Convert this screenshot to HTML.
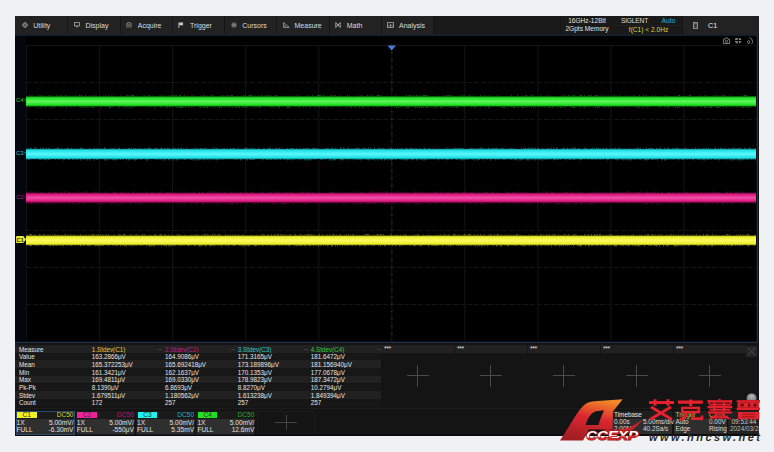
<!DOCTYPE html><html><head><meta charset="utf-8"><style>
html,body{margin:0;padding:0;}
body{width:774px;height:452px;background:#f0f1f5;position:relative;overflow:hidden;font-family:"Liberation Sans",sans-serif;}
.a{position:absolute;}
.t{position:absolute;white-space:nowrap;}
.mi{position:absolute;top:0;height:18px;width:52.26px;color:#dcdcdc;font-size:7px;line-height:18px;}
.mi span{position:absolute;left:17.6px;top:1px;}
.sep{position:absolute;top:0;width:1px;height:18px;background:#151515;}
.mi svg{position:absolute;left:6px;top:6.2px;}
.mt{font-size:6.3px;line-height:8px;color:#e6e6e6;}
.cb{position:absolute;top:411px;width:58px;height:23px;}
</style></head><body>
<div class="a" style="left:15px;top:16px;width:744px;height:419.6px;background:#0c0c0c"></div>
<div class="a" style="left:15px;top:16px;width:744px;height:18px;background:#222">
<div class="mi" style="left:0.64px"><svg width="6" height="6" viewBox="0 0 6 6"><circle cx="3" cy="3" r="2" fill="none" stroke="#a8a8a8" stroke-width="0.9"/><circle cx="3" cy="3" r="0.7" fill="#a8a8a8"/><path d="M3 0V1M3 5V6M0 3H1M5 3H6" stroke="#a8a8a8" stroke-width="0.8"/></svg><span>Utility</span></div>
<div class="sep" style="left:52.40px"></div>
<div class="mi" style="left:52.90px"><svg width="6" height="6" viewBox="0 0 6 6"><rect x="0.45" y="0.6" width="5.1" height="3.3" fill="none" stroke="#a8a8a8" stroke-width="0.8"/><rect x="2.3" y="4" width="1.4" height="1.3" fill="#a8a8a8"/></svg><span>Display</span></div>
<div class="sep" style="left:104.66px"></div>
<div class="mi" style="left:105.16px"><svg width="6" height="6" viewBox="0 0 6 6"><path d="M1 5.6V1.8Q1 0.7 2.2 0.7H3.8Q5 0.7 5 1.8V5.6M3 2V5.6" fill="none" stroke="#a8a8a8" stroke-width="0.8"/></svg><span>Acquire</span></div>
<div class="sep" style="left:156.92px"></div>
<div class="mi" style="left:157.42px"><svg width="6" height="6" viewBox="0 0 6 6"><path d="M0.9 0.6V5.8" stroke="#d0d0d0" stroke-width="0.9"/><path d="M1.3 0.6H5.4L4.6 1.9L5.4 3.2H1.3Z" fill="#d0d0d0"/></svg><span>Trigger</span></div>
<div class="sep" style="left:209.18px"></div>
<div class="mi" style="left:209.68px"><svg width="6" height="6" viewBox="0 0 6 6"><path d="M2 0.4V5.6M4 0.4V5.6M0.4 2.2H5.6M0.4 3.8H5.6" stroke="#999" stroke-width="0.8"/></svg><span>Cursors</span></div>
<div class="sep" style="left:261.44px"></div>
<div class="mi" style="left:261.94px"><svg width="7" height="6" viewBox="0 0 7 6"><path d="M0.6 0.6V5.4H6.2Z" fill="none" stroke="#a8a8a8" stroke-width="0.8"/><path d="M1.3 2.8V4.8H3.3Z" fill="#888"/></svg><span>Measure</span></div>
<div class="sep" style="left:313.70px"></div>
<div class="mi" style="left:314.20px"><svg width="6" height="6" viewBox="0 0 6 6"><path d="M0.8 0.6V5.4M5.2 0.6V5.4M0.8 0.6L3 3L5.2 0.6M0.8 5.4L3 3L5.2 5.4" fill="none" stroke="#c0c0c0" stroke-width="0.8"/></svg><span>Math</span></div>
<div class="sep" style="left:365.96px"></div>
<div class="mi" style="left:366.46px"><svg width="7" height="6" viewBox="0 0 7 6"><rect x="0.5" y="0.6" width="6" height="4.8" fill="none" stroke="#a8a8a8" stroke-width="0.8"/><path d="M2 4.6V3M3.5 4.6V1.8M5 4.6V2.6" stroke="#a8a8a8" stroke-width="0.8"/></svg><span>Analysis</span></div>
<div class="sep" style="left:418.22px"></div>
<div class="a" style="left:419px;top:0;width:126px;height:18px;background:#1a1a1a"></div>
<div class="a" style="left:545px;top:0;width:54px;height:18px;background:#1a1a1a;border-left:1px solid #151515;border-right:1px solid #151515"></div>
<div class="t" style="left:545px;top:1px;width:54px;text-align:center;font-size:6.6px;line-height:8px;color:#e0e0e0">16GHz-12Bit</div>
<div class="t" style="left:545px;top:9px;width:54px;text-align:center;font-size:6.6px;line-height:8px;color:#e0e0e0">2Gpts Memory</div>
<div class="a" style="left:600px;top:0;width:67px;height:18px;background:#1a1a1a;border-right:1px solid #151515"></div>
<div class="a" style="left:600px;top:9px;width:67px;height:1px;background:#222"></div>
<div class="a" style="left:639px;top:0;width:1px;height:9px;background:#151515"></div>
<div class="t" style="left:600px;top:1px;width:39px;text-align:center;font-size:6.7px;line-height:8px;color:#dcdcdc;letter-spacing:-0.2px">SIGLENT</div>
<div class="t" style="left:640px;top:1px;width:27px;text-align:center;font-size:6.8px;line-height:8px;color:#2ab4c8">Auto</div>
<div class="t" style="left:600px;top:9.5px;width:67px;text-align:center;font-size:6.6px;line-height:8px;color:#d8d848">f(C1) &lt; 2.0Hz</div>
<svg class="a" style="left:678px;top:6px" width="5" height="7" viewBox="0 0 5 7"><rect x="0.5" y="1" width="4" height="5.6" fill="none" stroke="#999" stroke-width="0.9"/><path d="M1.7 2V6M3.3 2V6" stroke="#777" stroke-width="0.6"/><rect x="0" y="0.2" width="5" height="0.9" fill="#999"/></svg>
<div class="t" style="left:693px;top:1px;font-size:7.2px;line-height:18px;color:#e8e8e8">C1</div>
</div>
<div class="a" style="left:15px;top:34px;width:744px;height:2px;background:#15202c"></div>
<div class="a" style="left:15px;top:36px;width:742px;height:306px;background:#000"></div>
<div class="a" style="left:15px;top:36px;width:11px;height:306px;background:#04060e"></div>
<svg class="a" style="left:0;top:0" width="774" height="452"><line x1="26.50" y1="45" x2="26.50" y2="341" stroke="#111111" stroke-width="1.3"/><line x1="99.56" y1="45" x2="99.56" y2="341" stroke="#111111" stroke-width="1.3"/><line x1="172.62" y1="45" x2="172.62" y2="341" stroke="#111111" stroke-width="1.3"/><line x1="245.68" y1="45" x2="245.68" y2="341" stroke="#111111" stroke-width="1.3"/><line x1="318.74" y1="45" x2="318.74" y2="341" stroke="#111111" stroke-width="1.3"/><line x1="391.80" y1="45" x2="391.80" y2="341" stroke="#111111" stroke-width="1.3"/><line x1="464.86" y1="45" x2="464.86" y2="341" stroke="#111111" stroke-width="1.3"/><line x1="537.92" y1="45" x2="537.92" y2="341" stroke="#111111" stroke-width="1.3"/><line x1="610.98" y1="45" x2="610.98" y2="341" stroke="#111111" stroke-width="1.3"/><line x1="684.04" y1="45" x2="684.04" y2="341" stroke="#111111" stroke-width="1.3"/><line x1="757.10" y1="45" x2="757.10" y2="341" stroke="#111111" stroke-width="1.3"/><line x1="26" y1="45.5" x2="757" y2="45.5" stroke="#141414" stroke-width="1.1"/><line x1="26" y1="82.5" x2="757" y2="82.5" stroke="#141414" stroke-width="1.1" stroke-dasharray="5 2"/><line x1="26" y1="119.5" x2="757" y2="119.5" stroke="#141414" stroke-width="1.1" stroke-dasharray="5 2"/><line x1="26" y1="156.5" x2="757" y2="156.5" stroke="#141414" stroke-width="1.1" stroke-dasharray="5 2"/><line x1="26" y1="193.5" x2="757" y2="193.5" stroke="#141414" stroke-width="1.1" stroke-dasharray="5 2"/><line x1="26" y1="230.5" x2="757" y2="230.5" stroke="#141414" stroke-width="1.1" stroke-dasharray="5 2"/><line x1="26" y1="267.5" x2="757" y2="267.5" stroke="#141414" stroke-width="1.1" stroke-dasharray="5 2"/><line x1="26" y1="304.5" x2="757" y2="304.5" stroke="#141414" stroke-width="1.1" stroke-dasharray="5 2"/><line x1="26" y1="341.5" x2="757" y2="341.5" stroke="#141414" stroke-width="1.1" stroke-dasharray="5 2"/><rect x="390.8" y="44.5" width="2" height="1.2" fill="#2e2e2e"/><rect x="390.8" y="51.9" width="2" height="1.2" fill="#2e2e2e"/><rect x="390.8" y="59.3" width="2" height="1.2" fill="#2e2e2e"/><rect x="390.8" y="66.7" width="2" height="1.2" fill="#2e2e2e"/><rect x="390.8" y="74.1" width="2" height="1.2" fill="#2e2e2e"/><rect x="390.8" y="81.5" width="2" height="1.2" fill="#2e2e2e"/><rect x="390.8" y="88.9" width="2" height="1.2" fill="#2e2e2e"/><rect x="390.8" y="96.3" width="2" height="1.2" fill="#2e2e2e"/><rect x="390.8" y="103.7" width="2" height="1.2" fill="#2e2e2e"/><rect x="390.8" y="111.1" width="2" height="1.2" fill="#2e2e2e"/><rect x="390.8" y="118.5" width="2" height="1.2" fill="#2e2e2e"/><rect x="390.8" y="125.9" width="2" height="1.2" fill="#2e2e2e"/><rect x="390.8" y="133.3" width="2" height="1.2" fill="#2e2e2e"/><rect x="390.8" y="140.7" width="2" height="1.2" fill="#2e2e2e"/><rect x="390.8" y="148.1" width="2" height="1.2" fill="#2e2e2e"/><rect x="390.8" y="155.5" width="2" height="1.2" fill="#2e2e2e"/><rect x="390.8" y="162.9" width="2" height="1.2" fill="#2e2e2e"/><rect x="390.8" y="170.3" width="2" height="1.2" fill="#2e2e2e"/><rect x="390.8" y="177.7" width="2" height="1.2" fill="#2e2e2e"/><rect x="390.8" y="185.1" width="2" height="1.2" fill="#2e2e2e"/><rect x="390.8" y="192.5" width="2" height="1.2" fill="#2e2e2e"/><rect x="390.8" y="199.9" width="2" height="1.2" fill="#2e2e2e"/><rect x="390.8" y="207.3" width="2" height="1.2" fill="#2e2e2e"/><rect x="390.8" y="214.7" width="2" height="1.2" fill="#2e2e2e"/><rect x="390.8" y="222.1" width="2" height="1.2" fill="#2e2e2e"/><rect x="390.8" y="229.5" width="2" height="1.2" fill="#2e2e2e"/><rect x="390.8" y="236.9" width="2" height="1.2" fill="#2e2e2e"/><rect x="390.8" y="244.3" width="2" height="1.2" fill="#2e2e2e"/><rect x="390.8" y="251.7" width="2" height="1.2" fill="#2e2e2e"/><rect x="390.8" y="259.1" width="2" height="1.2" fill="#2e2e2e"/><rect x="390.8" y="266.5" width="2" height="1.2" fill="#2e2e2e"/><rect x="390.8" y="273.9" width="2" height="1.2" fill="#2e2e2e"/><rect x="390.8" y="281.3" width="2" height="1.2" fill="#2e2e2e"/><rect x="390.8" y="288.7" width="2" height="1.2" fill="#2e2e2e"/><rect x="390.8" y="296.1" width="2" height="1.2" fill="#2e2e2e"/><rect x="390.8" y="303.5" width="2" height="1.2" fill="#2e2e2e"/><rect x="390.8" y="310.9" width="2" height="1.2" fill="#2e2e2e"/><rect x="390.8" y="318.3" width="2" height="1.2" fill="#2e2e2e"/><rect x="390.8" y="325.7" width="2" height="1.2" fill="#2e2e2e"/><rect x="390.8" y="333.1" width="2" height="1.2" fill="#2e2e2e"/><rect x="390.8" y="340.5" width="2" height="1.2" fill="#2e2e2e"/><rect x="25.5" y="192.5" width="1.2" height="2" fill="#2e2e2e"/><rect x="40.1" y="192.5" width="1.2" height="2" fill="#2e2e2e"/><rect x="54.7" y="192.5" width="1.2" height="2" fill="#2e2e2e"/><rect x="69.3" y="192.5" width="1.2" height="2" fill="#2e2e2e"/><rect x="83.9" y="192.5" width="1.2" height="2" fill="#2e2e2e"/><rect x="98.5" y="192.5" width="1.2" height="2" fill="#2e2e2e"/><rect x="113.1" y="192.5" width="1.2" height="2" fill="#2e2e2e"/><rect x="127.7" y="192.5" width="1.2" height="2" fill="#2e2e2e"/><rect x="142.3" y="192.5" width="1.2" height="2" fill="#2e2e2e"/><rect x="156.9" y="192.5" width="1.2" height="2" fill="#2e2e2e"/><rect x="171.5" y="192.5" width="1.2" height="2" fill="#2e2e2e"/><rect x="186.1" y="192.5" width="1.2" height="2" fill="#2e2e2e"/><rect x="200.7" y="192.5" width="1.2" height="2" fill="#2e2e2e"/><rect x="215.3" y="192.5" width="1.2" height="2" fill="#2e2e2e"/><rect x="229.9" y="192.5" width="1.2" height="2" fill="#2e2e2e"/><rect x="244.5" y="192.5" width="1.2" height="2" fill="#2e2e2e"/><rect x="259.1" y="192.5" width="1.2" height="2" fill="#2e2e2e"/><rect x="273.7" y="192.5" width="1.2" height="2" fill="#2e2e2e"/><rect x="288.3" y="192.5" width="1.2" height="2" fill="#2e2e2e"/><rect x="302.9" y="192.5" width="1.2" height="2" fill="#2e2e2e"/><rect x="317.5" y="192.5" width="1.2" height="2" fill="#2e2e2e"/><rect x="332.1" y="192.5" width="1.2" height="2" fill="#2e2e2e"/><rect x="346.7" y="192.5" width="1.2" height="2" fill="#2e2e2e"/><rect x="361.3" y="192.5" width="1.2" height="2" fill="#2e2e2e"/><rect x="375.9" y="192.5" width="1.2" height="2" fill="#2e2e2e"/><rect x="390.5" y="192.5" width="1.2" height="2" fill="#2e2e2e"/><rect x="405.1" y="192.5" width="1.2" height="2" fill="#2e2e2e"/><rect x="419.7" y="192.5" width="1.2" height="2" fill="#2e2e2e"/><rect x="434.3" y="192.5" width="1.2" height="2" fill="#2e2e2e"/><rect x="448.9" y="192.5" width="1.2" height="2" fill="#2e2e2e"/><rect x="463.5" y="192.5" width="1.2" height="2" fill="#2e2e2e"/><rect x="478.1" y="192.5" width="1.2" height="2" fill="#2e2e2e"/><rect x="492.7" y="192.5" width="1.2" height="2" fill="#2e2e2e"/><rect x="507.3" y="192.5" width="1.2" height="2" fill="#2e2e2e"/><rect x="521.9" y="192.5" width="1.2" height="2" fill="#2e2e2e"/><rect x="536.5" y="192.5" width="1.2" height="2" fill="#2e2e2e"/><rect x="551.1" y="192.5" width="1.2" height="2" fill="#2e2e2e"/><rect x="565.7" y="192.5" width="1.2" height="2" fill="#2e2e2e"/><rect x="580.3" y="192.5" width="1.2" height="2" fill="#2e2e2e"/><rect x="594.9" y="192.5" width="1.2" height="2" fill="#2e2e2e"/><rect x="609.5" y="192.5" width="1.2" height="2" fill="#2e2e2e"/><rect x="624.1" y="192.5" width="1.2" height="2" fill="#2e2e2e"/><rect x="638.7" y="192.5" width="1.2" height="2" fill="#2e2e2e"/><rect x="653.3" y="192.5" width="1.2" height="2" fill="#2e2e2e"/><rect x="667.9" y="192.5" width="1.2" height="2" fill="#2e2e2e"/><rect x="682.5" y="192.5" width="1.2" height="2" fill="#2e2e2e"/><rect x="697.1" y="192.5" width="1.2" height="2" fill="#2e2e2e"/><rect x="711.7" y="192.5" width="1.2" height="2" fill="#2e2e2e"/><rect x="726.3" y="192.5" width="1.2" height="2" fill="#2e2e2e"/><rect x="740.9" y="192.5" width="1.2" height="2" fill="#2e2e2e"/><rect x="755.5" y="192.5" width="1.2" height="2" fill="#2e2e2e"/><path d="M387.5 45.5H396L391.7 50.6Z" fill="#4a78d6"/><defs><linearGradient id="tg" x1="0" y1="0" x2="0" y2="1"><stop offset="0" stop-color="#0e8e0e"/><stop offset="0.14" stop-color="#20dc20"/><stop offset="0.5" stop-color="#5cf85c"/><stop offset="0.86" stop-color="#20dc20"/><stop offset="1" stop-color="#0e8e0e"/></linearGradient></defs><rect x="26" y="96.4" width="731" height="10.0" fill="url(#tg)"/><path d="M26 96.4v-0.5h1v0.5zM27 96.4v-0.5h1v0.5zM27 106.4v1h1v-1zM29 96.4v-1.5h1v1.5zM29 106.4v1h1v-1zM30 106.4v0.5h1v-0.5zM31 96.4v-1h1v1zM32 96.4v-1h1v1zM34 96.4v-0.5h1v0.5zM34 106.4v0.5h1v-0.5zM36 106.4v1h1v-1zM37 96.4v-0.5h1v0.5zM38 96.4v-1.5h1v1.5zM38 106.4v1h1v-1zM40 96.4v-1h1v1zM40 106.4v1h1v-1zM41 96.4v-1h1v1zM42 96.4v-1h1v1zM42 106.4v1h1v-1zM43 96.4v-0.5h1v0.5zM45 96.4v-1h1v1zM45 106.4v1.5h1v-1.5zM46 106.4v0.5h1v-0.5zM47 96.4v-0.5h1v0.5zM48 96.4v-1h1v1zM49 96.4v-1h1v1zM49 106.4v0.5h1v-0.5zM50 96.4v-1h1v1zM50 106.4v1.5h1v-1.5zM51 96.4v-1h1v1zM52 106.4v1h1v-1zM53 96.4v-1h1v1zM53 106.4v1h1v-1zM54 106.4v0.5h1v-0.5zM55 106.4v1h1v-1zM56 96.4v-1h1v1zM57 96.4v-1h1v1zM58 96.4v-1h1v1zM59 96.4v-0.5h1v0.5zM59 106.4v1h1v-1zM60 96.4v-1h1v1zM60 106.4v0.5h1v-0.5zM61 96.4v-1.5h1v1.5zM61 106.4v0.5h1v-0.5zM62 96.4v-0.5h1v0.5zM62 106.4v1h1v-1zM63 96.4v-0.5h1v0.5zM63 106.4v0.5h1v-0.5zM64 96.4v-0.5h1v0.5zM65 96.4v-1.5h1v1.5zM66 96.4v-1h1v1zM66 106.4v1.5h1v-1.5zM68 96.4v-1h1v1zM68 106.4v0.5h1v-0.5zM69 96.4v-1h1v1zM69 106.4v0.5h1v-0.5zM70 96.4v-0.5h1v0.5zM70 106.4v1h1v-1zM71 96.4v-0.5h1v0.5zM71 106.4v0.5h1v-0.5zM72 96.4v-1h1v1zM73 106.4v1h1v-1zM74 96.4v-0.5h1v0.5zM75 96.4v-1.5h1v1.5zM75 106.4v0.5h1v-0.5zM76 106.4v0.5h1v-0.5zM77 96.4v-0.5h1v0.5zM78 96.4v-1h1v1zM79 96.4v-1.5h1v1.5zM79 106.4v1h1v-1zM80 96.4v-1h1v1zM80 106.4v1.5h1v-1.5zM81 96.4v-1.5h1v1.5zM81 106.4v0.5h1v-0.5zM82 96.4v-0.5h1v0.5zM82 106.4v1h1v-1zM83 96.4v-0.5h1v0.5zM83 106.4v1h1v-1zM84 96.4v-0.5h1v0.5zM84 106.4v1h1v-1zM85 96.4v-1.5h1v1.5zM85 106.4v0.5h1v-0.5zM86 106.4v1.5h1v-1.5zM87 106.4v0.5h1v-0.5zM88 96.4v-0.5h1v0.5zM88 106.4v1h1v-1zM89 96.4v-1h1v1zM90 106.4v1h1v-1zM91 96.4v-1h1v1zM91 106.4v0.5h1v-0.5zM92 96.4v-1h1v1zM92 106.4v1h1v-1zM93 96.4v-1h1v1zM93 106.4v1.5h1v-1.5zM94 96.4v-0.5h1v0.5zM94 106.4v0.5h1v-0.5zM95 96.4v-1h1v1zM95 106.4v0.5h1v-0.5zM96 96.4v-1h1v1zM96 106.4v0.5h1v-0.5zM97 106.4v0.5h1v-0.5zM98 96.4v-0.5h1v0.5zM99 96.4v-1h1v1zM100 96.4v-0.5h1v0.5zM101 106.4v1.5h1v-1.5zM102 96.4v-0.5h1v0.5zM103 96.4v-1h1v1zM104 96.4v-0.5h1v0.5zM104 106.4v0.5h1v-0.5zM105 96.4v-1.5h1v1.5zM105 106.4v0.5h1v-0.5zM107 96.4v-0.5h1v0.5zM107 106.4v0.5h1v-0.5zM108 96.4v-1h1v1zM108 106.4v0.5h1v-0.5zM109 106.4v1.5h1v-1.5zM110 96.4v-0.5h1v0.5zM110 106.4v1.5h1v-1.5zM111 96.4v-1h1v1zM111 106.4v0.5h1v-0.5zM112 96.4v-1h1v1zM112 106.4v0.5h1v-0.5zM113 96.4v-0.5h1v0.5zM113 106.4v1h1v-1zM114 96.4v-0.5h1v0.5zM117 106.4v1h1v-1zM119 96.4v-0.5h1v0.5zM119 106.4v1.5h1v-1.5zM120 96.4v-1h1v1zM121 96.4v-0.5h1v0.5zM121 106.4v0.5h1v-0.5zM123 96.4v-0.5h1v0.5zM123 106.4v1h1v-1zM124 96.4v-0.5h1v0.5zM124 106.4v1h1v-1zM125 96.4v-1h1v1zM125 106.4v0.5h1v-0.5zM126 106.4v1h1v-1zM127 96.4v-1.5h1v1.5zM127 106.4v1h1v-1zM128 96.4v-1h1v1zM128 106.4v1h1v-1zM129 96.4v-1h1v1zM129 106.4v1h1v-1zM130 106.4v0.5h1v-0.5zM131 96.4v-1.5h1v1.5zM131 106.4v1.5h1v-1.5zM132 96.4v-1.5h1v1.5zM132 106.4v1h1v-1zM133 96.4v-1.5h1v1.5zM133 106.4v1h1v-1zM134 96.4v-0.5h1v0.5zM134 106.4v0.5h1v-0.5zM135 96.4v-0.5h1v0.5zM135 106.4v0.5h1v-0.5zM136 106.4v0.5h1v-0.5zM137 96.4v-1h1v1zM137 106.4v0.5h1v-0.5zM140 96.4v-0.5h1v0.5zM141 106.4v0.5h1v-0.5zM142 96.4v-1h1v1zM144 96.4v-1h1v1zM145 96.4v-1h1v1zM146 96.4v-0.5h1v0.5zM146 106.4v1h1v-1zM148 96.4v-1.5h1v1.5zM149 96.4v-1h1v1zM149 106.4v0.5h1v-0.5zM150 106.4v1h1v-1zM151 96.4v-0.5h1v0.5zM151 106.4v0.5h1v-0.5zM152 96.4v-1h1v1zM152 106.4v0.5h1v-0.5zM153 96.4v-0.5h1v0.5zM154 106.4v1.5h1v-1.5zM155 96.4v-0.5h1v0.5zM155 106.4v0.5h1v-0.5zM156 96.4v-0.5h1v0.5zM156 106.4v0.5h1v-0.5zM157 96.4v-0.5h1v0.5zM159 96.4v-1h1v1zM159 106.4v0.5h1v-0.5zM160 96.4v-1h1v1zM160 106.4v0.5h1v-0.5zM161 96.4v-0.5h1v0.5zM161 106.4v1.5h1v-1.5zM162 96.4v-1h1v1zM163 96.4v-1h1v1zM164 106.4v1h1v-1zM165 96.4v-0.5h1v0.5zM166 96.4v-1h1v1zM166 106.4v1h1v-1zM167 106.4v1.5h1v-1.5zM168 96.4v-1h1v1zM168 106.4v0.5h1v-0.5zM169 96.4v-1h1v1zM169 106.4v1.5h1v-1.5zM170 106.4v1h1v-1zM171 96.4v-1.5h1v1.5zM171 106.4v0.5h1v-0.5zM172 96.4v-1h1v1zM172 106.4v0.5h1v-0.5zM173 106.4v0.5h1v-0.5zM174 96.4v-1.5h1v1.5zM175 96.4v-1h1v1zM175 106.4v1h1v-1zM176 96.4v-1.5h1v1.5zM176 106.4v1h1v-1zM177 96.4v-0.5h1v0.5zM177 106.4v1h1v-1zM178 106.4v1h1v-1zM179 96.4v-1.5h1v1.5zM179 106.4v1.5h1v-1.5zM180 96.4v-1.5h1v1.5zM180 106.4v1.5h1v-1.5zM181 106.4v1.5h1v-1.5zM182 106.4v1.5h1v-1.5zM183 96.4v-0.5h1v0.5zM183 106.4v1h1v-1zM184 96.4v-1.5h1v1.5zM185 106.4v1h1v-1zM186 96.4v-0.5h1v0.5zM186 106.4v0.5h1v-0.5zM187 96.4v-1h1v1zM188 106.4v1.5h1v-1.5zM189 96.4v-0.5h1v0.5zM189 106.4v0.5h1v-0.5zM190 96.4v-0.5h1v0.5zM191 96.4v-1h1v1zM191 106.4v1h1v-1zM192 96.4v-0.5h1v0.5zM192 106.4v0.5h1v-0.5zM193 96.4v-1.5h1v1.5zM193 106.4v1h1v-1zM194 96.4v-0.5h1v0.5zM194 106.4v0.5h1v-0.5zM197 96.4v-0.5h1v0.5zM198 96.4v-0.5h1v0.5zM199 96.4v-0.5h1v0.5zM199 106.4v1h1v-1zM200 96.4v-1h1v1zM200 106.4v1.5h1v-1.5zM201 106.4v0.5h1v-0.5zM202 96.4v-1h1v1zM202 106.4v0.5h1v-0.5zM203 96.4v-1.5h1v1.5zM203 106.4v1h1v-1zM204 106.4v1.5h1v-1.5zM205 96.4v-1h1v1zM206 96.4v-0.5h1v0.5zM206 106.4v1.5h1v-1.5zM207 96.4v-1h1v1zM207 106.4v1.5h1v-1.5zM208 106.4v0.5h1v-0.5zM209 106.4v0.5h1v-0.5zM210 96.4v-1.5h1v1.5zM210 106.4v1h1v-1zM211 96.4v-0.5h1v0.5zM212 96.4v-1.5h1v1.5zM212 106.4v1h1v-1zM213 96.4v-0.5h1v0.5zM213 106.4v0.5h1v-0.5zM214 96.4v-0.5h1v0.5zM214 106.4v1h1v-1zM215 106.4v1h1v-1zM218 106.4v1h1v-1zM219 96.4v-0.5h1v0.5zM219 106.4v1.5h1v-1.5zM220 96.4v-1h1v1zM221 96.4v-1h1v1zM221 106.4v1.5h1v-1.5zM222 96.4v-1h1v1zM222 106.4v0.5h1v-0.5zM223 96.4v-1h1v1zM223 106.4v0.5h1v-0.5zM224 106.4v1h1v-1zM225 96.4v-1h1v1zM227 96.4v-1.5h1v1.5zM227 106.4v1h1v-1zM228 96.4v-1h1v1zM229 96.4v-1h1v1zM229 106.4v1h1v-1zM230 106.4v0.5h1v-0.5zM231 96.4v-1.5h1v1.5zM232 96.4v-1.5h1v1.5zM232 106.4v1.5h1v-1.5zM234 96.4v-0.5h1v0.5zM235 96.4v-0.5h1v0.5zM235 106.4v1h1v-1zM236 106.4v1.5h1v-1.5zM237 96.4v-1h1v1zM237 106.4v0.5h1v-0.5zM238 96.4v-0.5h1v0.5zM238 106.4v1h1v-1zM239 96.4v-0.5h1v0.5zM239 106.4v1.5h1v-1.5zM241 96.4v-1h1v1zM241 106.4v0.5h1v-0.5zM242 96.4v-0.5h1v0.5zM242 106.4v1h1v-1zM243 96.4v-1h1v1zM243 106.4v1.5h1v-1.5zM244 96.4v-1h1v1zM244 106.4v0.5h1v-0.5zM245 96.4v-1.5h1v1.5zM245 106.4v1h1v-1zM246 106.4v1h1v-1zM247 106.4v1h1v-1zM248 96.4v-1h1v1zM249 96.4v-1.5h1v1.5zM249 106.4v0.5h1v-0.5zM250 96.4v-1.5h1v1.5zM251 96.4v-1h1v1zM252 96.4v-1.5h1v1.5zM252 106.4v1.5h1v-1.5zM254 106.4v0.5h1v-0.5zM255 96.4v-1h1v1zM255 106.4v1h1v-1zM256 106.4v1h1v-1zM257 106.4v0.5h1v-0.5zM258 96.4v-1h1v1zM258 106.4v1h1v-1zM259 96.4v-1h1v1zM259 106.4v1h1v-1zM260 96.4v-0.5h1v0.5zM260 106.4v1.5h1v-1.5zM261 96.4v-1.5h1v1.5zM262 96.4v-1h1v1zM264 96.4v-0.5h1v0.5zM265 96.4v-1.5h1v1.5zM266 96.4v-1h1v1zM266 106.4v0.5h1v-0.5zM267 96.4v-1h1v1zM268 96.4v-1.5h1v1.5zM269 96.4v-0.5h1v0.5zM269 106.4v0.5h1v-0.5zM270 96.4v-1h1v1zM270 106.4v1h1v-1zM271 96.4v-1h1v1zM271 106.4v1h1v-1zM272 106.4v1h1v-1zM273 96.4v-0.5h1v0.5zM273 106.4v0.5h1v-0.5zM274 96.4v-1h1v1zM274 106.4v1h1v-1zM275 96.4v-1.5h1v1.5zM275 106.4v0.5h1v-0.5zM276 96.4v-1h1v1zM277 96.4v-1h1v1zM277 106.4v1h1v-1zM278 96.4v-0.5h1v0.5zM278 106.4v1h1v-1zM279 106.4v1.5h1v-1.5zM280 96.4v-0.5h1v0.5zM281 96.4v-0.5h1v0.5zM282 96.4v-0.5h1v0.5zM282 106.4v0.5h1v-0.5zM283 96.4v-0.5h1v0.5zM284 96.4v-1h1v1zM285 96.4v-0.5h1v0.5zM286 106.4v1h1v-1zM287 96.4v-0.5h1v0.5zM287 106.4v1.5h1v-1.5zM288 106.4v1.5h1v-1.5zM289 106.4v1h1v-1zM290 96.4v-1h1v1zM290 106.4v1h1v-1zM291 96.4v-0.5h1v0.5zM292 96.4v-0.5h1v0.5zM293 96.4v-0.5h1v0.5zM294 96.4v-1h1v1zM295 96.4v-0.5h1v0.5zM295 106.4v0.5h1v-0.5zM296 106.4v1h1v-1zM297 96.4v-1.5h1v1.5zM298 106.4v1h1v-1zM299 96.4v-0.5h1v0.5zM299 106.4v1h1v-1zM300 96.4v-0.5h1v0.5zM300 106.4v0.5h1v-0.5zM301 96.4v-0.5h1v0.5zM302 96.4v-0.5h1v0.5zM302 106.4v0.5h1v-0.5zM303 106.4v1h1v-1zM304 96.4v-0.5h1v0.5zM305 96.4v-0.5h1v0.5zM305 106.4v1h1v-1zM306 96.4v-0.5h1v0.5zM306 106.4v0.5h1v-0.5zM307 96.4v-1h1v1zM308 96.4v-0.5h1v0.5zM308 106.4v0.5h1v-0.5zM309 96.4v-1h1v1zM309 106.4v1h1v-1zM310 96.4v-0.5h1v0.5zM310 106.4v1h1v-1zM312 96.4v-1.5h1v1.5zM314 96.4v-0.5h1v0.5zM314 106.4v0.5h1v-0.5zM315 106.4v1.5h1v-1.5zM316 106.4v0.5h1v-0.5zM317 96.4v-1.5h1v1.5zM318 96.4v-1.5h1v1.5zM318 106.4v0.5h1v-0.5zM319 96.4v-1.5h1v1.5zM319 106.4v1h1v-1zM320 96.4v-1.5h1v1.5zM320 106.4v0.5h1v-0.5zM321 96.4v-0.5h1v0.5zM322 96.4v-1h1v1zM322 106.4v1h1v-1zM323 96.4v-1h1v1zM323 106.4v0.5h1v-0.5zM324 96.4v-1h1v1zM324 106.4v0.5h1v-0.5zM325 106.4v0.5h1v-0.5zM326 106.4v1.5h1v-1.5zM327 96.4v-1h1v1zM328 96.4v-0.5h1v0.5zM329 96.4v-0.5h1v0.5zM330 96.4v-1h1v1zM331 96.4v-1.5h1v1.5zM331 106.4v0.5h1v-0.5zM332 106.4v1h1v-1zM333 96.4v-1.5h1v1.5zM334 106.4v0.5h1v-0.5zM335 96.4v-1.5h1v1.5zM336 96.4v-0.5h1v0.5zM337 96.4v-0.5h1v0.5zM337 106.4v1h1v-1zM338 96.4v-0.5h1v0.5zM338 106.4v0.5h1v-0.5zM339 96.4v-1h1v1zM340 106.4v1h1v-1zM341 96.4v-1h1v1zM343 96.4v-0.5h1v0.5zM345 96.4v-0.5h1v0.5zM345 106.4v1h1v-1zM346 96.4v-0.5h1v0.5zM346 106.4v1h1v-1zM347 96.4v-1.5h1v1.5zM348 96.4v-0.5h1v0.5zM348 106.4v0.5h1v-0.5zM349 96.4v-1h1v1zM349 106.4v1h1v-1zM350 106.4v0.5h1v-0.5zM351 96.4v-0.5h1v0.5zM351 106.4v1.5h1v-1.5zM352 106.4v0.5h1v-0.5zM354 106.4v1h1v-1zM355 96.4v-1h1v1zM355 106.4v1h1v-1zM356 106.4v1h1v-1zM357 96.4v-0.5h1v0.5zM358 96.4v-0.5h1v0.5zM359 96.4v-1h1v1zM359 106.4v1.5h1v-1.5zM360 96.4v-1h1v1zM360 106.4v0.5h1v-0.5zM361 96.4v-1h1v1zM361 106.4v0.5h1v-0.5zM362 96.4v-1h1v1zM362 106.4v1.5h1v-1.5zM363 96.4v-0.5h1v0.5zM363 106.4v1h1v-1zM364 96.4v-0.5h1v0.5zM364 106.4v1h1v-1zM366 96.4v-0.5h1v0.5zM367 96.4v-1.5h1v1.5zM367 106.4v1h1v-1zM368 96.4v-1h1v1zM368 106.4v1h1v-1zM369 106.4v0.5h1v-0.5zM370 96.4v-0.5h1v0.5zM371 96.4v-1.5h1v1.5zM373 96.4v-1h1v1zM373 106.4v1h1v-1zM374 96.4v-0.5h1v0.5zM374 106.4v0.5h1v-0.5zM376 106.4v1h1v-1zM377 96.4v-1.5h1v1.5zM377 106.4v0.5h1v-0.5zM378 96.4v-1.5h1v1.5zM378 106.4v1h1v-1zM379 96.4v-1h1v1zM379 106.4v0.5h1v-0.5zM380 96.4v-1h1v1zM381 96.4v-1h1v1zM381 106.4v0.5h1v-0.5zM382 106.4v0.5h1v-0.5zM384 96.4v-0.5h1v0.5zM384 106.4v0.5h1v-0.5zM385 106.4v0.5h1v-0.5zM386 96.4v-0.5h1v0.5zM386 106.4v0.5h1v-0.5zM387 96.4v-1h1v1zM387 106.4v0.5h1v-0.5zM389 96.4v-0.5h1v0.5zM390 96.4v-0.5h1v0.5zM391 106.4v0.5h1v-0.5zM392 96.4v-0.5h1v0.5zM393 96.4v-0.5h1v0.5zM393 106.4v0.5h1v-0.5zM394 96.4v-1h1v1zM394 106.4v1h1v-1zM396 96.4v-1h1v1zM396 106.4v1.5h1v-1.5zM398 96.4v-0.5h1v0.5zM398 106.4v1.5h1v-1.5zM400 96.4v-0.5h1v0.5zM400 106.4v1h1v-1zM401 106.4v0.5h1v-0.5zM402 106.4v0.5h1v-0.5zM403 96.4v-0.5h1v0.5zM403 106.4v1h1v-1zM405 96.4v-1h1v1zM405 106.4v1h1v-1zM406 96.4v-1.5h1v1.5zM406 106.4v1.5h1v-1.5zM407 106.4v1h1v-1zM408 96.4v-1h1v1zM408 106.4v1.5h1v-1.5zM409 96.4v-1h1v1zM409 106.4v0.5h1v-0.5zM410 96.4v-1.5h1v1.5zM410 106.4v0.5h1v-0.5zM411 96.4v-1h1v1zM411 106.4v0.5h1v-0.5zM412 106.4v0.5h1v-0.5zM413 96.4v-1h1v1zM413 106.4v1h1v-1zM414 96.4v-1h1v1zM415 106.4v1.5h1v-1.5zM416 96.4v-1.5h1v1.5zM416 106.4v1h1v-1zM417 96.4v-1h1v1zM417 106.4v1h1v-1zM418 96.4v-0.5h1v0.5zM418 106.4v1h1v-1zM419 96.4v-1h1v1zM419 106.4v1.5h1v-1.5zM420 96.4v-1h1v1zM421 96.4v-1h1v1zM421 106.4v1.5h1v-1.5zM422 96.4v-1h1v1zM422 106.4v1h1v-1zM423 96.4v-1.5h1v1.5zM423 106.4v1.5h1v-1.5zM424 96.4v-1.5h1v1.5zM425 96.4v-1.5h1v1.5zM425 106.4v1h1v-1zM426 96.4v-1h1v1zM426 106.4v1.5h1v-1.5zM427 96.4v-1h1v1zM427 106.4v1h1v-1zM428 96.4v-1h1v1zM428 106.4v1h1v-1zM431 106.4v1h1v-1zM432 96.4v-0.5h1v0.5zM433 96.4v-0.5h1v0.5zM433 106.4v1.5h1v-1.5zM434 96.4v-0.5h1v0.5zM434 106.4v1h1v-1zM435 106.4v1h1v-1zM436 106.4v1h1v-1zM437 96.4v-1h1v1zM437 106.4v1h1v-1zM438 106.4v0.5h1v-0.5zM439 96.4v-0.5h1v0.5zM440 96.4v-0.5h1v0.5zM440 106.4v1.5h1v-1.5zM441 106.4v1h1v-1zM442 96.4v-1h1v1zM442 106.4v1h1v-1zM443 106.4v1h1v-1zM444 96.4v-1h1v1zM445 96.4v-1h1v1zM445 106.4v1h1v-1zM446 96.4v-0.5h1v0.5zM446 106.4v0.5h1v-0.5zM447 96.4v-1.5h1v1.5zM448 96.4v-1.5h1v1.5zM448 106.4v0.5h1v-0.5zM449 106.4v1h1v-1zM450 96.4v-1.5h1v1.5zM451 106.4v1h1v-1zM452 96.4v-1h1v1zM452 106.4v0.5h1v-0.5zM453 96.4v-0.5h1v0.5zM453 106.4v1.5h1v-1.5zM454 96.4v-0.5h1v0.5zM455 96.4v-0.5h1v0.5zM455 106.4v1h1v-1zM456 96.4v-0.5h1v0.5zM456 106.4v1.5h1v-1.5zM457 106.4v1h1v-1zM458 96.4v-1h1v1zM458 106.4v1h1v-1zM460 96.4v-1h1v1zM461 96.4v-0.5h1v0.5zM461 106.4v0.5h1v-0.5zM462 96.4v-1h1v1zM462 106.4v1h1v-1zM463 96.4v-1h1v1zM463 106.4v0.5h1v-0.5zM464 96.4v-1h1v1zM464 106.4v1h1v-1zM466 96.4v-0.5h1v0.5zM467 96.4v-0.5h1v0.5zM467 106.4v0.5h1v-0.5zM468 96.4v-1h1v1zM469 96.4v-1h1v1zM470 96.4v-1h1v1zM470 106.4v0.5h1v-0.5zM471 96.4v-0.5h1v0.5zM471 106.4v1h1v-1zM472 96.4v-1h1v1zM472 106.4v0.5h1v-0.5zM473 96.4v-0.5h1v0.5zM473 106.4v0.5h1v-0.5zM474 96.4v-0.5h1v0.5zM474 106.4v1.5h1v-1.5zM475 106.4v1h1v-1zM476 106.4v0.5h1v-0.5zM477 106.4v0.5h1v-0.5zM478 106.4v0.5h1v-0.5zM479 96.4v-0.5h1v0.5zM480 96.4v-1.5h1v1.5zM480 106.4v1h1v-1zM481 96.4v-0.5h1v0.5zM481 106.4v0.5h1v-0.5zM482 96.4v-0.5h1v0.5zM484 96.4v-1h1v1zM485 106.4v1h1v-1zM486 96.4v-1h1v1zM486 106.4v0.5h1v-0.5zM487 96.4v-0.5h1v0.5zM488 96.4v-1h1v1zM488 106.4v1.5h1v-1.5zM489 96.4v-1h1v1zM489 106.4v1h1v-1zM490 96.4v-0.5h1v0.5zM491 96.4v-1h1v1zM491 106.4v0.5h1v-0.5zM492 106.4v0.5h1v-0.5zM493 96.4v-0.5h1v0.5zM493 106.4v0.5h1v-0.5zM495 106.4v0.5h1v-0.5zM496 96.4v-1h1v1zM496 106.4v0.5h1v-0.5zM497 96.4v-0.5h1v0.5zM497 106.4v0.5h1v-0.5zM498 96.4v-1h1v1zM499 96.4v-0.5h1v0.5zM499 106.4v0.5h1v-0.5zM500 96.4v-0.5h1v0.5zM500 106.4v0.5h1v-0.5zM501 106.4v1.5h1v-1.5zM502 96.4v-0.5h1v0.5zM503 96.4v-0.5h1v0.5zM503 106.4v1.5h1v-1.5zM504 96.4v-0.5h1v0.5zM504 106.4v1.5h1v-1.5zM505 96.4v-0.5h1v0.5zM506 106.4v1h1v-1zM507 106.4v1h1v-1zM508 96.4v-0.5h1v0.5zM508 106.4v0.5h1v-0.5zM509 96.4v-0.5h1v0.5zM510 96.4v-0.5h1v0.5zM510 106.4v0.5h1v-0.5zM511 96.4v-1.5h1v1.5zM511 106.4v1h1v-1zM512 106.4v0.5h1v-0.5zM513 96.4v-0.5h1v0.5zM513 106.4v1.5h1v-1.5zM514 96.4v-0.5h1v0.5zM514 106.4v1.5h1v-1.5zM515 106.4v0.5h1v-0.5zM517 96.4v-1.5h1v1.5zM517 106.4v1h1v-1zM518 96.4v-0.5h1v0.5zM518 106.4v1h1v-1zM520 96.4v-0.5h1v0.5zM520 106.4v0.5h1v-0.5zM521 96.4v-1h1v1zM521 106.4v0.5h1v-0.5zM522 106.4v1.5h1v-1.5zM523 96.4v-0.5h1v0.5zM523 106.4v1.5h1v-1.5zM524 96.4v-0.5h1v0.5zM525 96.4v-1.5h1v1.5zM525 106.4v1.5h1v-1.5zM526 96.4v-1h1v1zM526 106.4v0.5h1v-0.5zM527 96.4v-1h1v1zM527 106.4v1h1v-1zM528 106.4v1h1v-1zM530 96.4v-1h1v1zM530 106.4v0.5h1v-0.5zM531 96.4v-0.5h1v0.5zM531 106.4v1h1v-1zM532 96.4v-1.5h1v1.5zM533 96.4v-1h1v1zM533 106.4v1.5h1v-1.5zM534 96.4v-0.5h1v0.5zM534 106.4v0.5h1v-0.5zM535 106.4v1h1v-1zM537 96.4v-0.5h1v0.5zM537 106.4v0.5h1v-0.5zM538 96.4v-0.5h1v0.5zM538 106.4v0.5h1v-0.5zM539 96.4v-0.5h1v0.5zM539 106.4v0.5h1v-0.5zM540 96.4v-1h1v1zM540 106.4v1h1v-1zM541 96.4v-1h1v1zM541 106.4v0.5h1v-0.5zM542 96.4v-0.5h1v0.5zM542 106.4v1h1v-1zM543 106.4v0.5h1v-0.5zM544 96.4v-0.5h1v0.5zM544 106.4v1h1v-1zM545 96.4v-1h1v1zM545 106.4v0.5h1v-0.5zM547 96.4v-1h1v1zM549 96.4v-1h1v1zM549 106.4v1.5h1v-1.5zM550 96.4v-0.5h1v0.5zM550 106.4v1h1v-1zM551 106.4v0.5h1v-0.5zM552 96.4v-0.5h1v0.5zM552 106.4v1.5h1v-1.5zM553 96.4v-0.5h1v0.5zM553 106.4v0.5h1v-0.5zM554 106.4v1h1v-1zM557 96.4v-0.5h1v0.5zM557 106.4v1h1v-1zM558 106.4v0.5h1v-0.5zM559 106.4v0.5h1v-0.5zM560 96.4v-0.5h1v0.5zM560 106.4v1.5h1v-1.5zM561 96.4v-1h1v1zM562 106.4v1h1v-1zM563 96.4v-1.5h1v1.5zM563 106.4v0.5h1v-0.5zM564 96.4v-0.5h1v0.5zM564 106.4v0.5h1v-0.5zM565 96.4v-1h1v1zM565 106.4v1h1v-1zM566 106.4v0.5h1v-0.5zM567 96.4v-0.5h1v0.5zM567 106.4v0.5h1v-0.5zM568 96.4v-1.5h1v1.5zM569 96.4v-0.5h1v0.5zM569 106.4v0.5h1v-0.5zM570 96.4v-1h1v1zM570 106.4v0.5h1v-0.5zM571 106.4v1h1v-1zM572 96.4v-1h1v1zM572 106.4v1h1v-1zM573 96.4v-1h1v1zM573 106.4v1.5h1v-1.5zM574 96.4v-1.5h1v1.5zM574 106.4v1.5h1v-1.5zM576 96.4v-0.5h1v0.5zM577 96.4v-0.5h1v0.5zM577 106.4v0.5h1v-0.5zM578 96.4v-1h1v1zM578 106.4v0.5h1v-0.5zM579 96.4v-0.5h1v0.5zM579 106.4v0.5h1v-0.5zM580 96.4v-1.5h1v1.5zM580 106.4v1.5h1v-1.5zM581 96.4v-1.5h1v1.5zM583 96.4v-0.5h1v0.5zM583 106.4v1h1v-1zM584 96.4v-1.5h1v1.5zM584 106.4v1.5h1v-1.5zM585 96.4v-0.5h1v0.5zM585 106.4v1h1v-1zM586 96.4v-0.5h1v0.5zM587 106.4v0.5h1v-0.5zM588 96.4v-1.5h1v1.5zM588 106.4v1h1v-1zM589 96.4v-1.5h1v1.5zM589 106.4v0.5h1v-0.5zM590 96.4v-0.5h1v0.5zM591 96.4v-1.5h1v1.5zM593 106.4v1h1v-1zM594 96.4v-1h1v1zM595 96.4v-1.5h1v1.5zM595 106.4v1h1v-1zM596 96.4v-1h1v1zM596 106.4v1h1v-1zM597 96.4v-1.5h1v1.5zM597 106.4v1.5h1v-1.5zM598 96.4v-0.5h1v0.5zM599 96.4v-1h1v1zM599 106.4v1.5h1v-1.5zM601 96.4v-1.5h1v1.5zM602 106.4v1h1v-1zM603 106.4v1h1v-1zM604 96.4v-1h1v1zM604 106.4v0.5h1v-0.5zM605 106.4v1h1v-1zM606 96.4v-0.5h1v0.5zM606 106.4v1h1v-1zM607 96.4v-1h1v1zM607 106.4v0.5h1v-0.5zM608 96.4v-1h1v1zM608 106.4v1.5h1v-1.5zM610 106.4v0.5h1v-0.5zM611 96.4v-1h1v1zM611 106.4v1h1v-1zM612 106.4v0.5h1v-0.5zM613 96.4v-0.5h1v0.5zM614 96.4v-1.5h1v1.5zM614 106.4v1h1v-1zM616 96.4v-1h1v1zM616 106.4v0.5h1v-0.5zM617 96.4v-0.5h1v0.5zM617 106.4v0.5h1v-0.5zM618 96.4v-0.5h1v0.5zM618 106.4v1h1v-1zM619 96.4v-1.5h1v1.5zM620 96.4v-0.5h1v0.5zM620 106.4v1h1v-1zM621 106.4v1h1v-1zM623 96.4v-0.5h1v0.5zM623 106.4v1h1v-1zM624 96.4v-1h1v1zM624 106.4v0.5h1v-0.5zM626 106.4v0.5h1v-0.5zM627 96.4v-1h1v1zM627 106.4v1h1v-1zM628 96.4v-0.5h1v0.5zM629 96.4v-0.5h1v0.5zM630 96.4v-1h1v1zM630 106.4v0.5h1v-0.5zM631 96.4v-0.5h1v0.5zM632 96.4v-0.5h1v0.5zM633 96.4v-1h1v1zM633 106.4v0.5h1v-0.5zM634 96.4v-1h1v1zM634 106.4v0.5h1v-0.5zM635 96.4v-0.5h1v0.5zM635 106.4v1h1v-1zM636 96.4v-0.5h1v0.5zM637 106.4v1.5h1v-1.5zM638 96.4v-0.5h1v0.5zM638 106.4v1h1v-1zM639 96.4v-1.5h1v1.5zM639 106.4v1h1v-1zM641 96.4v-0.5h1v0.5zM642 96.4v-0.5h1v0.5zM642 106.4v1.5h1v-1.5zM643 96.4v-1.5h1v1.5zM644 106.4v0.5h1v-0.5zM645 106.4v0.5h1v-0.5zM646 96.4v-1.5h1v1.5zM646 106.4v0.5h1v-0.5zM647 106.4v1h1v-1zM648 96.4v-0.5h1v0.5zM648 106.4v1h1v-1zM650 96.4v-0.5h1v0.5zM650 106.4v0.5h1v-0.5zM651 96.4v-1h1v1zM652 96.4v-1h1v1zM653 96.4v-0.5h1v0.5zM655 96.4v-1h1v1zM656 96.4v-0.5h1v0.5zM657 96.4v-1h1v1zM658 106.4v0.5h1v-0.5zM659 96.4v-0.5h1v0.5zM659 106.4v1h1v-1zM660 96.4v-0.5h1v0.5zM660 106.4v1h1v-1zM662 106.4v0.5h1v-0.5zM664 96.4v-1h1v1zM664 106.4v1h1v-1zM665 96.4v-1h1v1zM665 106.4v0.5h1v-0.5zM666 106.4v0.5h1v-0.5zM667 96.4v-1h1v1zM667 106.4v1h1v-1zM668 96.4v-0.5h1v0.5zM668 106.4v1.5h1v-1.5zM669 96.4v-0.5h1v0.5zM669 106.4v0.5h1v-0.5zM670 96.4v-0.5h1v0.5zM672 106.4v0.5h1v-0.5zM673 106.4v0.5h1v-0.5zM674 96.4v-0.5h1v0.5zM675 96.4v-1h1v1zM675 106.4v1.5h1v-1.5zM676 106.4v0.5h1v-0.5zM677 96.4v-0.5h1v0.5zM677 106.4v1.5h1v-1.5zM678 96.4v-1.5h1v1.5zM678 106.4v0.5h1v-0.5zM679 96.4v-1.5h1v1.5zM679 106.4v1.5h1v-1.5zM680 96.4v-0.5h1v0.5zM681 106.4v1h1v-1zM682 96.4v-0.5h1v0.5zM683 96.4v-0.5h1v0.5zM683 106.4v1h1v-1zM684 96.4v-0.5h1v0.5zM685 96.4v-0.5h1v0.5zM685 106.4v0.5h1v-0.5zM686 96.4v-1h1v1zM686 106.4v0.5h1v-0.5zM687 106.4v1h1v-1zM688 96.4v-0.5h1v0.5zM689 96.4v-1.5h1v1.5zM689 106.4v1h1v-1zM690 96.4v-1.5h1v1.5zM690 106.4v0.5h1v-0.5zM691 106.4v0.5h1v-0.5zM692 106.4v0.5h1v-0.5zM693 106.4v1.5h1v-1.5zM694 106.4v0.5h1v-0.5zM695 106.4v1h1v-1zM696 106.4v1h1v-1zM697 96.4v-0.5h1v0.5zM697 106.4v0.5h1v-0.5zM698 96.4v-0.5h1v0.5zM698 106.4v0.5h1v-0.5zM699 96.4v-1h1v1zM700 96.4v-0.5h1v0.5zM700 106.4v1h1v-1zM701 96.4v-1h1v1zM701 106.4v1h1v-1zM702 96.4v-0.5h1v0.5zM702 106.4v0.5h1v-0.5zM703 96.4v-0.5h1v0.5zM704 96.4v-1h1v1zM704 106.4v1.5h1v-1.5zM705 96.4v-1h1v1zM705 106.4v1.5h1v-1.5zM706 96.4v-1h1v1zM707 106.4v1.5h1v-1.5zM709 96.4v-0.5h1v0.5zM709 106.4v1h1v-1zM710 96.4v-0.5h1v0.5zM710 106.4v1.5h1v-1.5zM711 96.4v-0.5h1v0.5zM711 106.4v1.5h1v-1.5zM712 96.4v-0.5h1v0.5zM712 106.4v0.5h1v-0.5zM713 96.4v-1.5h1v1.5zM713 106.4v0.5h1v-0.5zM714 106.4v0.5h1v-0.5zM716 96.4v-1.5h1v1.5zM716 106.4v1h1v-1zM717 96.4v-0.5h1v0.5zM717 106.4v1.5h1v-1.5zM718 96.4v-1h1v1zM718 106.4v1.5h1v-1.5zM719 106.4v1h1v-1zM720 106.4v0.5h1v-0.5zM721 96.4v-1.5h1v1.5zM721 106.4v0.5h1v-0.5zM722 96.4v-0.5h1v0.5zM722 106.4v0.5h1v-0.5zM723 96.4v-1.5h1v1.5zM723 106.4v1.5h1v-1.5zM724 96.4v-1h1v1zM725 96.4v-1h1v1zM726 96.4v-0.5h1v0.5zM726 106.4v1.5h1v-1.5zM728 96.4v-0.5h1v0.5zM729 96.4v-1h1v1zM730 96.4v-0.5h1v0.5zM730 106.4v1h1v-1zM731 96.4v-1h1v1zM731 106.4v0.5h1v-0.5zM732 106.4v0.5h1v-0.5zM734 96.4v-0.5h1v0.5zM734 106.4v1h1v-1zM736 106.4v0.5h1v-0.5zM737 96.4v-0.5h1v0.5zM737 106.4v1h1v-1zM738 96.4v-0.5h1v0.5zM740 96.4v-0.5h1v0.5zM740 106.4v0.5h1v-0.5zM741 96.4v-1h1v1zM741 106.4v1h1v-1zM742 106.4v1h1v-1zM743 96.4v-1h1v1zM743 106.4v1.5h1v-1.5zM744 96.4v-1.5h1v1.5zM744 106.4v1h1v-1zM745 96.4v-1.5h1v1.5zM746 96.4v-1.5h1v1.5zM746 106.4v1.5h1v-1.5zM747 96.4v-0.5h1v0.5zM747 106.4v0.5h1v-0.5zM748 96.4v-0.5h1v0.5zM748 106.4v1h1v-1zM749 96.4v-0.5h1v0.5zM749 106.4v0.5h1v-0.5zM750 96.4v-0.5h1v0.5zM750 106.4v1h1v-1zM751 96.4v-0.5h1v0.5zM752 96.4v-0.5h1v0.5zM755 96.4v-0.5h1v0.5zM755 106.4v1h1v-1zM756 106.4v0.5h1v-0.5z" fill="#0e8e0e" opacity="0.6"/><defs><linearGradient id="tc" x1="0" y1="0" x2="0" y2="1"><stop offset="0" stop-color="#0e8a8e"/><stop offset="0.14" stop-color="#20e0e6"/><stop offset="0.5" stop-color="#5cf8fa"/><stop offset="0.86" stop-color="#20e0e6"/><stop offset="1" stop-color="#0e8a8e"/></linearGradient></defs><rect x="26" y="148.9" width="731" height="10.199999999999989" fill="url(#tc)"/><path d="M26 159.1v0.5h1v-0.5zM27 148.9v-0.5h1v0.5zM28 148.9v-1h1v1zM28 159.1v1h1v-1zM29 159.1v1h1v-1zM30 148.9v-1.5h1v1.5zM31 148.9v-1h1v1zM31 159.1v0.5h1v-0.5zM33 159.1v0.5h1v-0.5zM34 148.9v-1.5h1v1.5zM35 148.9v-1.5h1v1.5zM35 159.1v0.5h1v-0.5zM36 148.9v-0.5h1v0.5zM37 148.9v-0.5h1v0.5zM39 159.1v1h1v-1zM40 148.9v-1.5h1v1.5zM40 159.1v1h1v-1zM42 148.9v-0.5h1v0.5zM42 159.1v1h1v-1zM43 148.9v-1.5h1v1.5zM44 148.9v-0.5h1v0.5zM44 159.1v1h1v-1zM45 148.9v-0.5h1v0.5zM45 159.1v1.5h1v-1.5zM46 148.9v-1.5h1v1.5zM46 159.1v1h1v-1zM48 148.9v-1h1v1zM48 159.1v1h1v-1zM49 148.9v-1h1v1zM49 159.1v1h1v-1zM50 148.9v-0.5h1v0.5zM51 159.1v0.5h1v-0.5zM52 148.9v-0.5h1v0.5zM54 148.9v-0.5h1v0.5zM55 148.9v-1h1v1zM55 159.1v1h1v-1zM56 148.9v-1h1v1zM57 148.9v-1.5h1v1.5zM58 148.9v-1.5h1v1.5zM58 159.1v0.5h1v-0.5zM59 148.9v-0.5h1v0.5zM59 159.1v1h1v-1zM60 148.9v-0.5h1v0.5zM61 148.9v-1h1v1zM61 159.1v0.5h1v-0.5zM63 159.1v1.5h1v-1.5zM64 148.9v-0.5h1v0.5zM64 159.1v1h1v-1zM65 148.9v-0.5h1v0.5zM66 148.9v-0.5h1v0.5zM67 148.9v-1.5h1v1.5zM67 159.1v0.5h1v-0.5zM68 148.9v-1h1v1zM68 159.1v1h1v-1zM69 159.1v1h1v-1zM70 148.9v-1h1v1zM71 148.9v-1h1v1zM72 148.9v-0.5h1v0.5zM72 159.1v1h1v-1zM73 148.9v-0.5h1v0.5zM73 159.1v0.5h1v-0.5zM74 148.9v-0.5h1v0.5zM74 159.1v1h1v-1zM75 148.9v-0.5h1v0.5zM75 159.1v0.5h1v-0.5zM76 159.1v0.5h1v-0.5zM77 148.9v-1h1v1zM77 159.1v1h1v-1zM78 148.9v-0.5h1v0.5zM78 159.1v0.5h1v-0.5zM79 148.9v-0.5h1v0.5zM80 148.9v-1.5h1v1.5zM80 159.1v1.5h1v-1.5zM81 148.9v-1.5h1v1.5zM81 159.1v0.5h1v-0.5zM82 148.9v-1h1v1zM83 148.9v-0.5h1v0.5zM83 159.1v1h1v-1zM84 148.9v-0.5h1v0.5zM85 159.1v0.5h1v-0.5zM86 159.1v0.5h1v-0.5zM87 159.1v1.5h1v-1.5zM88 159.1v0.5h1v-0.5zM89 148.9v-1h1v1zM89 159.1v0.5h1v-0.5zM90 148.9v-0.5h1v0.5zM90 159.1v1.5h1v-1.5zM93 148.9v-1h1v1zM94 148.9v-1h1v1zM94 159.1v1.5h1v-1.5zM95 148.9v-0.5h1v0.5zM96 148.9v-1h1v1zM96 159.1v1h1v-1zM97 148.9v-0.5h1v0.5zM97 159.1v1h1v-1zM98 148.9v-1h1v1zM99 159.1v0.5h1v-0.5zM100 148.9v-0.5h1v0.5zM101 148.9v-1h1v1zM103 148.9v-0.5h1v0.5zM103 159.1v0.5h1v-0.5zM104 148.9v-1.5h1v1.5zM104 159.1v1.5h1v-1.5zM105 148.9v-1.5h1v1.5zM105 159.1v1.5h1v-1.5zM106 159.1v0.5h1v-0.5zM107 159.1v1.5h1v-1.5zM108 159.1v0.5h1v-0.5zM109 148.9v-0.5h1v0.5zM110 148.9v-1h1v1zM110 159.1v1h1v-1zM111 148.9v-0.5h1v0.5zM112 148.9v-1h1v1zM112 159.1v1h1v-1zM113 148.9v-1h1v1zM113 159.1v1.5h1v-1.5zM114 159.1v1h1v-1zM115 148.9v-1.5h1v1.5zM115 159.1v1.5h1v-1.5zM116 159.1v1h1v-1zM117 148.9v-0.5h1v0.5zM117 159.1v1h1v-1zM118 148.9v-1.5h1v1.5zM119 148.9v-1.5h1v1.5zM119 159.1v0.5h1v-0.5zM120 159.1v1h1v-1zM122 148.9v-0.5h1v0.5zM122 159.1v1h1v-1zM123 159.1v0.5h1v-0.5zM124 148.9v-0.5h1v0.5zM126 148.9v-1h1v1zM126 159.1v1.5h1v-1.5zM128 148.9v-1h1v1zM128 159.1v1.5h1v-1.5zM129 148.9v-1.5h1v1.5zM129 159.1v1h1v-1zM130 159.1v1h1v-1zM131 148.9v-1.5h1v1.5zM131 159.1v0.5h1v-0.5zM132 159.1v0.5h1v-0.5zM133 148.9v-1h1v1zM133 159.1v0.5h1v-0.5zM134 148.9v-1h1v1zM134 159.1v1.5h1v-1.5zM135 148.9v-1h1v1zM135 159.1v1.5h1v-1.5zM136 148.9v-0.5h1v0.5zM136 159.1v1h1v-1zM137 148.9v-0.5h1v0.5zM137 159.1v0.5h1v-0.5zM138 148.9v-1h1v1zM139 148.9v-0.5h1v0.5zM139 159.1v0.5h1v-0.5zM140 148.9v-1h1v1zM140 159.1v0.5h1v-0.5zM141 148.9v-0.5h1v0.5zM141 159.1v1h1v-1zM142 148.9v-0.5h1v0.5zM144 148.9v-1h1v1zM144 159.1v0.5h1v-0.5zM145 148.9v-0.5h1v0.5zM146 148.9v-0.5h1v0.5zM146 159.1v1.5h1v-1.5zM147 148.9v-1h1v1zM147 159.1v1.5h1v-1.5zM148 148.9v-1.5h1v1.5zM148 159.1v0.5h1v-0.5zM149 148.9v-1.5h1v1.5zM150 148.9v-1.5h1v1.5zM150 159.1v0.5h1v-0.5zM151 148.9v-0.5h1v0.5zM153 148.9v-0.5h1v0.5zM153 159.1v0.5h1v-0.5zM154 148.9v-0.5h1v0.5zM155 148.9v-1.5h1v1.5zM155 159.1v0.5h1v-0.5zM156 148.9v-1h1v1zM156 159.1v1h1v-1zM157 148.9v-1h1v1zM158 159.1v1h1v-1zM160 148.9v-1h1v1zM160 159.1v0.5h1v-0.5zM161 148.9v-1.5h1v1.5zM161 159.1v1h1v-1zM162 148.9v-1h1v1zM163 159.1v1.5h1v-1.5zM164 148.9v-1h1v1zM164 159.1v0.5h1v-0.5zM165 148.9v-1h1v1zM165 159.1v1.5h1v-1.5zM167 148.9v-1.5h1v1.5zM168 148.9v-1h1v1zM168 159.1v1h1v-1zM169 148.9v-1h1v1zM169 159.1v1.5h1v-1.5zM171 159.1v0.5h1v-0.5zM172 148.9v-0.5h1v0.5zM172 159.1v1.5h1v-1.5zM173 148.9v-1.5h1v1.5zM174 148.9v-1h1v1zM174 159.1v1.5h1v-1.5zM175 148.9v-1h1v1zM176 159.1v1.5h1v-1.5zM177 148.9v-0.5h1v0.5zM177 159.1v1h1v-1zM178 148.9v-1.5h1v1.5zM178 159.1v0.5h1v-0.5zM179 159.1v0.5h1v-0.5zM180 148.9v-1h1v1zM180 159.1v0.5h1v-0.5zM181 148.9v-1.5h1v1.5zM181 159.1v0.5h1v-0.5zM182 159.1v0.5h1v-0.5zM183 148.9v-1h1v1zM183 159.1v0.5h1v-0.5zM184 159.1v1h1v-1zM185 148.9v-0.5h1v0.5zM185 159.1v1h1v-1zM186 148.9v-1h1v1zM187 148.9v-0.5h1v0.5zM187 159.1v0.5h1v-0.5zM189 159.1v0.5h1v-0.5zM190 159.1v1h1v-1zM191 148.9v-0.5h1v0.5zM191 159.1v1h1v-1zM192 148.9v-0.5h1v0.5zM192 159.1v0.5h1v-0.5zM193 159.1v1.5h1v-1.5zM194 148.9v-1.5h1v1.5zM194 159.1v0.5h1v-0.5zM195 159.1v1.5h1v-1.5zM196 148.9v-1h1v1zM197 148.9v-1h1v1zM197 159.1v1.5h1v-1.5zM198 148.9v-0.5h1v0.5zM198 159.1v1.5h1v-1.5zM199 148.9v-0.5h1v0.5zM199 159.1v1h1v-1zM200 148.9v-1h1v1zM200 159.1v1h1v-1zM201 148.9v-1h1v1zM202 148.9v-0.5h1v0.5zM202 159.1v1h1v-1zM203 148.9v-1h1v1zM203 159.1v1.5h1v-1.5zM204 148.9v-0.5h1v0.5zM204 159.1v1h1v-1zM205 148.9v-1.5h1v1.5zM205 159.1v0.5h1v-0.5zM206 148.9v-0.5h1v0.5zM206 159.1v0.5h1v-0.5zM207 148.9v-0.5h1v0.5zM207 159.1v1h1v-1zM208 159.1v0.5h1v-0.5zM209 148.9v-0.5h1v0.5zM209 159.1v1.5h1v-1.5zM210 159.1v0.5h1v-0.5zM212 148.9v-1h1v1zM212 159.1v1h1v-1zM213 159.1v0.5h1v-0.5zM214 148.9v-1.5h1v1.5zM214 159.1v1h1v-1zM215 148.9v-0.5h1v0.5zM215 159.1v0.5h1v-0.5zM216 148.9v-1h1v1zM216 159.1v1.5h1v-1.5zM217 148.9v-1h1v1zM217 159.1v1h1v-1zM218 148.9v-0.5h1v0.5zM218 159.1v1h1v-1zM219 159.1v1h1v-1zM221 159.1v0.5h1v-0.5zM222 148.9v-1h1v1zM222 159.1v1h1v-1zM223 148.9v-0.5h1v0.5zM223 159.1v0.5h1v-0.5zM224 148.9v-1h1v1zM224 159.1v0.5h1v-0.5zM226 148.9v-0.5h1v0.5zM227 148.9v-1h1v1zM227 159.1v1h1v-1zM230 148.9v-1h1v1zM230 159.1v0.5h1v-0.5zM231 148.9v-0.5h1v0.5zM232 148.9v-1h1v1zM232 159.1v0.5h1v-0.5zM233 148.9v-1h1v1zM234 148.9v-0.5h1v0.5zM234 159.1v1h1v-1zM235 148.9v-0.5h1v0.5zM235 159.1v1h1v-1zM237 148.9v-0.5h1v0.5zM237 159.1v1h1v-1zM238 148.9v-1.5h1v1.5zM238 159.1v0.5h1v-0.5zM240 159.1v1.5h1v-1.5zM241 159.1v1h1v-1zM242 159.1v0.5h1v-0.5zM244 148.9v-1h1v1zM245 148.9v-1.5h1v1.5zM245 159.1v1h1v-1zM246 148.9v-1.5h1v1.5zM246 159.1v0.5h1v-0.5zM247 148.9v-0.5h1v0.5zM247 159.1v1.5h1v-1.5zM248 148.9v-0.5h1v0.5zM249 159.1v1h1v-1zM250 148.9v-1.5h1v1.5zM250 159.1v1h1v-1zM251 148.9v-0.5h1v0.5zM251 159.1v1h1v-1zM252 148.9v-1h1v1zM252 159.1v1h1v-1zM253 148.9v-0.5h1v0.5zM253 159.1v1h1v-1zM254 148.9v-1h1v1zM254 159.1v1h1v-1zM255 148.9v-0.5h1v0.5zM258 148.9v-1h1v1zM259 148.9v-0.5h1v0.5zM261 159.1v1.5h1v-1.5zM263 148.9v-1h1v1zM263 159.1v1h1v-1zM264 148.9v-1h1v1zM265 159.1v0.5h1v-0.5zM266 159.1v1h1v-1zM267 148.9v-1h1v1zM267 159.1v1h1v-1zM268 148.9v-1h1v1zM268 159.1v1h1v-1zM269 148.9v-1h1v1zM269 159.1v0.5h1v-0.5zM270 148.9v-1.5h1v1.5zM270 159.1v1h1v-1zM271 159.1v1h1v-1zM272 148.9v-0.5h1v0.5zM273 148.9v-0.5h1v0.5zM273 159.1v1h1v-1zM274 159.1v1h1v-1zM275 148.9v-1.5h1v1.5zM275 159.1v0.5h1v-0.5zM276 148.9v-1h1v1zM276 159.1v1h1v-1zM277 159.1v0.5h1v-0.5zM278 148.9v-1.5h1v1.5zM278 159.1v0.5h1v-0.5zM279 148.9v-1h1v1zM279 159.1v0.5h1v-0.5zM280 159.1v1h1v-1zM281 148.9v-1h1v1zM281 159.1v0.5h1v-0.5zM283 159.1v0.5h1v-0.5zM284 159.1v1h1v-1zM286 148.9v-0.5h1v0.5zM286 159.1v1h1v-1zM287 148.9v-1h1v1zM287 159.1v1.5h1v-1.5zM288 148.9v-0.5h1v0.5zM288 159.1v1h1v-1zM289 159.1v0.5h1v-0.5zM290 148.9v-1h1v1zM290 159.1v1h1v-1zM291 148.9v-1h1v1zM291 159.1v0.5h1v-0.5zM292 148.9v-1h1v1zM292 159.1v1.5h1v-1.5zM293 148.9v-1h1v1zM293 159.1v0.5h1v-0.5zM294 148.9v-0.5h1v0.5zM294 159.1v1h1v-1zM296 148.9v-1h1v1zM297 159.1v0.5h1v-0.5zM298 159.1v1.5h1v-1.5zM299 148.9v-1h1v1zM300 159.1v1h1v-1zM301 148.9v-0.5h1v0.5zM302 148.9v-0.5h1v0.5zM302 159.1v0.5h1v-0.5zM303 148.9v-1h1v1zM304 148.9v-0.5h1v0.5zM304 159.1v1.5h1v-1.5zM305 148.9v-1h1v1zM305 159.1v1h1v-1zM306 148.9v-1h1v1zM306 159.1v1.5h1v-1.5zM307 148.9v-1h1v1zM307 159.1v0.5h1v-0.5zM308 148.9v-0.5h1v0.5zM308 159.1v1.5h1v-1.5zM309 148.9v-1h1v1zM309 159.1v1h1v-1zM310 159.1v1.5h1v-1.5zM311 159.1v0.5h1v-0.5zM312 148.9v-1h1v1zM313 148.9v-1h1v1zM313 159.1v0.5h1v-0.5zM314 148.9v-1.5h1v1.5zM315 148.9v-0.5h1v0.5zM315 159.1v1h1v-1zM316 148.9v-1h1v1zM317 148.9v-1h1v1zM320 159.1v1h1v-1zM321 159.1v0.5h1v-0.5zM322 159.1v1h1v-1zM325 148.9v-1h1v1zM325 159.1v1h1v-1zM326 148.9v-1h1v1zM327 148.9v-1h1v1zM328 148.9v-1h1v1zM329 159.1v1.5h1v-1.5zM330 148.9v-1h1v1zM330 159.1v1.5h1v-1.5zM331 148.9v-0.5h1v0.5zM332 148.9v-1.5h1v1.5zM332 159.1v1.5h1v-1.5zM333 148.9v-1h1v1zM333 159.1v1h1v-1zM334 159.1v1.5h1v-1.5zM335 148.9v-1.5h1v1.5zM335 159.1v1h1v-1zM336 148.9v-0.5h1v0.5zM340 148.9v-1.5h1v1.5zM340 159.1v1.5h1v-1.5zM341 148.9v-1.5h1v1.5zM341 159.1v1h1v-1zM342 159.1v1.5h1v-1.5zM343 148.9v-1.5h1v1.5zM343 159.1v1h1v-1zM344 148.9v-1h1v1zM344 159.1v0.5h1v-0.5zM345 148.9v-0.5h1v0.5zM347 148.9v-1.5h1v1.5zM347 159.1v1.5h1v-1.5zM348 148.9v-1h1v1zM349 148.9v-0.5h1v0.5zM349 159.1v0.5h1v-0.5zM350 148.9v-0.5h1v0.5zM350 159.1v0.5h1v-0.5zM351 148.9v-0.5h1v0.5zM352 148.9v-0.5h1v0.5zM352 159.1v0.5h1v-0.5zM353 148.9v-0.5h1v0.5zM354 148.9v-1h1v1zM354 159.1v1.5h1v-1.5zM355 148.9v-0.5h1v0.5zM355 159.1v0.5h1v-0.5zM356 148.9v-1.5h1v1.5zM356 159.1v1h1v-1zM357 148.9v-1h1v1zM357 159.1v0.5h1v-0.5zM358 148.9v-1.5h1v1.5zM358 159.1v0.5h1v-0.5zM359 148.9v-1h1v1zM359 159.1v1h1v-1zM360 159.1v1.5h1v-1.5zM361 148.9v-0.5h1v0.5zM362 148.9v-0.5h1v0.5zM362 159.1v1h1v-1zM363 148.9v-1.5h1v1.5zM364 148.9v-0.5h1v0.5zM364 159.1v0.5h1v-0.5zM365 148.9v-1h1v1zM366 148.9v-1h1v1zM366 159.1v1h1v-1zM367 159.1v1h1v-1zM368 148.9v-1.5h1v1.5zM368 159.1v1.5h1v-1.5zM369 159.1v1h1v-1zM370 148.9v-1.5h1v1.5zM370 159.1v0.5h1v-0.5zM371 159.1v0.5h1v-0.5zM372 159.1v1h1v-1zM373 159.1v0.5h1v-0.5zM374 148.9v-1.5h1v1.5zM374 159.1v1.5h1v-1.5zM376 148.9v-0.5h1v0.5zM376 159.1v0.5h1v-0.5zM377 159.1v0.5h1v-0.5zM378 148.9v-1h1v1zM378 159.1v1.5h1v-1.5zM379 148.9v-1.5h1v1.5zM380 148.9v-0.5h1v0.5zM380 159.1v1h1v-1zM381 148.9v-0.5h1v0.5zM381 159.1v1.5h1v-1.5zM382 148.9v-1h1v1zM382 159.1v0.5h1v-0.5zM383 148.9v-1h1v1zM384 148.9v-0.5h1v0.5zM384 159.1v1.5h1v-1.5zM385 159.1v1h1v-1zM386 159.1v0.5h1v-0.5zM388 148.9v-1h1v1zM388 159.1v1.5h1v-1.5zM389 159.1v0.5h1v-0.5zM390 148.9v-1.5h1v1.5zM390 159.1v1h1v-1zM391 148.9v-1h1v1zM391 159.1v1.5h1v-1.5zM392 159.1v1h1v-1zM393 148.9v-0.5h1v0.5zM393 159.1v0.5h1v-0.5zM394 159.1v0.5h1v-0.5zM395 148.9v-0.5h1v0.5zM395 159.1v1h1v-1zM396 159.1v0.5h1v-0.5zM397 148.9v-1h1v1zM398 148.9v-0.5h1v0.5zM399 148.9v-0.5h1v0.5zM399 159.1v0.5h1v-0.5zM400 148.9v-0.5h1v0.5zM400 159.1v1h1v-1zM401 148.9v-1h1v1zM402 148.9v-0.5h1v0.5zM402 159.1v1h1v-1zM403 159.1v0.5h1v-0.5zM404 159.1v1h1v-1zM405 148.9v-1h1v1zM405 159.1v1.5h1v-1.5zM406 148.9v-1h1v1zM406 159.1v1.5h1v-1.5zM407 148.9v-1h1v1zM407 159.1v1h1v-1zM408 159.1v0.5h1v-0.5zM409 148.9v-1h1v1zM409 159.1v0.5h1v-0.5zM410 148.9v-1h1v1zM411 148.9v-1.5h1v1.5zM411 159.1v1.5h1v-1.5zM412 148.9v-0.5h1v0.5zM412 159.1v1h1v-1zM413 148.9v-1h1v1zM413 159.1v1h1v-1zM414 148.9v-0.5h1v0.5zM415 148.9v-0.5h1v0.5zM415 159.1v0.5h1v-0.5zM416 148.9v-1h1v1zM416 159.1v1.5h1v-1.5zM417 148.9v-0.5h1v0.5zM417 159.1v1h1v-1zM419 148.9v-0.5h1v0.5zM419 159.1v0.5h1v-0.5zM420 148.9v-1h1v1zM420 159.1v1h1v-1zM421 159.1v1h1v-1zM422 159.1v0.5h1v-0.5zM423 148.9v-0.5h1v0.5zM423 159.1v1.5h1v-1.5zM424 148.9v-1h1v1zM424 159.1v1.5h1v-1.5zM425 148.9v-1.5h1v1.5zM425 159.1v1h1v-1zM426 159.1v1h1v-1zM428 148.9v-1h1v1zM428 159.1v0.5h1v-0.5zM429 148.9v-1h1v1zM429 159.1v1h1v-1zM430 148.9v-0.5h1v0.5zM431 159.1v0.5h1v-0.5zM432 159.1v0.5h1v-0.5zM433 148.9v-1h1v1zM434 159.1v1h1v-1zM436 148.9v-0.5h1v0.5zM437 159.1v1.5h1v-1.5zM438 148.9v-0.5h1v0.5zM438 159.1v1h1v-1zM439 148.9v-0.5h1v0.5zM439 159.1v0.5h1v-0.5zM440 148.9v-0.5h1v0.5zM441 159.1v1h1v-1zM442 159.1v0.5h1v-0.5zM443 159.1v0.5h1v-0.5zM444 148.9v-0.5h1v0.5zM445 159.1v0.5h1v-0.5zM446 148.9v-1.5h1v1.5zM446 159.1v1.5h1v-1.5zM447 148.9v-0.5h1v0.5zM447 159.1v1h1v-1zM448 159.1v1h1v-1zM449 148.9v-1h1v1zM449 159.1v0.5h1v-0.5zM450 148.9v-0.5h1v0.5zM451 159.1v0.5h1v-0.5zM452 148.9v-1h1v1zM452 159.1v1h1v-1zM453 148.9v-0.5h1v0.5zM454 148.9v-1h1v1zM455 148.9v-1.5h1v1.5zM455 159.1v0.5h1v-0.5zM456 148.9v-1h1v1zM456 159.1v1h1v-1zM457 148.9v-1h1v1zM457 159.1v1h1v-1zM458 148.9v-1h1v1zM458 159.1v0.5h1v-0.5zM459 148.9v-1.5h1v1.5zM460 148.9v-1h1v1zM460 159.1v1h1v-1zM461 148.9v-1h1v1zM461 159.1v1.5h1v-1.5zM462 148.9v-1h1v1zM462 159.1v1h1v-1zM463 148.9v-1h1v1zM463 159.1v1.5h1v-1.5zM464 159.1v1h1v-1zM465 159.1v1h1v-1zM466 159.1v0.5h1v-0.5zM467 148.9v-0.5h1v0.5zM467 159.1v0.5h1v-0.5zM468 148.9v-0.5h1v0.5zM468 159.1v1h1v-1zM469 148.9v-1h1v1zM470 148.9v-0.5h1v0.5zM471 148.9v-1.5h1v1.5zM471 159.1v0.5h1v-0.5zM472 148.9v-1h1v1zM472 159.1v1h1v-1zM473 148.9v-1h1v1zM474 148.9v-0.5h1v0.5zM474 159.1v1.5h1v-1.5zM475 148.9v-0.5h1v0.5zM475 159.1v0.5h1v-0.5zM476 148.9v-0.5h1v0.5zM477 148.9v-1h1v1zM477 159.1v1.5h1v-1.5zM478 148.9v-0.5h1v0.5zM478 159.1v1h1v-1zM479 148.9v-1h1v1zM479 159.1v1h1v-1zM480 148.9v-1.5h1v1.5zM481 148.9v-1h1v1zM481 159.1v0.5h1v-0.5zM482 148.9v-1.5h1v1.5zM483 148.9v-0.5h1v0.5zM483 159.1v1.5h1v-1.5zM484 148.9v-0.5h1v0.5zM485 159.1v0.5h1v-0.5zM486 148.9v-1h1v1zM487 159.1v1h1v-1zM488 148.9v-1.5h1v1.5zM489 148.9v-1h1v1zM489 159.1v0.5h1v-0.5zM490 159.1v1.5h1v-1.5zM491 148.9v-1h1v1zM491 159.1v0.5h1v-0.5zM492 148.9v-1h1v1zM493 148.9v-1h1v1zM493 159.1v0.5h1v-0.5zM494 148.9v-1h1v1zM495 148.9v-1h1v1zM495 159.1v1.5h1v-1.5zM496 148.9v-1.5h1v1.5zM496 159.1v0.5h1v-0.5zM497 148.9v-1h1v1zM497 159.1v0.5h1v-0.5zM498 148.9v-0.5h1v0.5zM498 159.1v1h1v-1zM499 148.9v-0.5h1v0.5zM500 148.9v-1h1v1zM501 148.9v-0.5h1v0.5zM501 159.1v1h1v-1zM502 148.9v-1.5h1v1.5zM503 148.9v-1h1v1zM503 159.1v1h1v-1zM504 148.9v-0.5h1v0.5zM504 159.1v1h1v-1zM505 159.1v0.5h1v-0.5zM506 148.9v-0.5h1v0.5zM506 159.1v0.5h1v-0.5zM507 148.9v-0.5h1v0.5zM509 148.9v-0.5h1v0.5zM509 159.1v0.5h1v-0.5zM510 148.9v-1h1v1zM510 159.1v1h1v-1zM511 148.9v-1h1v1zM511 159.1v0.5h1v-0.5zM512 148.9v-1h1v1zM512 159.1v0.5h1v-0.5zM514 148.9v-0.5h1v0.5zM514 159.1v1h1v-1zM515 148.9v-0.5h1v0.5zM515 159.1v1h1v-1zM516 159.1v1.5h1v-1.5zM517 148.9v-0.5h1v0.5zM517 159.1v0.5h1v-0.5zM519 159.1v1.5h1v-1.5zM520 159.1v1.5h1v-1.5zM521 148.9v-1.5h1v1.5zM521 159.1v1h1v-1zM522 159.1v0.5h1v-0.5zM523 148.9v-1h1v1zM523 159.1v1h1v-1zM524 148.9v-1h1v1zM525 148.9v-1.5h1v1.5zM526 148.9v-0.5h1v0.5zM526 159.1v1h1v-1zM527 148.9v-1h1v1zM527 159.1v1.5h1v-1.5zM528 148.9v-1.5h1v1.5zM528 159.1v1.5h1v-1.5zM529 148.9v-1.5h1v1.5zM529 159.1v0.5h1v-0.5zM530 148.9v-0.5h1v0.5zM530 159.1v0.5h1v-0.5zM531 148.9v-1.5h1v1.5zM531 159.1v1h1v-1zM532 148.9v-1h1v1zM533 148.9v-1.5h1v1.5zM533 159.1v1.5h1v-1.5zM534 148.9v-0.5h1v0.5zM534 159.1v0.5h1v-0.5zM535 148.9v-1.5h1v1.5zM535 159.1v1.5h1v-1.5zM536 159.1v0.5h1v-0.5zM537 148.9v-1h1v1zM537 159.1v0.5h1v-0.5zM538 148.9v-1h1v1zM538 159.1v0.5h1v-0.5zM539 148.9v-0.5h1v0.5zM539 159.1v1h1v-1zM540 159.1v0.5h1v-0.5zM541 159.1v1.5h1v-1.5zM542 148.9v-1h1v1zM542 159.1v1.5h1v-1.5zM543 148.9v-0.5h1v0.5zM543 159.1v0.5h1v-0.5zM544 159.1v1h1v-1zM545 148.9v-0.5h1v0.5zM545 159.1v0.5h1v-0.5zM546 148.9v-0.5h1v0.5zM546 159.1v0.5h1v-0.5zM547 148.9v-0.5h1v0.5zM547 159.1v1h1v-1zM548 148.9v-1h1v1zM549 148.9v-1h1v1zM549 159.1v0.5h1v-0.5zM550 159.1v0.5h1v-0.5zM551 148.9v-1.5h1v1.5zM551 159.1v0.5h1v-0.5zM553 148.9v-1.5h1v1.5zM553 159.1v1h1v-1zM554 148.9v-0.5h1v0.5zM554 159.1v1.5h1v-1.5zM555 159.1v1h1v-1zM556 148.9v-1.5h1v1.5zM556 159.1v0.5h1v-0.5zM557 148.9v-1h1v1zM557 159.1v1h1v-1zM558 159.1v1h1v-1zM560 159.1v1h1v-1zM561 148.9v-0.5h1v0.5zM561 159.1v0.5h1v-0.5zM562 148.9v-1h1v1zM563 148.9v-1h1v1zM564 148.9v-1.5h1v1.5zM565 159.1v1.5h1v-1.5zM566 148.9v-0.5h1v0.5zM566 159.1v0.5h1v-0.5zM567 148.9v-1.5h1v1.5zM568 159.1v0.5h1v-0.5zM569 148.9v-1.5h1v1.5zM569 159.1v1h1v-1zM570 159.1v1h1v-1zM571 148.9v-1h1v1zM571 159.1v1h1v-1zM572 148.9v-1.5h1v1.5zM573 148.9v-1h1v1zM573 159.1v1h1v-1zM574 148.9v-1.5h1v1.5zM574 159.1v1h1v-1zM575 148.9v-1.5h1v1.5zM575 159.1v0.5h1v-0.5zM576 159.1v0.5h1v-0.5zM577 148.9v-1h1v1zM578 148.9v-1h1v1zM579 148.9v-1h1v1zM579 159.1v1.5h1v-1.5zM580 148.9v-0.5h1v0.5zM580 159.1v1h1v-1zM581 159.1v1h1v-1zM582 159.1v0.5h1v-0.5zM583 148.9v-0.5h1v0.5zM584 148.9v-1.5h1v1.5zM585 148.9v-0.5h1v0.5zM585 159.1v0.5h1v-0.5zM586 148.9v-1h1v1zM587 148.9v-0.5h1v0.5zM587 159.1v0.5h1v-0.5zM588 159.1v1h1v-1zM589 148.9v-0.5h1v0.5zM590 148.9v-0.5h1v0.5zM591 148.9v-1h1v1zM591 159.1v1h1v-1zM592 148.9v-1.5h1v1.5zM592 159.1v1h1v-1zM594 148.9v-1.5h1v1.5zM594 159.1v0.5h1v-0.5zM595 148.9v-0.5h1v0.5zM595 159.1v1h1v-1zM596 148.9v-1h1v1zM596 159.1v0.5h1v-0.5zM597 148.9v-1h1v1zM597 159.1v0.5h1v-0.5zM598 148.9v-1.5h1v1.5zM598 159.1v0.5h1v-0.5zM599 148.9v-0.5h1v0.5zM599 159.1v0.5h1v-0.5zM600 148.9v-0.5h1v0.5zM600 159.1v1h1v-1zM602 148.9v-1h1v1zM602 159.1v0.5h1v-0.5zM603 148.9v-1h1v1zM603 159.1v1h1v-1zM605 148.9v-1h1v1zM606 148.9v-1h1v1zM606 159.1v1h1v-1zM607 148.9v-0.5h1v0.5zM607 159.1v1.5h1v-1.5zM608 159.1v1h1v-1zM609 148.9v-0.5h1v0.5zM609 159.1v0.5h1v-0.5zM610 148.9v-1.5h1v1.5zM612 148.9v-1h1v1zM612 159.1v0.5h1v-0.5zM613 148.9v-1h1v1zM614 148.9v-0.5h1v0.5zM615 148.9v-1.5h1v1.5zM615 159.1v1h1v-1zM616 148.9v-0.5h1v0.5zM616 159.1v0.5h1v-0.5zM617 148.9v-0.5h1v0.5zM617 159.1v1.5h1v-1.5zM618 148.9v-1h1v1zM618 159.1v1h1v-1zM619 148.9v-1.5h1v1.5zM620 148.9v-0.5h1v0.5zM620 159.1v0.5h1v-0.5zM621 148.9v-0.5h1v0.5zM621 159.1v0.5h1v-0.5zM622 148.9v-0.5h1v0.5zM622 159.1v1h1v-1zM623 159.1v1.5h1v-1.5zM624 148.9v-0.5h1v0.5zM624 159.1v0.5h1v-0.5zM625 148.9v-0.5h1v0.5zM625 159.1v1.5h1v-1.5zM626 148.9v-0.5h1v0.5zM626 159.1v0.5h1v-0.5zM627 148.9v-0.5h1v0.5zM627 159.1v1h1v-1zM628 148.9v-0.5h1v0.5zM628 159.1v1.5h1v-1.5zM629 148.9v-1h1v1zM629 159.1v0.5h1v-0.5zM630 159.1v1h1v-1zM631 148.9v-0.5h1v0.5zM631 159.1v1.5h1v-1.5zM632 159.1v0.5h1v-0.5zM633 159.1v0.5h1v-0.5zM634 148.9v-1h1v1zM634 159.1v0.5h1v-0.5zM635 159.1v1h1v-1zM636 148.9v-1h1v1zM637 148.9v-1.5h1v1.5zM638 148.9v-0.5h1v0.5zM638 159.1v1h1v-1zM639 148.9v-1h1v1zM639 159.1v0.5h1v-0.5zM640 148.9v-1h1v1zM640 159.1v1h1v-1zM641 159.1v0.5h1v-0.5zM642 148.9v-0.5h1v0.5zM644 159.1v1.5h1v-1.5zM645 148.9v-0.5h1v0.5zM645 159.1v1h1v-1zM646 148.9v-1.5h1v1.5zM646 159.1v1h1v-1zM647 159.1v1.5h1v-1.5zM648 148.9v-1h1v1zM648 159.1v1h1v-1zM649 148.9v-1h1v1zM649 159.1v0.5h1v-0.5zM650 148.9v-1h1v1zM651 148.9v-1h1v1zM651 159.1v1h1v-1zM652 148.9v-1h1v1zM652 159.1v1h1v-1zM653 148.9v-1h1v1zM653 159.1v1h1v-1zM655 159.1v1h1v-1zM656 148.9v-1h1v1zM656 159.1v0.5h1v-0.5zM657 148.9v-1h1v1zM657 159.1v1.5h1v-1.5zM659 148.9v-1h1v1zM660 148.9v-1.5h1v1.5zM661 148.9v-0.5h1v0.5zM661 159.1v1.5h1v-1.5zM662 159.1v1h1v-1zM663 159.1v0.5h1v-0.5zM664 148.9v-1.5h1v1.5zM664 159.1v1.5h1v-1.5zM665 159.1v1.5h1v-1.5zM666 148.9v-0.5h1v0.5zM666 159.1v1h1v-1zM667 148.9v-1h1v1zM667 159.1v0.5h1v-0.5zM668 148.9v-1.5h1v1.5zM668 159.1v0.5h1v-0.5zM669 159.1v0.5h1v-0.5zM670 159.1v0.5h1v-0.5zM671 159.1v0.5h1v-0.5zM672 148.9v-1h1v1zM672 159.1v1h1v-1zM673 148.9v-1h1v1zM674 148.9v-0.5h1v0.5zM674 159.1v1h1v-1zM675 148.9v-1h1v1zM676 148.9v-1.5h1v1.5zM677 148.9v-1.5h1v1.5zM677 159.1v1.5h1v-1.5zM678 148.9v-0.5h1v0.5zM678 159.1v1h1v-1zM679 148.9v-1h1v1zM679 159.1v0.5h1v-0.5zM680 148.9v-0.5h1v0.5zM681 159.1v1h1v-1zM682 148.9v-0.5h1v0.5zM682 159.1v1h1v-1zM683 148.9v-1h1v1zM683 159.1v1h1v-1zM684 159.1v0.5h1v-0.5zM685 148.9v-1.5h1v1.5zM685 159.1v0.5h1v-0.5zM686 148.9v-1h1v1zM687 159.1v1h1v-1zM688 148.9v-0.5h1v0.5zM689 159.1v1h1v-1zM690 159.1v0.5h1v-0.5zM692 148.9v-1h1v1zM692 159.1v1h1v-1zM693 159.1v1.5h1v-1.5zM695 148.9v-1.5h1v1.5zM696 159.1v0.5h1v-0.5zM697 159.1v0.5h1v-0.5zM698 148.9v-1h1v1zM698 159.1v1h1v-1zM699 159.1v0.5h1v-0.5zM700 148.9v-1h1v1zM700 159.1v1h1v-1zM702 148.9v-0.5h1v0.5zM702 159.1v1.5h1v-1.5zM703 148.9v-1h1v1zM703 159.1v1h1v-1zM704 148.9v-1h1v1zM704 159.1v1.5h1v-1.5zM705 159.1v1h1v-1zM706 148.9v-1.5h1v1.5zM707 148.9v-0.5h1v0.5zM707 159.1v1h1v-1zM708 148.9v-1h1v1zM708 159.1v1h1v-1zM709 148.9v-0.5h1v0.5zM709 159.1v0.5h1v-0.5zM710 148.9v-1h1v1zM710 159.1v0.5h1v-0.5zM711 159.1v1h1v-1zM714 148.9v-1h1v1zM714 159.1v1h1v-1zM715 148.9v-1.5h1v1.5zM715 159.1v1h1v-1zM716 159.1v0.5h1v-0.5zM717 148.9v-0.5h1v0.5zM717 159.1v0.5h1v-0.5zM718 148.9v-1h1v1zM718 159.1v1h1v-1zM719 159.1v1.5h1v-1.5zM720 148.9v-1.5h1v1.5zM720 159.1v0.5h1v-0.5zM721 148.9v-1h1v1zM722 148.9v-0.5h1v0.5zM722 159.1v0.5h1v-0.5zM723 148.9v-1h1v1zM723 159.1v1h1v-1zM724 148.9v-0.5h1v0.5zM724 159.1v0.5h1v-0.5zM725 148.9v-1h1v1zM726 159.1v1.5h1v-1.5zM727 159.1v0.5h1v-0.5zM728 148.9v-1h1v1zM729 148.9v-1h1v1zM729 159.1v1.5h1v-1.5zM730 148.9v-0.5h1v0.5zM730 159.1v0.5h1v-0.5zM731 148.9v-0.5h1v0.5zM731 159.1v1.5h1v-1.5zM732 148.9v-1.5h1v1.5zM732 159.1v0.5h1v-0.5zM733 148.9v-0.5h1v0.5zM733 159.1v1.5h1v-1.5zM734 148.9v-1.5h1v1.5zM734 159.1v1h1v-1zM735 148.9v-0.5h1v0.5zM735 159.1v0.5h1v-0.5zM736 148.9v-0.5h1v0.5zM737 148.9v-1h1v1zM737 159.1v1h1v-1zM738 148.9v-1h1v1zM738 159.1v1.5h1v-1.5zM739 148.9v-1.5h1v1.5zM739 159.1v1h1v-1zM740 148.9v-0.5h1v0.5zM740 159.1v1.5h1v-1.5zM741 148.9v-1h1v1zM741 159.1v1h1v-1zM742 159.1v1.5h1v-1.5zM743 159.1v1h1v-1zM744 148.9v-1.5h1v1.5zM744 159.1v0.5h1v-0.5zM745 148.9v-1h1v1zM745 159.1v0.5h1v-0.5zM746 159.1v0.5h1v-0.5zM747 148.9v-0.5h1v0.5zM747 159.1v1h1v-1zM748 148.9v-0.5h1v0.5zM748 159.1v1h1v-1zM749 148.9v-1.5h1v1.5zM750 148.9v-1.5h1v1.5zM750 159.1v0.5h1v-0.5zM751 148.9v-0.5h1v0.5zM751 159.1v1h1v-1zM752 159.1v0.5h1v-0.5zM753 148.9v-0.5h1v0.5zM753 159.1v0.5h1v-0.5zM754 148.9v-0.5h1v0.5zM755 148.9v-1h1v1zM755 159.1v1.5h1v-1.5zM756 148.9v-1.5h1v1.5zM756 159.1v1.5h1v-1.5z" fill="#0e8a8e" opacity="0.6"/><defs><linearGradient id="tm" x1="0" y1="0" x2="0" y2="1"><stop offset="0" stop-color="#7a0a44"/><stop offset="0.14" stop-color="#d6167a"/><stop offset="0.5" stop-color="#f450aa"/><stop offset="0.86" stop-color="#d6167a"/><stop offset="1" stop-color="#7a0a44"/></linearGradient></defs><rect x="26" y="192.9" width="731" height="9.799999999999983" fill="url(#tm)"/><path d="M26 202.7v0.5h1v-0.5zM27 192.9v-1.5h1v1.5zM28 192.9v-1.5h1v1.5zM28 202.7v1.5h1v-1.5zM29 192.9v-1h1v1zM30 192.9v-0.5h1v0.5zM30 202.7v1.5h1v-1.5zM31 192.9v-1.5h1v1.5zM31 202.7v1.5h1v-1.5zM32 192.9v-1h1v1zM32 202.7v1h1v-1zM33 192.9v-1.5h1v1.5zM33 202.7v0.5h1v-0.5zM34 192.9v-0.5h1v0.5zM34 202.7v1h1v-1zM35 202.7v1h1v-1zM36 192.9v-1h1v1zM36 202.7v0.5h1v-0.5zM37 192.9v-1.5h1v1.5zM37 202.7v0.5h1v-0.5zM38 202.7v1.5h1v-1.5zM39 192.9v-1.5h1v1.5zM39 202.7v1h1v-1zM40 202.7v0.5h1v-0.5zM41 192.9v-1h1v1zM42 192.9v-1h1v1zM42 202.7v0.5h1v-0.5zM43 192.9v-0.5h1v0.5zM43 202.7v1h1v-1zM44 202.7v0.5h1v-0.5zM45 192.9v-1h1v1zM45 202.7v1.5h1v-1.5zM46 202.7v1.5h1v-1.5zM47 192.9v-0.5h1v0.5zM47 202.7v0.5h1v-0.5zM48 192.9v-1h1v1zM49 192.9v-1h1v1zM49 202.7v1.5h1v-1.5zM50 192.9v-0.5h1v0.5zM50 202.7v1.5h1v-1.5zM52 192.9v-0.5h1v0.5zM52 202.7v1h1v-1zM53 192.9v-1h1v1zM53 202.7v0.5h1v-0.5zM54 192.9v-1.5h1v1.5zM54 202.7v1h1v-1zM55 192.9v-0.5h1v0.5zM55 202.7v0.5h1v-0.5zM56 192.9v-1h1v1zM56 202.7v1h1v-1zM60 192.9v-1.5h1v1.5zM60 202.7v1h1v-1zM61 192.9v-0.5h1v0.5zM61 202.7v0.5h1v-0.5zM62 192.9v-1h1v1zM62 202.7v1h1v-1zM63 192.9v-0.5h1v0.5zM63 202.7v0.5h1v-0.5zM64 192.9v-1.5h1v1.5zM64 202.7v1h1v-1zM65 192.9v-1.5h1v1.5zM67 192.9v-0.5h1v0.5zM67 202.7v0.5h1v-0.5zM68 192.9v-1.5h1v1.5zM69 192.9v-0.5h1v0.5zM69 202.7v1h1v-1zM70 192.9v-0.5h1v0.5zM70 202.7v1.5h1v-1.5zM72 192.9v-0.5h1v0.5zM72 202.7v1h1v-1zM73 202.7v0.5h1v-0.5zM74 192.9v-0.5h1v0.5zM74 202.7v1h1v-1zM75 192.9v-1h1v1zM77 202.7v1.5h1v-1.5zM78 192.9v-1.5h1v1.5zM78 202.7v1h1v-1zM79 192.9v-0.5h1v0.5zM79 202.7v1h1v-1zM80 192.9v-1h1v1zM81 192.9v-0.5h1v0.5zM81 202.7v1.5h1v-1.5zM82 192.9v-0.5h1v0.5zM82 202.7v0.5h1v-0.5zM83 202.7v0.5h1v-0.5zM84 192.9v-1.5h1v1.5zM84 202.7v1h1v-1zM85 192.9v-1.5h1v1.5zM85 202.7v1h1v-1zM86 202.7v0.5h1v-0.5zM87 192.9v-1.5h1v1.5zM88 192.9v-0.5h1v0.5zM89 202.7v0.5h1v-0.5zM92 192.9v-1h1v1zM92 202.7v0.5h1v-0.5zM93 192.9v-1.5h1v1.5zM93 202.7v1h1v-1zM94 192.9v-0.5h1v0.5zM94 202.7v0.5h1v-0.5zM95 192.9v-1.5h1v1.5zM96 192.9v-1.5h1v1.5zM96 202.7v1h1v-1zM97 192.9v-1h1v1zM97 202.7v0.5h1v-0.5zM98 202.7v1h1v-1zM99 202.7v0.5h1v-0.5zM100 192.9v-0.5h1v0.5zM100 202.7v1h1v-1zM101 202.7v1h1v-1zM102 202.7v1h1v-1zM103 192.9v-1h1v1zM103 202.7v0.5h1v-0.5zM104 202.7v0.5h1v-0.5zM105 192.9v-1.5h1v1.5zM106 192.9v-0.5h1v0.5zM107 192.9v-1h1v1zM109 192.9v-0.5h1v0.5zM109 202.7v0.5h1v-0.5zM110 202.7v1h1v-1zM111 202.7v1.5h1v-1.5zM112 202.7v0.5h1v-0.5zM113 192.9v-1.5h1v1.5zM113 202.7v1h1v-1zM114 192.9v-1h1v1zM114 202.7v1h1v-1zM115 192.9v-1h1v1zM115 202.7v1.5h1v-1.5zM116 192.9v-0.5h1v0.5zM118 192.9v-0.5h1v0.5zM118 202.7v1.5h1v-1.5zM120 192.9v-1h1v1zM120 202.7v1h1v-1zM121 192.9v-0.5h1v0.5zM121 202.7v1h1v-1zM122 192.9v-1h1v1zM122 202.7v0.5h1v-0.5zM123 192.9v-1.5h1v1.5zM123 202.7v1h1v-1zM124 202.7v0.5h1v-0.5zM125 192.9v-0.5h1v0.5zM125 202.7v0.5h1v-0.5zM126 192.9v-0.5h1v0.5zM126 202.7v0.5h1v-0.5zM127 202.7v0.5h1v-0.5zM128 192.9v-0.5h1v0.5zM128 202.7v0.5h1v-0.5zM129 202.7v0.5h1v-0.5zM130 202.7v1.5h1v-1.5zM131 202.7v1h1v-1zM132 202.7v0.5h1v-0.5zM133 192.9v-1h1v1zM134 192.9v-1.5h1v1.5zM135 202.7v1.5h1v-1.5zM137 192.9v-1h1v1zM137 202.7v1.5h1v-1.5zM138 192.9v-0.5h1v0.5zM138 202.7v1h1v-1zM139 202.7v1.5h1v-1.5zM140 192.9v-0.5h1v0.5zM141 192.9v-0.5h1v0.5zM141 202.7v1.5h1v-1.5zM142 202.7v1h1v-1zM143 202.7v0.5h1v-0.5zM144 192.9v-0.5h1v0.5zM144 202.7v0.5h1v-0.5zM145 192.9v-1.5h1v1.5zM146 192.9v-0.5h1v0.5zM147 192.9v-1h1v1zM147 202.7v0.5h1v-0.5zM148 202.7v0.5h1v-0.5zM149 202.7v1h1v-1zM151 192.9v-1h1v1zM151 202.7v0.5h1v-0.5zM152 192.9v-1h1v1zM153 192.9v-0.5h1v0.5zM153 202.7v1.5h1v-1.5zM154 202.7v0.5h1v-0.5zM155 192.9v-0.5h1v0.5zM155 202.7v0.5h1v-0.5zM157 202.7v0.5h1v-0.5zM158 192.9v-1h1v1zM158 202.7v1.5h1v-1.5zM159 192.9v-0.5h1v0.5zM159 202.7v0.5h1v-0.5zM160 192.9v-1.5h1v1.5zM161 192.9v-0.5h1v0.5zM161 202.7v0.5h1v-0.5zM162 202.7v0.5h1v-0.5zM163 192.9v-0.5h1v0.5zM163 202.7v0.5h1v-0.5zM165 192.9v-1h1v1zM166 192.9v-1h1v1zM166 202.7v1.5h1v-1.5zM167 192.9v-1h1v1zM168 192.9v-1h1v1zM168 202.7v0.5h1v-0.5zM169 192.9v-1.5h1v1.5zM169 202.7v0.5h1v-0.5zM170 202.7v0.5h1v-0.5zM171 192.9v-1.5h1v1.5zM172 192.9v-0.5h1v0.5zM172 202.7v0.5h1v-0.5zM173 192.9v-0.5h1v0.5zM175 192.9v-0.5h1v0.5zM175 202.7v0.5h1v-0.5zM176 192.9v-0.5h1v0.5zM177 202.7v1.5h1v-1.5zM178 192.9v-1h1v1zM178 202.7v0.5h1v-0.5zM179 202.7v1h1v-1zM180 202.7v0.5h1v-0.5zM181 192.9v-1.5h1v1.5zM181 202.7v1h1v-1zM182 192.9v-0.5h1v0.5zM182 202.7v1h1v-1zM183 202.7v0.5h1v-0.5zM184 202.7v1.5h1v-1.5zM185 192.9v-1.5h1v1.5zM185 202.7v1h1v-1zM186 192.9v-0.5h1v0.5zM187 192.9v-0.5h1v0.5zM187 202.7v0.5h1v-0.5zM188 202.7v0.5h1v-0.5zM189 202.7v0.5h1v-0.5zM190 192.9v-1h1v1zM191 202.7v1.5h1v-1.5zM192 202.7v1h1v-1zM193 192.9v-1.5h1v1.5zM194 192.9v-1h1v1zM195 202.7v1h1v-1zM196 202.7v1.5h1v-1.5zM197 202.7v1h1v-1zM198 192.9v-1h1v1zM198 202.7v0.5h1v-0.5zM199 192.9v-1.5h1v1.5zM199 202.7v0.5h1v-0.5zM201 202.7v1h1v-1zM202 192.9v-1h1v1zM202 202.7v1h1v-1zM203 192.9v-1h1v1zM203 202.7v1.5h1v-1.5zM204 202.7v1h1v-1zM205 192.9v-0.5h1v0.5zM207 192.9v-1h1v1zM207 202.7v1h1v-1zM208 192.9v-1h1v1zM208 202.7v0.5h1v-0.5zM209 192.9v-1.5h1v1.5zM209 202.7v1h1v-1zM210 202.7v1h1v-1zM211 192.9v-1.5h1v1.5zM211 202.7v0.5h1v-0.5zM212 192.9v-0.5h1v0.5zM212 202.7v0.5h1v-0.5zM213 192.9v-1.5h1v1.5zM213 202.7v1h1v-1zM214 192.9v-1.5h1v1.5zM214 202.7v0.5h1v-0.5zM216 192.9v-0.5h1v0.5zM216 202.7v1.5h1v-1.5zM217 192.9v-0.5h1v0.5zM218 192.9v-1.5h1v1.5zM218 202.7v1h1v-1zM219 192.9v-0.5h1v0.5zM220 202.7v1h1v-1zM221 192.9v-1.5h1v1.5zM221 202.7v0.5h1v-0.5zM223 192.9v-1h1v1zM223 202.7v0.5h1v-0.5zM224 192.9v-1h1v1zM224 202.7v1h1v-1zM225 192.9v-1.5h1v1.5zM226 192.9v-0.5h1v0.5zM226 202.7v1h1v-1zM227 192.9v-0.5h1v0.5zM227 202.7v1h1v-1zM229 192.9v-0.5h1v0.5zM229 202.7v1h1v-1zM230 202.7v1.5h1v-1.5zM231 192.9v-1.5h1v1.5zM231 202.7v1.5h1v-1.5zM232 192.9v-0.5h1v0.5zM232 202.7v1.5h1v-1.5zM233 192.9v-1h1v1zM233 202.7v1.5h1v-1.5zM234 192.9v-0.5h1v0.5zM234 202.7v1h1v-1zM235 192.9v-1.5h1v1.5zM236 192.9v-0.5h1v0.5zM236 202.7v1.5h1v-1.5zM237 202.7v1h1v-1zM238 192.9v-0.5h1v0.5zM238 202.7v0.5h1v-0.5zM239 192.9v-1h1v1zM240 192.9v-1h1v1zM240 202.7v1.5h1v-1.5zM241 192.9v-1h1v1zM244 192.9v-1h1v1zM246 192.9v-0.5h1v0.5zM246 202.7v0.5h1v-0.5zM247 192.9v-1h1v1zM247 202.7v1.5h1v-1.5zM249 202.7v1h1v-1zM250 192.9v-1h1v1zM251 192.9v-0.5h1v0.5zM252 192.9v-1.5h1v1.5zM252 202.7v1h1v-1zM253 192.9v-1h1v1zM253 202.7v1h1v-1zM254 192.9v-0.5h1v0.5zM254 202.7v1h1v-1zM255 202.7v1h1v-1zM256 192.9v-0.5h1v0.5zM257 192.9v-0.5h1v0.5zM257 202.7v1.5h1v-1.5zM258 202.7v1h1v-1zM260 192.9v-0.5h1v0.5zM261 192.9v-0.5h1v0.5zM261 202.7v0.5h1v-0.5zM262 192.9v-1h1v1zM262 202.7v1h1v-1zM263 192.9v-1.5h1v1.5zM263 202.7v0.5h1v-0.5zM265 202.7v0.5h1v-0.5zM266 202.7v1h1v-1zM267 192.9v-1h1v1zM268 192.9v-1.5h1v1.5zM269 202.7v1h1v-1zM270 192.9v-1h1v1zM270 202.7v0.5h1v-0.5zM271 192.9v-1h1v1zM271 202.7v0.5h1v-0.5zM272 202.7v1.5h1v-1.5zM273 202.7v1h1v-1zM274 192.9v-0.5h1v0.5zM274 202.7v1h1v-1zM275 192.9v-0.5h1v0.5zM275 202.7v1h1v-1zM276 192.9v-1.5h1v1.5zM276 202.7v1h1v-1zM277 192.9v-1h1v1zM278 192.9v-0.5h1v0.5zM279 192.9v-1.5h1v1.5zM279 202.7v0.5h1v-0.5zM280 192.9v-0.5h1v0.5zM280 202.7v0.5h1v-0.5zM281 202.7v1.5h1v-1.5zM282 192.9v-0.5h1v0.5zM282 202.7v1h1v-1zM283 192.9v-0.5h1v0.5zM283 202.7v1.5h1v-1.5zM284 192.9v-1h1v1zM284 202.7v1.5h1v-1.5zM285 192.9v-0.5h1v0.5zM285 202.7v1.5h1v-1.5zM286 192.9v-0.5h1v0.5zM286 202.7v1.5h1v-1.5zM287 192.9v-1h1v1zM288 192.9v-0.5h1v0.5zM288 202.7v1h1v-1zM289 202.7v1h1v-1zM290 192.9v-0.5h1v0.5zM291 192.9v-1.5h1v1.5zM291 202.7v0.5h1v-0.5zM292 192.9v-1h1v1zM292 202.7v1h1v-1zM293 202.7v0.5h1v-0.5zM294 202.7v1h1v-1zM296 192.9v-0.5h1v0.5zM296 202.7v0.5h1v-0.5zM297 202.7v1h1v-1zM298 192.9v-1h1v1zM300 192.9v-0.5h1v0.5zM300 202.7v0.5h1v-0.5zM301 192.9v-1.5h1v1.5zM301 202.7v0.5h1v-0.5zM302 192.9v-1h1v1zM303 192.9v-1.5h1v1.5zM304 202.7v1.5h1v-1.5zM305 192.9v-1h1v1zM305 202.7v1h1v-1zM306 192.9v-0.5h1v0.5zM306 202.7v1h1v-1zM307 192.9v-1h1v1zM307 202.7v0.5h1v-0.5zM308 192.9v-1h1v1zM308 202.7v1h1v-1zM309 192.9v-1.5h1v1.5zM310 192.9v-1h1v1zM311 192.9v-0.5h1v0.5zM312 192.9v-1h1v1zM313 192.9v-0.5h1v0.5zM314 202.7v0.5h1v-0.5zM315 202.7v0.5h1v-0.5zM316 192.9v-0.5h1v0.5zM316 202.7v1h1v-1zM318 202.7v1h1v-1zM319 192.9v-1h1v1zM319 202.7v0.5h1v-0.5zM320 202.7v0.5h1v-0.5zM321 192.9v-1h1v1zM321 202.7v1h1v-1zM322 202.7v0.5h1v-0.5zM323 202.7v1h1v-1zM324 202.7v0.5h1v-0.5zM325 192.9v-0.5h1v0.5zM325 202.7v1h1v-1zM326 192.9v-0.5h1v0.5zM326 202.7v0.5h1v-0.5zM327 202.7v1h1v-1zM328 202.7v1h1v-1zM329 192.9v-1h1v1zM329 202.7v0.5h1v-0.5zM330 192.9v-1.5h1v1.5zM330 202.7v0.5h1v-0.5zM331 192.9v-1h1v1zM331 202.7v1h1v-1zM332 192.9v-1h1v1zM333 192.9v-1h1v1zM333 202.7v0.5h1v-0.5zM334 202.7v1h1v-1zM335 192.9v-1h1v1zM335 202.7v0.5h1v-0.5zM336 192.9v-0.5h1v0.5zM336 202.7v1h1v-1zM337 192.9v-0.5h1v0.5zM337 202.7v1h1v-1zM338 192.9v-0.5h1v0.5zM338 202.7v0.5h1v-0.5zM339 192.9v-1.5h1v1.5zM339 202.7v0.5h1v-0.5zM341 192.9v-0.5h1v0.5zM342 202.7v1h1v-1zM343 192.9v-1h1v1zM343 202.7v0.5h1v-0.5zM344 192.9v-1h1v1zM344 202.7v0.5h1v-0.5zM345 202.7v0.5h1v-0.5zM346 202.7v1.5h1v-1.5zM347 202.7v0.5h1v-0.5zM348 192.9v-1h1v1zM348 202.7v0.5h1v-0.5zM349 192.9v-0.5h1v0.5zM349 202.7v0.5h1v-0.5zM350 192.9v-0.5h1v0.5zM351 192.9v-0.5h1v0.5zM352 192.9v-1.5h1v1.5zM353 202.7v1h1v-1zM354 202.7v1h1v-1zM355 192.9v-1.5h1v1.5zM355 202.7v0.5h1v-0.5zM356 192.9v-0.5h1v0.5zM356 202.7v1h1v-1zM357 202.7v1h1v-1zM358 192.9v-0.5h1v0.5zM358 202.7v1.5h1v-1.5zM359 192.9v-0.5h1v0.5zM359 202.7v0.5h1v-0.5zM360 192.9v-1h1v1zM360 202.7v1.5h1v-1.5zM361 202.7v1h1v-1zM362 202.7v1h1v-1zM363 192.9v-1h1v1zM364 192.9v-0.5h1v0.5zM364 202.7v0.5h1v-0.5zM365 192.9v-1h1v1zM365 202.7v0.5h1v-0.5zM366 202.7v1h1v-1zM367 202.7v1h1v-1zM368 192.9v-1h1v1zM368 202.7v1.5h1v-1.5zM369 192.9v-0.5h1v0.5zM369 202.7v1.5h1v-1.5zM370 192.9v-1.5h1v1.5zM370 202.7v1h1v-1zM371 202.7v1h1v-1zM372 192.9v-1.5h1v1.5zM372 202.7v1h1v-1zM373 192.9v-1.5h1v1.5zM373 202.7v0.5h1v-0.5zM374 192.9v-0.5h1v0.5zM374 202.7v1.5h1v-1.5zM375 192.9v-1h1v1zM375 202.7v1h1v-1zM376 192.9v-1h1v1zM376 202.7v1h1v-1zM377 202.7v0.5h1v-0.5zM378 192.9v-1.5h1v1.5zM379 202.7v0.5h1v-0.5zM380 192.9v-1.5h1v1.5zM380 202.7v1h1v-1zM381 192.9v-1h1v1zM382 192.9v-0.5h1v0.5zM382 202.7v0.5h1v-0.5zM383 192.9v-1h1v1zM384 192.9v-0.5h1v0.5zM384 202.7v1.5h1v-1.5zM385 192.9v-1.5h1v1.5zM385 202.7v0.5h1v-0.5zM386 192.9v-1.5h1v1.5zM386 202.7v1h1v-1zM387 192.9v-1h1v1zM388 192.9v-0.5h1v0.5zM388 202.7v1.5h1v-1.5zM389 192.9v-0.5h1v0.5zM389 202.7v1h1v-1zM390 192.9v-0.5h1v0.5zM390 202.7v0.5h1v-0.5zM391 192.9v-1h1v1zM391 202.7v0.5h1v-0.5zM392 192.9v-0.5h1v0.5zM392 202.7v0.5h1v-0.5zM393 192.9v-0.5h1v0.5zM393 202.7v1h1v-1zM394 192.9v-1h1v1zM394 202.7v1h1v-1zM395 192.9v-0.5h1v0.5zM395 202.7v1h1v-1zM396 192.9v-0.5h1v0.5zM397 192.9v-1.5h1v1.5zM397 202.7v1h1v-1zM398 192.9v-1.5h1v1.5zM398 202.7v0.5h1v-0.5zM399 192.9v-0.5h1v0.5zM399 202.7v0.5h1v-0.5zM400 192.9v-0.5h1v0.5zM401 192.9v-1h1v1zM401 202.7v0.5h1v-0.5zM402 192.9v-1.5h1v1.5zM403 192.9v-0.5h1v0.5zM403 202.7v1h1v-1zM404 192.9v-0.5h1v0.5zM404 202.7v1h1v-1zM406 192.9v-1.5h1v1.5zM406 202.7v0.5h1v-0.5zM407 192.9v-0.5h1v0.5zM407 202.7v1.5h1v-1.5zM408 192.9v-1h1v1zM408 202.7v1.5h1v-1.5zM409 202.7v0.5h1v-0.5zM410 202.7v0.5h1v-0.5zM412 202.7v0.5h1v-0.5zM413 192.9v-1h1v1zM413 202.7v0.5h1v-0.5zM414 192.9v-0.5h1v0.5zM414 202.7v1h1v-1zM415 192.9v-1.5h1v1.5zM415 202.7v0.5h1v-0.5zM416 192.9v-1h1v1zM416 202.7v1h1v-1zM417 192.9v-0.5h1v0.5zM417 202.7v1h1v-1zM418 192.9v-1.5h1v1.5zM418 202.7v1h1v-1zM419 192.9v-1h1v1zM419 202.7v1h1v-1zM420 192.9v-0.5h1v0.5zM420 202.7v0.5h1v-0.5zM421 192.9v-0.5h1v0.5zM421 202.7v0.5h1v-0.5zM422 202.7v1h1v-1zM423 192.9v-1h1v1zM423 202.7v0.5h1v-0.5zM424 192.9v-0.5h1v0.5zM425 192.9v-1h1v1zM426 192.9v-1h1v1zM427 202.7v0.5h1v-0.5zM428 192.9v-0.5h1v0.5zM428 202.7v1h1v-1zM429 192.9v-0.5h1v0.5zM429 202.7v1h1v-1zM430 192.9v-1h1v1zM430 202.7v1h1v-1zM432 192.9v-0.5h1v0.5zM432 202.7v0.5h1v-0.5zM433 192.9v-0.5h1v0.5zM433 202.7v0.5h1v-0.5zM434 192.9v-1.5h1v1.5zM434 202.7v1h1v-1zM435 192.9v-1h1v1zM435 202.7v0.5h1v-0.5zM436 192.9v-1h1v1zM436 202.7v1h1v-1zM437 192.9v-1h1v1zM437 202.7v1.5h1v-1.5zM439 192.9v-0.5h1v0.5zM439 202.7v0.5h1v-0.5zM440 192.9v-0.5h1v0.5zM441 192.9v-1.5h1v1.5zM441 202.7v0.5h1v-0.5zM442 192.9v-1h1v1zM443 202.7v1h1v-1zM444 192.9v-0.5h1v0.5zM444 202.7v1h1v-1zM445 192.9v-0.5h1v0.5zM445 202.7v1.5h1v-1.5zM446 192.9v-1h1v1zM446 202.7v0.5h1v-0.5zM447 192.9v-1h1v1zM448 192.9v-1h1v1zM448 202.7v0.5h1v-0.5zM449 192.9v-1.5h1v1.5zM449 202.7v1h1v-1zM450 202.7v1h1v-1zM451 202.7v0.5h1v-0.5zM453 192.9v-1h1v1zM453 202.7v1h1v-1zM454 192.9v-1h1v1zM455 192.9v-0.5h1v0.5zM455 202.7v1h1v-1zM456 192.9v-1h1v1zM456 202.7v1h1v-1zM457 192.9v-1h1v1zM458 192.9v-1h1v1zM458 202.7v0.5h1v-0.5zM459 202.7v1.5h1v-1.5zM460 202.7v0.5h1v-0.5zM461 192.9v-1h1v1zM461 202.7v1h1v-1zM462 192.9v-1h1v1zM463 192.9v-0.5h1v0.5zM463 202.7v0.5h1v-0.5zM464 192.9v-1.5h1v1.5zM465 192.9v-1h1v1zM466 192.9v-1h1v1zM468 192.9v-0.5h1v0.5zM468 202.7v1.5h1v-1.5zM469 192.9v-1h1v1zM469 202.7v1h1v-1zM470 192.9v-0.5h1v0.5zM470 202.7v1.5h1v-1.5zM471 192.9v-1h1v1zM471 202.7v1h1v-1zM472 192.9v-1h1v1zM473 192.9v-1h1v1zM474 192.9v-0.5h1v0.5zM474 202.7v1h1v-1zM476 202.7v1h1v-1zM477 192.9v-1.5h1v1.5zM477 202.7v1h1v-1zM480 202.7v1h1v-1zM481 192.9v-0.5h1v0.5zM481 202.7v1.5h1v-1.5zM482 192.9v-0.5h1v0.5zM482 202.7v1h1v-1zM483 192.9v-0.5h1v0.5zM483 202.7v1.5h1v-1.5zM484 192.9v-1.5h1v1.5zM485 192.9v-1h1v1zM486 192.9v-1h1v1zM486 202.7v1.5h1v-1.5zM487 192.9v-1h1v1zM487 202.7v0.5h1v-0.5zM488 202.7v1h1v-1zM489 202.7v0.5h1v-0.5zM490 192.9v-0.5h1v0.5zM491 202.7v0.5h1v-0.5zM492 192.9v-1h1v1zM493 192.9v-1.5h1v1.5zM493 202.7v1h1v-1zM494 202.7v0.5h1v-0.5zM495 202.7v0.5h1v-0.5zM496 192.9v-1h1v1zM496 202.7v0.5h1v-0.5zM498 202.7v0.5h1v-0.5zM499 192.9v-1h1v1zM499 202.7v1.5h1v-1.5zM500 202.7v0.5h1v-0.5zM501 202.7v1h1v-1zM504 202.7v1h1v-1zM505 192.9v-1.5h1v1.5zM506 192.9v-0.5h1v0.5zM507 192.9v-1.5h1v1.5zM507 202.7v1.5h1v-1.5zM508 192.9v-0.5h1v0.5zM508 202.7v0.5h1v-0.5zM509 192.9v-0.5h1v0.5zM509 202.7v1h1v-1zM510 192.9v-0.5h1v0.5zM510 202.7v0.5h1v-0.5zM512 192.9v-1h1v1zM512 202.7v0.5h1v-0.5zM513 192.9v-1h1v1zM513 202.7v1h1v-1zM514 192.9v-1h1v1zM515 192.9v-0.5h1v0.5zM515 202.7v0.5h1v-0.5zM516 192.9v-0.5h1v0.5zM516 202.7v1h1v-1zM517 192.9v-0.5h1v0.5zM518 192.9v-1.5h1v1.5zM518 202.7v1.5h1v-1.5zM521 192.9v-0.5h1v0.5zM521 202.7v0.5h1v-0.5zM523 192.9v-0.5h1v0.5zM523 202.7v0.5h1v-0.5zM524 192.9v-1h1v1zM524 202.7v0.5h1v-0.5zM525 202.7v0.5h1v-0.5zM526 192.9v-1h1v1zM526 202.7v1.5h1v-1.5zM527 192.9v-0.5h1v0.5zM527 202.7v0.5h1v-0.5zM528 192.9v-0.5h1v0.5zM528 202.7v1h1v-1zM530 192.9v-0.5h1v0.5zM530 202.7v1.5h1v-1.5zM531 192.9v-0.5h1v0.5zM531 202.7v1h1v-1zM532 202.7v0.5h1v-0.5zM533 202.7v0.5h1v-0.5zM534 192.9v-0.5h1v0.5zM534 202.7v0.5h1v-0.5zM535 202.7v0.5h1v-0.5zM536 202.7v0.5h1v-0.5zM537 192.9v-1h1v1zM538 192.9v-0.5h1v0.5zM538 202.7v1.5h1v-1.5zM540 192.9v-1h1v1zM542 192.9v-0.5h1v0.5zM542 202.7v1h1v-1zM543 192.9v-1.5h1v1.5zM543 202.7v1.5h1v-1.5zM544 202.7v1h1v-1zM545 192.9v-0.5h1v0.5zM545 202.7v0.5h1v-0.5zM546 192.9v-1.5h1v1.5zM546 202.7v1.5h1v-1.5zM547 192.9v-1.5h1v1.5zM548 202.7v0.5h1v-0.5zM549 192.9v-0.5h1v0.5zM550 192.9v-1h1v1zM550 202.7v0.5h1v-0.5zM551 192.9v-0.5h1v0.5zM551 202.7v1h1v-1zM552 192.9v-1h1v1zM553 192.9v-0.5h1v0.5zM553 202.7v0.5h1v-0.5zM554 192.9v-1h1v1zM555 202.7v1.5h1v-1.5zM556 192.9v-0.5h1v0.5zM556 202.7v1h1v-1zM557 202.7v1h1v-1zM558 192.9v-0.5h1v0.5zM558 202.7v1h1v-1zM559 192.9v-0.5h1v0.5zM559 202.7v1h1v-1zM560 192.9v-0.5h1v0.5zM560 202.7v1h1v-1zM561 202.7v0.5h1v-0.5zM562 192.9v-1h1v1zM562 202.7v1h1v-1zM564 192.9v-1.5h1v1.5zM564 202.7v1.5h1v-1.5zM565 202.7v1h1v-1zM566 192.9v-1h1v1zM567 192.9v-1h1v1zM567 202.7v1.5h1v-1.5zM568 192.9v-0.5h1v0.5zM568 202.7v1h1v-1zM569 192.9v-1.5h1v1.5zM569 202.7v1.5h1v-1.5zM570 192.9v-0.5h1v0.5zM571 192.9v-1h1v1zM571 202.7v1h1v-1zM572 192.9v-1h1v1zM573 192.9v-0.5h1v0.5zM574 192.9v-0.5h1v0.5zM574 202.7v1h1v-1zM575 202.7v1h1v-1zM576 202.7v1.5h1v-1.5zM577 192.9v-1.5h1v1.5zM578 192.9v-0.5h1v0.5zM579 192.9v-1h1v1zM580 202.7v1h1v-1zM581 192.9v-0.5h1v0.5zM581 202.7v1.5h1v-1.5zM582 192.9v-1h1v1zM582 202.7v1.5h1v-1.5zM583 192.9v-0.5h1v0.5zM584 202.7v1h1v-1zM585 192.9v-0.5h1v0.5zM586 202.7v0.5h1v-0.5zM587 202.7v1.5h1v-1.5zM588 192.9v-1h1v1zM588 202.7v0.5h1v-0.5zM589 192.9v-0.5h1v0.5zM589 202.7v0.5h1v-0.5zM590 192.9v-0.5h1v0.5zM590 202.7v1.5h1v-1.5zM591 192.9v-0.5h1v0.5zM591 202.7v1.5h1v-1.5zM592 192.9v-1h1v1zM592 202.7v1h1v-1zM593 192.9v-1.5h1v1.5zM593 202.7v1.5h1v-1.5zM594 202.7v0.5h1v-0.5zM596 192.9v-0.5h1v0.5zM596 202.7v1h1v-1zM597 192.9v-1.5h1v1.5zM597 202.7v1h1v-1zM598 192.9v-1h1v1zM598 202.7v0.5h1v-0.5zM599 192.9v-0.5h1v0.5zM600 192.9v-1h1v1zM600 202.7v1h1v-1zM601 192.9v-1h1v1zM601 202.7v0.5h1v-0.5zM602 202.7v1.5h1v-1.5zM603 192.9v-0.5h1v0.5zM603 202.7v0.5h1v-0.5zM604 192.9v-1h1v1zM605 202.7v0.5h1v-0.5zM606 202.7v0.5h1v-0.5zM607 192.9v-1h1v1zM607 202.7v1h1v-1zM608 202.7v1h1v-1zM609 192.9v-1h1v1zM610 192.9v-0.5h1v0.5zM611 192.9v-1h1v1zM612 192.9v-0.5h1v0.5zM613 192.9v-1.5h1v1.5zM613 202.7v0.5h1v-0.5zM614 202.7v0.5h1v-0.5zM615 192.9v-1h1v1zM616 192.9v-1h1v1zM616 202.7v0.5h1v-0.5zM617 192.9v-1h1v1zM617 202.7v1h1v-1zM618 202.7v1h1v-1zM619 192.9v-1.5h1v1.5zM620 192.9v-1h1v1zM620 202.7v0.5h1v-0.5zM621 192.9v-1h1v1zM621 202.7v1h1v-1zM622 192.9v-0.5h1v0.5zM622 202.7v0.5h1v-0.5zM623 192.9v-1h1v1zM623 202.7v1h1v-1zM624 192.9v-1h1v1zM624 202.7v0.5h1v-0.5zM626 192.9v-1.5h1v1.5zM626 202.7v1.5h1v-1.5zM627 192.9v-1.5h1v1.5zM627 202.7v1h1v-1zM628 192.9v-0.5h1v0.5zM629 192.9v-1.5h1v1.5zM629 202.7v1h1v-1zM630 192.9v-1h1v1zM630 202.7v1h1v-1zM632 192.9v-1h1v1zM633 202.7v1.5h1v-1.5zM634 192.9v-0.5h1v0.5zM635 192.9v-1.5h1v1.5zM635 202.7v0.5h1v-0.5zM636 192.9v-1h1v1zM637 192.9v-0.5h1v0.5zM637 202.7v1h1v-1zM638 192.9v-1h1v1zM638 202.7v0.5h1v-0.5zM639 192.9v-1h1v1zM639 202.7v1h1v-1zM640 192.9v-1.5h1v1.5zM641 192.9v-0.5h1v0.5zM641 202.7v1h1v-1zM642 202.7v0.5h1v-0.5zM643 192.9v-0.5h1v0.5zM643 202.7v0.5h1v-0.5zM644 192.9v-0.5h1v0.5zM644 202.7v1h1v-1zM645 192.9v-1h1v1zM645 202.7v1h1v-1zM646 192.9v-1h1v1zM646 202.7v1.5h1v-1.5zM647 192.9v-1.5h1v1.5zM647 202.7v1h1v-1zM648 192.9v-1h1v1zM648 202.7v0.5h1v-0.5zM649 192.9v-1h1v1zM650 192.9v-1h1v1zM650 202.7v1h1v-1zM651 202.7v0.5h1v-0.5zM652 192.9v-1h1v1zM652 202.7v1h1v-1zM653 192.9v-1.5h1v1.5zM653 202.7v1.5h1v-1.5zM654 202.7v0.5h1v-0.5zM655 192.9v-1.5h1v1.5zM656 202.7v1h1v-1zM657 192.9v-1.5h1v1.5zM657 202.7v1.5h1v-1.5zM658 192.9v-1h1v1zM658 202.7v0.5h1v-0.5zM659 202.7v1h1v-1zM660 202.7v1.5h1v-1.5zM661 192.9v-1h1v1zM662 192.9v-1h1v1zM662 202.7v0.5h1v-0.5zM664 202.7v0.5h1v-0.5zM665 192.9v-0.5h1v0.5zM665 202.7v0.5h1v-0.5zM667 192.9v-1h1v1zM667 202.7v0.5h1v-0.5zM669 192.9v-1h1v1zM669 202.7v1h1v-1zM670 192.9v-0.5h1v0.5zM670 202.7v1h1v-1zM671 192.9v-0.5h1v0.5zM672 192.9v-1h1v1zM673 202.7v1h1v-1zM674 192.9v-1h1v1zM674 202.7v0.5h1v-0.5zM675 202.7v1h1v-1zM676 192.9v-0.5h1v0.5zM676 202.7v1h1v-1zM677 192.9v-0.5h1v0.5zM678 192.9v-1h1v1zM679 192.9v-1h1v1zM679 202.7v1h1v-1zM680 202.7v0.5h1v-0.5zM681 192.9v-1h1v1zM681 202.7v1.5h1v-1.5zM682 202.7v1h1v-1zM683 192.9v-0.5h1v0.5zM683 202.7v1.5h1v-1.5zM684 202.7v1h1v-1zM685 192.9v-1h1v1zM686 192.9v-1h1v1zM686 202.7v0.5h1v-0.5zM687 192.9v-1.5h1v1.5zM687 202.7v1.5h1v-1.5zM688 192.9v-0.5h1v0.5zM688 202.7v1.5h1v-1.5zM690 192.9v-1h1v1zM690 202.7v0.5h1v-0.5zM691 202.7v0.5h1v-0.5zM692 192.9v-0.5h1v0.5zM694 192.9v-0.5h1v0.5zM694 202.7v0.5h1v-0.5zM696 192.9v-1h1v1zM696 202.7v0.5h1v-0.5zM697 192.9v-0.5h1v0.5zM698 202.7v0.5h1v-0.5zM699 192.9v-0.5h1v0.5zM699 202.7v0.5h1v-0.5zM700 192.9v-1h1v1zM700 202.7v0.5h1v-0.5zM701 192.9v-0.5h1v0.5zM702 192.9v-1h1v1zM704 192.9v-0.5h1v0.5zM704 202.7v1.5h1v-1.5zM705 192.9v-0.5h1v0.5zM706 192.9v-1h1v1zM706 202.7v1h1v-1zM707 192.9v-0.5h1v0.5zM707 202.7v1h1v-1zM708 192.9v-1h1v1zM708 202.7v0.5h1v-0.5zM709 202.7v1h1v-1zM710 192.9v-0.5h1v0.5zM710 202.7v0.5h1v-0.5zM711 192.9v-0.5h1v0.5zM712 192.9v-1.5h1v1.5zM712 202.7v1h1v-1zM713 192.9v-0.5h1v0.5zM714 192.9v-0.5h1v0.5zM715 192.9v-1h1v1zM715 202.7v0.5h1v-0.5zM716 192.9v-1h1v1zM716 202.7v1h1v-1zM717 192.9v-1h1v1zM717 202.7v1h1v-1zM718 192.9v-1h1v1zM718 202.7v0.5h1v-0.5zM719 192.9v-1h1v1zM721 192.9v-1h1v1zM722 202.7v1.5h1v-1.5zM723 192.9v-0.5h1v0.5zM723 202.7v1.5h1v-1.5zM724 202.7v0.5h1v-0.5zM725 192.9v-0.5h1v0.5zM726 192.9v-1h1v1zM726 202.7v1h1v-1zM727 192.9v-1.5h1v1.5zM727 202.7v1h1v-1zM729 192.9v-1.5h1v1.5zM729 202.7v1h1v-1zM730 192.9v-1.5h1v1.5zM730 202.7v0.5h1v-0.5zM731 192.9v-1h1v1zM731 202.7v1h1v-1zM732 192.9v-0.5h1v0.5zM732 202.7v0.5h1v-0.5zM733 202.7v1h1v-1zM734 192.9v-1.5h1v1.5zM734 202.7v0.5h1v-0.5zM735 192.9v-0.5h1v0.5zM736 192.9v-0.5h1v0.5zM737 192.9v-1h1v1zM737 202.7v0.5h1v-0.5zM738 192.9v-1.5h1v1.5zM738 202.7v1.5h1v-1.5zM739 192.9v-0.5h1v0.5zM741 202.7v1h1v-1zM742 192.9v-1.5h1v1.5zM742 202.7v1h1v-1zM743 192.9v-1.5h1v1.5zM743 202.7v1h1v-1zM744 192.9v-0.5h1v0.5zM745 202.7v0.5h1v-0.5zM746 192.9v-0.5h1v0.5zM746 202.7v0.5h1v-0.5zM747 192.9v-1h1v1zM748 192.9v-0.5h1v0.5zM748 202.7v1h1v-1zM749 192.9v-1h1v1zM749 202.7v1h1v-1zM751 192.9v-1h1v1zM753 192.9v-0.5h1v0.5zM753 202.7v1h1v-1zM754 192.9v-0.5h1v0.5zM755 202.7v1.5h1v-1.5zM756 192.9v-0.5h1v0.5zM756 202.7v0.5h1v-0.5z" fill="#7a0a44" opacity="0.6"/><defs><linearGradient id="ty" x1="0" y1="0" x2="0" y2="1"><stop offset="0" stop-color="#8e8e18"/><stop offset="0.14" stop-color="#eeee2c"/><stop offset="0.5" stop-color="#fafa60"/><stop offset="0.86" stop-color="#eeee2c"/><stop offset="1" stop-color="#8e8e18"/></linearGradient></defs><rect x="26" y="235.5" width="731" height="9.599999999999994" fill="url(#ty)"/><path d="M27 235.5v-1h1v1zM27 245.1v0.5h1v-0.5zM29 235.5v-1.5h1v1.5zM29 245.1v1h1v-1zM30 235.5v-1.5h1v1.5zM30 245.1v1.5h1v-1.5zM31 235.5v-1.5h1v1.5zM31 245.1v1h1v-1zM32 235.5v-0.5h1v0.5zM33 235.5v-0.5h1v0.5zM34 235.5v-1h1v1zM35 235.5v-1h1v1zM35 245.1v1h1v-1zM36 235.5v-0.5h1v0.5zM36 245.1v0.5h1v-0.5zM37 245.1v0.5h1v-0.5zM38 245.1v1h1v-1zM39 235.5v-1.5h1v1.5zM40 235.5v-1h1v1zM41 235.5v-0.5h1v0.5zM41 245.1v0.5h1v-0.5zM42 245.1v0.5h1v-0.5zM43 235.5v-1.5h1v1.5zM43 245.1v1h1v-1zM44 235.5v-1h1v1zM44 245.1v0.5h1v-0.5zM45 235.5v-1h1v1zM46 235.5v-0.5h1v0.5zM47 235.5v-1h1v1zM47 245.1v0.5h1v-0.5zM48 235.5v-1h1v1zM48 245.1v0.5h1v-0.5zM49 235.5v-0.5h1v0.5zM49 245.1v1h1v-1zM50 235.5v-1h1v1zM50 245.1v1.5h1v-1.5zM51 245.1v0.5h1v-0.5zM52 235.5v-1h1v1zM52 245.1v1h1v-1zM53 245.1v1.5h1v-1.5zM54 235.5v-1.5h1v1.5zM55 235.5v-1h1v1zM55 245.1v1h1v-1zM56 235.5v-0.5h1v0.5zM56 245.1v1h1v-1zM57 235.5v-1h1v1zM57 245.1v0.5h1v-0.5zM58 235.5v-1h1v1zM58 245.1v1h1v-1zM59 235.5v-0.5h1v0.5zM59 245.1v0.5h1v-0.5zM60 235.5v-0.5h1v0.5zM60 245.1v1h1v-1zM61 235.5v-1h1v1zM62 235.5v-0.5h1v0.5zM62 245.1v1.5h1v-1.5zM63 235.5v-0.5h1v0.5zM63 245.1v1h1v-1zM64 235.5v-1h1v1zM65 235.5v-1.5h1v1.5zM66 245.1v1h1v-1zM67 235.5v-1h1v1zM67 245.1v0.5h1v-0.5zM68 235.5v-1h1v1zM69 245.1v1h1v-1zM70 235.5v-1h1v1zM70 245.1v0.5h1v-0.5zM71 235.5v-1h1v1zM71 245.1v1h1v-1zM72 235.5v-0.5h1v0.5zM72 245.1v0.5h1v-0.5zM73 235.5v-1h1v1zM74 235.5v-1h1v1zM74 245.1v0.5h1v-0.5zM75 235.5v-0.5h1v0.5zM75 245.1v0.5h1v-0.5zM78 235.5v-1h1v1zM78 245.1v1h1v-1zM80 235.5v-1.5h1v1.5zM80 245.1v1.5h1v-1.5zM81 235.5v-0.5h1v0.5zM81 245.1v1h1v-1zM83 235.5v-1h1v1zM83 245.1v1h1v-1zM84 235.5v-0.5h1v0.5zM84 245.1v1h1v-1zM85 235.5v-0.5h1v0.5zM86 235.5v-1h1v1zM86 245.1v0.5h1v-0.5zM87 245.1v1h1v-1zM88 235.5v-1h1v1zM88 245.1v1h1v-1zM89 245.1v1h1v-1zM90 235.5v-1h1v1zM90 245.1v1h1v-1zM91 235.5v-1h1v1zM92 235.5v-1.5h1v1.5zM92 245.1v0.5h1v-0.5zM93 235.5v-1h1v1zM94 235.5v-1.5h1v1.5zM94 245.1v0.5h1v-0.5zM95 245.1v1.5h1v-1.5zM96 235.5v-1h1v1zM96 245.1v1h1v-1zM97 235.5v-1h1v1zM97 245.1v1h1v-1zM98 235.5v-1.5h1v1.5zM98 245.1v1.5h1v-1.5zM99 245.1v1h1v-1zM100 235.5v-1h1v1zM100 245.1v1h1v-1zM101 245.1v0.5h1v-0.5zM102 235.5v-1.5h1v1.5zM102 245.1v1h1v-1zM103 235.5v-0.5h1v0.5zM103 245.1v1h1v-1zM105 235.5v-1h1v1zM105 245.1v0.5h1v-0.5zM106 235.5v-1.5h1v1.5zM107 245.1v0.5h1v-0.5zM108 235.5v-1.5h1v1.5zM108 245.1v1h1v-1zM109 245.1v0.5h1v-0.5zM111 235.5v-0.5h1v0.5zM112 245.1v1h1v-1zM113 235.5v-1h1v1zM114 235.5v-0.5h1v0.5zM114 245.1v0.5h1v-0.5zM115 245.1v1h1v-1zM116 245.1v0.5h1v-0.5zM117 245.1v1h1v-1zM118 235.5v-1.5h1v1.5zM119 235.5v-1h1v1zM120 235.5v-1h1v1zM120 245.1v1.5h1v-1.5zM121 235.5v-0.5h1v0.5zM122 235.5v-0.5h1v0.5zM122 245.1v1h1v-1zM123 235.5v-1.5h1v1.5zM123 245.1v0.5h1v-0.5zM124 235.5v-1.5h1v1.5zM124 245.1v1.5h1v-1.5zM125 235.5v-1h1v1zM125 245.1v1h1v-1zM126 245.1v1.5h1v-1.5zM127 235.5v-0.5h1v0.5zM128 245.1v0.5h1v-0.5zM129 235.5v-1h1v1zM129 245.1v1h1v-1zM130 235.5v-1h1v1zM130 245.1v0.5h1v-0.5zM131 235.5v-1h1v1zM131 245.1v0.5h1v-0.5zM132 245.1v1.5h1v-1.5zM133 235.5v-1h1v1zM133 245.1v0.5h1v-0.5zM134 245.1v0.5h1v-0.5zM135 235.5v-1h1v1zM135 245.1v0.5h1v-0.5zM136 235.5v-1.5h1v1.5zM136 245.1v1h1v-1zM138 235.5v-1h1v1zM139 235.5v-0.5h1v0.5zM139 245.1v0.5h1v-0.5zM140 245.1v1h1v-1zM141 235.5v-0.5h1v0.5zM142 235.5v-1.5h1v1.5zM142 245.1v1h1v-1zM143 235.5v-0.5h1v0.5zM144 235.5v-1.5h1v1.5zM145 235.5v-0.5h1v0.5zM146 245.1v1.5h1v-1.5zM147 235.5v-0.5h1v0.5zM148 245.1v1h1v-1zM149 235.5v-0.5h1v0.5zM149 245.1v1.5h1v-1.5zM150 235.5v-1h1v1zM150 245.1v1h1v-1zM151 235.5v-0.5h1v0.5zM151 245.1v1.5h1v-1.5zM152 245.1v1h1v-1zM153 235.5v-0.5h1v0.5zM153 245.1v1h1v-1zM154 235.5v-1h1v1zM154 245.1v1.5h1v-1.5zM155 235.5v-1.5h1v1.5zM155 245.1v0.5h1v-0.5zM156 235.5v-0.5h1v0.5zM157 245.1v0.5h1v-0.5zM158 245.1v0.5h1v-0.5zM159 235.5v-1h1v1zM159 245.1v0.5h1v-0.5zM160 235.5v-1.5h1v1.5zM161 235.5v-1.5h1v1.5zM161 245.1v1.5h1v-1.5zM163 245.1v1h1v-1zM164 235.5v-1.5h1v1.5zM164 245.1v1h1v-1zM165 235.5v-1h1v1zM165 245.1v1h1v-1zM166 235.5v-0.5h1v0.5zM166 245.1v1.5h1v-1.5zM167 235.5v-0.5h1v0.5zM168 235.5v-1h1v1zM168 245.1v1.5h1v-1.5zM169 235.5v-0.5h1v0.5zM169 245.1v0.5h1v-0.5zM170 245.1v1.5h1v-1.5zM171 235.5v-1h1v1zM171 245.1v1h1v-1zM172 245.1v0.5h1v-0.5zM173 235.5v-0.5h1v0.5zM173 245.1v1h1v-1zM174 245.1v0.5h1v-0.5zM175 245.1v1h1v-1zM176 235.5v-1h1v1zM178 235.5v-1.5h1v1.5zM178 245.1v0.5h1v-0.5zM179 235.5v-1h1v1zM179 245.1v0.5h1v-0.5zM180 235.5v-0.5h1v0.5zM180 245.1v1h1v-1zM181 235.5v-0.5h1v0.5zM181 245.1v0.5h1v-0.5zM182 235.5v-0.5h1v0.5zM182 245.1v0.5h1v-0.5zM183 245.1v0.5h1v-0.5zM184 235.5v-1h1v1zM184 245.1v0.5h1v-0.5zM185 235.5v-0.5h1v0.5zM187 235.5v-0.5h1v0.5zM187 245.1v1h1v-1zM188 245.1v1h1v-1zM189 245.1v1h1v-1zM190 235.5v-1h1v1zM191 235.5v-0.5h1v0.5zM191 245.1v0.5h1v-0.5zM192 235.5v-0.5h1v0.5zM193 235.5v-1h1v1zM193 245.1v0.5h1v-0.5zM194 235.5v-0.5h1v0.5zM194 245.1v1h1v-1zM195 235.5v-1h1v1zM195 245.1v1h1v-1zM196 235.5v-1h1v1zM197 235.5v-1h1v1zM198 235.5v-1h1v1zM198 245.1v1.5h1v-1.5zM199 245.1v1.5h1v-1.5zM200 245.1v1.5h1v-1.5zM201 235.5v-0.5h1v0.5zM201 245.1v1h1v-1zM202 235.5v-1h1v1zM202 245.1v1h1v-1zM203 245.1v0.5h1v-0.5zM204 235.5v-1.5h1v1.5zM204 245.1v0.5h1v-0.5zM205 235.5v-1.5h1v1.5zM205 245.1v1.5h1v-1.5zM206 245.1v1.5h1v-1.5zM207 235.5v-1.5h1v1.5zM208 235.5v-1h1v1zM209 235.5v-0.5h1v0.5zM209 245.1v1.5h1v-1.5zM210 235.5v-0.5h1v0.5zM210 245.1v1h1v-1zM211 235.5v-0.5h1v0.5zM211 245.1v1h1v-1zM212 235.5v-1.5h1v1.5zM212 245.1v1h1v-1zM213 245.1v0.5h1v-0.5zM214 235.5v-1.5h1v1.5zM214 245.1v1h1v-1zM215 235.5v-1h1v1zM215 245.1v0.5h1v-0.5zM216 235.5v-0.5h1v0.5zM217 235.5v-1h1v1zM217 245.1v0.5h1v-0.5zM218 235.5v-1h1v1zM218 245.1v0.5h1v-0.5zM219 235.5v-1.5h1v1.5zM219 245.1v0.5h1v-0.5zM220 235.5v-1h1v1zM220 245.1v0.5h1v-0.5zM221 245.1v1.5h1v-1.5zM222 245.1v0.5h1v-0.5zM225 235.5v-1.5h1v1.5zM225 245.1v1h1v-1zM226 235.5v-0.5h1v0.5zM226 245.1v0.5h1v-0.5zM227 235.5v-0.5h1v0.5zM227 245.1v0.5h1v-0.5zM228 235.5v-1h1v1zM228 245.1v1.5h1v-1.5zM229 235.5v-0.5h1v0.5zM230 235.5v-1h1v1zM231 245.1v0.5h1v-0.5zM232 235.5v-1h1v1zM232 245.1v0.5h1v-0.5zM233 235.5v-0.5h1v0.5zM233 245.1v1h1v-1zM234 235.5v-1h1v1zM234 245.1v1h1v-1zM235 235.5v-1h1v1zM235 245.1v0.5h1v-0.5zM237 235.5v-1h1v1zM238 235.5v-1h1v1zM239 235.5v-0.5h1v0.5zM239 245.1v1h1v-1zM240 235.5v-0.5h1v0.5zM240 245.1v0.5h1v-0.5zM241 235.5v-0.5h1v0.5zM241 245.1v1.5h1v-1.5zM242 235.5v-1h1v1zM242 245.1v0.5h1v-0.5zM243 235.5v-1h1v1zM243 245.1v1.5h1v-1.5zM244 245.1v1.5h1v-1.5zM245 235.5v-0.5h1v0.5zM245 245.1v0.5h1v-0.5zM246 245.1v0.5h1v-0.5zM247 235.5v-0.5h1v0.5zM247 245.1v1h1v-1zM248 245.1v1.5h1v-1.5zM249 245.1v1h1v-1zM250 235.5v-0.5h1v0.5zM251 235.5v-1h1v1zM253 235.5v-0.5h1v0.5zM253 245.1v0.5h1v-0.5zM254 245.1v1h1v-1zM255 235.5v-0.5h1v0.5zM255 245.1v1.5h1v-1.5zM256 235.5v-1h1v1zM256 245.1v1h1v-1zM258 245.1v1h1v-1zM260 235.5v-1h1v1zM262 235.5v-1.5h1v1.5zM262 245.1v1.5h1v-1.5zM263 235.5v-1h1v1zM263 245.1v0.5h1v-0.5zM264 235.5v-1h1v1zM266 235.5v-0.5h1v0.5zM266 245.1v1h1v-1zM267 235.5v-1h1v1zM268 235.5v-1h1v1zM268 245.1v0.5h1v-0.5zM270 235.5v-0.5h1v0.5zM270 245.1v0.5h1v-0.5zM271 235.5v-1.5h1v1.5zM271 245.1v1h1v-1zM272 245.1v1h1v-1zM273 235.5v-0.5h1v0.5zM273 245.1v0.5h1v-0.5zM274 235.5v-1h1v1zM274 245.1v1h1v-1zM275 235.5v-1.5h1v1.5zM275 245.1v0.5h1v-0.5zM277 235.5v-1.5h1v1.5zM277 245.1v0.5h1v-0.5zM278 235.5v-1.5h1v1.5zM279 245.1v1h1v-1zM280 235.5v-1h1v1zM280 245.1v0.5h1v-0.5zM281 235.5v-1.5h1v1.5zM281 245.1v0.5h1v-0.5zM282 235.5v-1h1v1zM282 245.1v0.5h1v-0.5zM283 235.5v-0.5h1v0.5zM283 245.1v0.5h1v-0.5zM284 235.5v-1.5h1v1.5zM285 245.1v0.5h1v-0.5zM286 235.5v-1h1v1zM286 245.1v1h1v-1zM287 235.5v-0.5h1v0.5zM288 235.5v-0.5h1v0.5zM288 245.1v1h1v-1zM289 235.5v-1h1v1zM289 245.1v1h1v-1zM290 235.5v-1.5h1v1.5zM290 245.1v0.5h1v-0.5zM294 235.5v-1h1v1zM294 245.1v1.5h1v-1.5zM295 235.5v-1.5h1v1.5zM296 235.5v-0.5h1v0.5zM296 245.1v1.5h1v-1.5zM297 235.5v-0.5h1v0.5zM297 245.1v0.5h1v-0.5zM298 235.5v-0.5h1v0.5zM298 245.1v1h1v-1zM299 235.5v-1h1v1zM299 245.1v1h1v-1zM300 235.5v-1.5h1v1.5zM300 245.1v1h1v-1zM301 245.1v1h1v-1zM302 235.5v-1h1v1zM302 245.1v1h1v-1zM303 235.5v-0.5h1v0.5zM304 235.5v-1h1v1zM304 245.1v1h1v-1zM305 235.5v-0.5h1v0.5zM305 245.1v1.5h1v-1.5zM306 235.5v-1h1v1zM306 245.1v0.5h1v-0.5zM307 235.5v-1.5h1v1.5zM308 235.5v-1.5h1v1.5zM308 245.1v1h1v-1zM309 235.5v-0.5h1v0.5zM309 245.1v1h1v-1zM310 235.5v-1.5h1v1.5zM310 245.1v1h1v-1zM311 235.5v-1h1v1zM311 245.1v0.5h1v-0.5zM312 235.5v-1h1v1zM312 245.1v0.5h1v-0.5zM313 235.5v-0.5h1v0.5zM313 245.1v1h1v-1zM314 235.5v-1h1v1zM314 245.1v0.5h1v-0.5zM315 245.1v0.5h1v-0.5zM316 245.1v1h1v-1zM317 235.5v-0.5h1v0.5zM318 235.5v-1h1v1zM318 245.1v1.5h1v-1.5zM319 235.5v-1.5h1v1.5zM319 245.1v0.5h1v-0.5zM320 245.1v1h1v-1zM321 245.1v0.5h1v-0.5zM322 235.5v-1.5h1v1.5zM323 245.1v1h1v-1zM325 245.1v1h1v-1zM326 235.5v-1h1v1zM327 235.5v-1h1v1zM327 245.1v1.5h1v-1.5zM328 245.1v0.5h1v-0.5zM329 235.5v-1h1v1zM329 245.1v0.5h1v-0.5zM330 235.5v-1h1v1zM331 245.1v1.5h1v-1.5zM332 235.5v-1h1v1zM332 245.1v1.5h1v-1.5zM333 235.5v-1.5h1v1.5zM334 235.5v-1h1v1zM335 235.5v-0.5h1v0.5zM335 245.1v1.5h1v-1.5zM336 235.5v-1h1v1zM337 235.5v-0.5h1v0.5zM337 245.1v1.5h1v-1.5zM338 235.5v-0.5h1v0.5zM339 235.5v-1h1v1zM339 245.1v0.5h1v-0.5zM340 235.5v-1.5h1v1.5zM340 245.1v0.5h1v-0.5zM341 235.5v-0.5h1v0.5zM342 235.5v-0.5h1v0.5zM342 245.1v1.5h1v-1.5zM344 235.5v-1h1v1zM344 245.1v1h1v-1zM346 235.5v-1.5h1v1.5zM346 245.1v1h1v-1zM347 235.5v-0.5h1v0.5zM347 245.1v1h1v-1zM348 235.5v-1.5h1v1.5zM348 245.1v0.5h1v-0.5zM350 235.5v-1h1v1zM350 245.1v0.5h1v-0.5zM351 235.5v-0.5h1v0.5zM351 245.1v0.5h1v-0.5zM352 235.5v-1h1v1zM352 245.1v1h1v-1zM353 235.5v-1.5h1v1.5zM354 245.1v0.5h1v-0.5zM355 245.1v0.5h1v-0.5zM356 235.5v-1h1v1zM356 245.1v0.5h1v-0.5zM358 235.5v-0.5h1v0.5zM359 235.5v-0.5h1v0.5zM359 245.1v1.5h1v-1.5zM360 235.5v-0.5h1v0.5zM360 245.1v1h1v-1zM361 235.5v-0.5h1v0.5zM361 245.1v0.5h1v-0.5zM362 235.5v-0.5h1v0.5zM363 235.5v-1h1v1zM363 245.1v1.5h1v-1.5zM364 245.1v0.5h1v-0.5zM365 235.5v-1.5h1v1.5zM365 245.1v1.5h1v-1.5zM366 235.5v-1.5h1v1.5zM366 245.1v0.5h1v-0.5zM367 235.5v-1.5h1v1.5zM368 235.5v-1.5h1v1.5zM368 245.1v0.5h1v-0.5zM369 235.5v-0.5h1v0.5zM370 235.5v-0.5h1v0.5zM371 235.5v-0.5h1v0.5zM371 245.1v1.5h1v-1.5zM373 235.5v-0.5h1v0.5zM373 245.1v1h1v-1zM374 235.5v-1h1v1zM374 245.1v1h1v-1zM375 235.5v-0.5h1v0.5zM376 235.5v-1h1v1zM377 235.5v-1.5h1v1.5zM378 235.5v-1.5h1v1.5zM378 245.1v1h1v-1zM379 235.5v-0.5h1v0.5zM380 235.5v-1.5h1v1.5zM380 245.1v1.5h1v-1.5zM381 235.5v-1.5h1v1.5zM381 245.1v0.5h1v-0.5zM382 245.1v0.5h1v-0.5zM383 235.5v-1.5h1v1.5zM384 235.5v-0.5h1v0.5zM384 245.1v1h1v-1zM385 245.1v1.5h1v-1.5zM388 235.5v-0.5h1v0.5zM389 235.5v-1h1v1zM389 245.1v1h1v-1zM390 235.5v-0.5h1v0.5zM391 235.5v-1.5h1v1.5zM392 235.5v-0.5h1v0.5zM392 245.1v1h1v-1zM393 235.5v-0.5h1v0.5zM394 235.5v-0.5h1v0.5zM394 245.1v0.5h1v-0.5zM395 235.5v-1h1v1zM395 245.1v1h1v-1zM396 235.5v-1h1v1zM396 245.1v0.5h1v-0.5zM397 235.5v-0.5h1v0.5zM398 235.5v-1h1v1zM399 245.1v1.5h1v-1.5zM400 235.5v-1h1v1zM400 245.1v1h1v-1zM402 245.1v1h1v-1zM403 235.5v-1h1v1zM404 235.5v-1h1v1zM404 245.1v0.5h1v-0.5zM405 235.5v-1h1v1zM406 235.5v-1h1v1zM407 245.1v0.5h1v-0.5zM409 245.1v0.5h1v-0.5zM410 245.1v1h1v-1zM411 235.5v-0.5h1v0.5zM413 235.5v-1h1v1zM413 245.1v1h1v-1zM414 245.1v1h1v-1zM415 235.5v-1h1v1zM415 245.1v1h1v-1zM416 235.5v-1h1v1zM417 235.5v-1h1v1zM417 245.1v0.5h1v-0.5zM418 235.5v-1.5h1v1.5zM418 245.1v0.5h1v-0.5zM419 245.1v0.5h1v-0.5zM420 245.1v1.5h1v-1.5zM421 245.1v1h1v-1zM422 245.1v0.5h1v-0.5zM423 235.5v-1h1v1zM424 245.1v0.5h1v-0.5zM425 235.5v-0.5h1v0.5zM427 235.5v-1h1v1zM428 235.5v-0.5h1v0.5zM428 245.1v1.5h1v-1.5zM429 235.5v-1h1v1zM429 245.1v0.5h1v-0.5zM430 235.5v-0.5h1v0.5zM431 235.5v-0.5h1v0.5zM431 245.1v1h1v-1zM432 245.1v1h1v-1zM433 235.5v-0.5h1v0.5zM433 245.1v1h1v-1zM434 235.5v-0.5h1v0.5zM434 245.1v1h1v-1zM435 235.5v-0.5h1v0.5zM435 245.1v1h1v-1zM436 235.5v-0.5h1v0.5zM436 245.1v1.5h1v-1.5zM437 235.5v-1h1v1zM437 245.1v1h1v-1zM438 235.5v-0.5h1v0.5zM438 245.1v0.5h1v-0.5zM439 235.5v-0.5h1v0.5zM439 245.1v0.5h1v-0.5zM440 235.5v-1h1v1zM440 245.1v0.5h1v-0.5zM441 235.5v-0.5h1v0.5zM442 235.5v-0.5h1v0.5zM442 245.1v1.5h1v-1.5zM443 235.5v-0.5h1v0.5zM443 245.1v0.5h1v-0.5zM444 235.5v-1.5h1v1.5zM445 235.5v-1h1v1zM446 245.1v1h1v-1zM447 235.5v-1h1v1zM447 245.1v0.5h1v-0.5zM448 235.5v-1h1v1zM448 245.1v1h1v-1zM449 235.5v-1h1v1zM449 245.1v0.5h1v-0.5zM450 245.1v1.5h1v-1.5zM451 245.1v1h1v-1zM453 235.5v-1.5h1v1.5zM453 245.1v1h1v-1zM454 235.5v-1.5h1v1.5zM455 235.5v-1h1v1zM456 235.5v-0.5h1v0.5zM456 245.1v1h1v-1zM457 235.5v-1h1v1zM457 245.1v0.5h1v-0.5zM458 235.5v-1h1v1zM458 245.1v1h1v-1zM459 235.5v-0.5h1v0.5zM459 245.1v1h1v-1zM460 235.5v-1h1v1zM460 245.1v0.5h1v-0.5zM461 235.5v-0.5h1v0.5zM461 245.1v1h1v-1zM462 245.1v0.5h1v-0.5zM463 235.5v-1h1v1zM463 245.1v1h1v-1zM464 235.5v-1.5h1v1.5zM464 245.1v0.5h1v-0.5zM465 235.5v-1h1v1zM465 245.1v0.5h1v-0.5zM466 235.5v-1h1v1zM466 245.1v1h1v-1zM467 235.5v-0.5h1v0.5zM468 235.5v-1.5h1v1.5zM468 245.1v1h1v-1zM469 235.5v-1.5h1v1.5zM469 245.1v1h1v-1zM470 235.5v-1.5h1v1.5zM470 245.1v0.5h1v-0.5zM471 235.5v-0.5h1v0.5zM471 245.1v1h1v-1zM472 245.1v0.5h1v-0.5zM473 235.5v-1h1v1zM473 245.1v0.5h1v-0.5zM474 235.5v-1h1v1zM474 245.1v1h1v-1zM475 235.5v-1h1v1zM475 245.1v1.5h1v-1.5zM476 235.5v-0.5h1v0.5zM477 235.5v-1h1v1zM477 245.1v1.5h1v-1.5zM478 235.5v-1h1v1zM478 245.1v1h1v-1zM479 245.1v1h1v-1zM480 235.5v-1.5h1v1.5zM480 245.1v0.5h1v-0.5zM481 235.5v-0.5h1v0.5zM481 245.1v1.5h1v-1.5zM482 235.5v-0.5h1v0.5zM482 245.1v1.5h1v-1.5zM483 235.5v-1h1v1zM483 245.1v0.5h1v-0.5zM484 235.5v-1h1v1zM484 245.1v1h1v-1zM485 235.5v-0.5h1v0.5zM485 245.1v1h1v-1zM487 245.1v1.5h1v-1.5zM488 235.5v-1h1v1zM488 245.1v0.5h1v-0.5zM489 235.5v-1h1v1zM490 235.5v-1h1v1zM491 235.5v-1.5h1v1.5zM491 245.1v0.5h1v-0.5zM492 245.1v1h1v-1zM494 235.5v-1.5h1v1.5zM494 245.1v1h1v-1zM495 235.5v-0.5h1v0.5zM496 235.5v-1h1v1zM496 245.1v1.5h1v-1.5zM497 235.5v-1.5h1v1.5zM497 245.1v1h1v-1zM498 235.5v-1.5h1v1.5zM499 235.5v-0.5h1v0.5zM499 245.1v0.5h1v-0.5zM500 235.5v-0.5h1v0.5zM500 245.1v1.5h1v-1.5zM501 235.5v-1.5h1v1.5zM501 245.1v1.5h1v-1.5zM502 235.5v-0.5h1v0.5zM503 235.5v-0.5h1v0.5zM504 235.5v-1h1v1zM504 245.1v0.5h1v-0.5zM505 235.5v-0.5h1v0.5zM506 235.5v-0.5h1v0.5zM506 245.1v0.5h1v-0.5zM507 235.5v-1h1v1zM507 245.1v1.5h1v-1.5zM508 235.5v-1h1v1zM508 245.1v1h1v-1zM509 235.5v-0.5h1v0.5zM509 245.1v0.5h1v-0.5zM510 235.5v-1h1v1zM511 235.5v-0.5h1v0.5zM511 245.1v0.5h1v-0.5zM512 235.5v-0.5h1v0.5zM512 245.1v0.5h1v-0.5zM513 235.5v-1h1v1zM514 235.5v-0.5h1v0.5zM514 245.1v1h1v-1zM515 235.5v-0.5h1v0.5zM515 245.1v1h1v-1zM516 235.5v-1.5h1v1.5zM517 235.5v-1.5h1v1.5zM517 245.1v1h1v-1zM519 235.5v-1h1v1zM520 235.5v-0.5h1v0.5zM520 245.1v0.5h1v-0.5zM521 235.5v-1h1v1zM521 245.1v1h1v-1zM522 245.1v1h1v-1zM523 235.5v-0.5h1v0.5zM523 245.1v1h1v-1zM524 235.5v-0.5h1v0.5zM524 245.1v1.5h1v-1.5zM525 235.5v-0.5h1v0.5zM525 245.1v0.5h1v-0.5zM526 245.1v1h1v-1zM528 235.5v-1h1v1zM528 245.1v0.5h1v-0.5zM529 245.1v1h1v-1zM530 245.1v0.5h1v-0.5zM531 235.5v-1h1v1zM531 245.1v1h1v-1zM532 235.5v-0.5h1v0.5zM532 245.1v0.5h1v-0.5zM533 235.5v-0.5h1v0.5zM534 235.5v-0.5h1v0.5zM534 245.1v1.5h1v-1.5zM535 235.5v-0.5h1v0.5zM536 235.5v-1h1v1zM536 245.1v1h1v-1zM537 235.5v-0.5h1v0.5zM537 245.1v1.5h1v-1.5zM539 245.1v0.5h1v-0.5zM540 235.5v-1.5h1v1.5zM540 245.1v0.5h1v-0.5zM541 235.5v-1h1v1zM541 245.1v1.5h1v-1.5zM542 235.5v-0.5h1v0.5zM543 235.5v-1h1v1zM543 245.1v0.5h1v-0.5zM544 235.5v-0.5h1v0.5zM544 245.1v0.5h1v-0.5zM545 245.1v1h1v-1zM546 235.5v-1.5h1v1.5zM546 245.1v0.5h1v-0.5zM547 235.5v-0.5h1v0.5zM547 245.1v0.5h1v-0.5zM548 235.5v-1h1v1zM548 245.1v1h1v-1zM549 235.5v-1.5h1v1.5zM549 245.1v0.5h1v-0.5zM550 235.5v-0.5h1v0.5zM551 235.5v-0.5h1v0.5zM551 245.1v1.5h1v-1.5zM552 235.5v-1h1v1zM553 235.5v-1h1v1zM554 235.5v-1.5h1v1.5zM554 245.1v1h1v-1zM555 235.5v-1h1v1zM555 245.1v0.5h1v-0.5zM556 245.1v1h1v-1zM557 245.1v0.5h1v-0.5zM558 235.5v-1.5h1v1.5zM559 245.1v1.5h1v-1.5zM560 235.5v-0.5h1v0.5zM560 245.1v0.5h1v-0.5zM561 235.5v-0.5h1v0.5zM561 245.1v1h1v-1zM562 235.5v-0.5h1v0.5zM562 245.1v0.5h1v-0.5zM563 235.5v-1h1v1zM563 245.1v1.5h1v-1.5zM564 235.5v-1.5h1v1.5zM565 245.1v1h1v-1zM566 235.5v-1h1v1zM566 245.1v0.5h1v-0.5zM567 235.5v-0.5h1v0.5zM567 245.1v1h1v-1zM568 235.5v-1.5h1v1.5zM568 245.1v0.5h1v-0.5zM569 235.5v-0.5h1v0.5zM569 245.1v0.5h1v-0.5zM571 235.5v-0.5h1v0.5zM571 245.1v0.5h1v-0.5zM572 235.5v-0.5h1v0.5zM573 235.5v-1h1v1zM573 245.1v1.5h1v-1.5zM574 235.5v-1.5h1v1.5zM575 235.5v-1h1v1zM576 235.5v-1h1v1zM577 235.5v-0.5h1v0.5zM577 245.1v1h1v-1zM578 245.1v1h1v-1zM579 235.5v-0.5h1v0.5zM579 245.1v1h1v-1zM580 235.5v-0.5h1v0.5zM580 245.1v1.5h1v-1.5zM581 235.5v-0.5h1v0.5zM581 245.1v1.5h1v-1.5zM582 235.5v-0.5h1v0.5zM584 235.5v-1.5h1v1.5zM585 235.5v-1h1v1zM585 245.1v1.5h1v-1.5zM587 235.5v-0.5h1v0.5zM588 235.5v-1.5h1v1.5zM588 245.1v1.5h1v-1.5zM589 245.1v1h1v-1zM590 235.5v-0.5h1v0.5zM591 235.5v-1.5h1v1.5zM591 245.1v1h1v-1zM592 245.1v1h1v-1zM593 235.5v-0.5h1v0.5zM593 245.1v0.5h1v-0.5zM594 235.5v-1.5h1v1.5zM595 235.5v-1h1v1zM595 245.1v1h1v-1zM596 235.5v-1h1v1zM596 245.1v0.5h1v-0.5zM597 235.5v-1.5h1v1.5zM597 245.1v1h1v-1zM598 245.1v0.5h1v-0.5zM599 235.5v-1.5h1v1.5zM600 235.5v-1.5h1v1.5zM600 245.1v1h1v-1zM601 245.1v0.5h1v-0.5zM602 235.5v-0.5h1v0.5zM603 235.5v-1h1v1zM604 245.1v1h1v-1zM605 235.5v-0.5h1v0.5zM605 245.1v1h1v-1zM606 235.5v-0.5h1v0.5zM607 235.5v-0.5h1v0.5zM607 245.1v0.5h1v-0.5zM608 235.5v-0.5h1v0.5zM608 245.1v1h1v-1zM609 235.5v-1.5h1v1.5zM609 245.1v0.5h1v-0.5zM610 235.5v-1h1v1zM610 245.1v0.5h1v-0.5zM611 235.5v-1h1v1zM611 245.1v0.5h1v-0.5zM612 235.5v-1h1v1zM613 235.5v-0.5h1v0.5zM613 245.1v0.5h1v-0.5zM614 245.1v1.5h1v-1.5zM615 235.5v-0.5h1v0.5zM615 245.1v1.5h1v-1.5zM616 235.5v-0.5h1v0.5zM616 245.1v1.5h1v-1.5zM617 235.5v-1h1v1zM617 245.1v0.5h1v-0.5zM618 235.5v-0.5h1v0.5zM620 245.1v1h1v-1zM621 235.5v-1h1v1zM621 245.1v0.5h1v-0.5zM622 235.5v-0.5h1v0.5zM622 245.1v1h1v-1zM623 235.5v-0.5h1v0.5zM623 245.1v1h1v-1zM624 235.5v-1h1v1zM625 235.5v-0.5h1v0.5zM625 245.1v1.5h1v-1.5zM626 235.5v-0.5h1v0.5zM627 235.5v-0.5h1v0.5zM627 245.1v1h1v-1zM628 235.5v-1h1v1zM628 245.1v1h1v-1zM629 245.1v1h1v-1zM630 235.5v-0.5h1v0.5zM631 235.5v-1h1v1zM632 235.5v-0.5h1v0.5zM632 245.1v1h1v-1zM633 235.5v-1.5h1v1.5zM633 245.1v0.5h1v-0.5zM634 245.1v0.5h1v-0.5zM635 245.1v1.5h1v-1.5zM636 235.5v-0.5h1v0.5zM636 245.1v0.5h1v-0.5zM637 245.1v1h1v-1zM638 245.1v1.5h1v-1.5zM639 235.5v-1h1v1zM639 245.1v1h1v-1zM640 235.5v-0.5h1v0.5zM640 245.1v0.5h1v-0.5zM641 235.5v-1h1v1zM641 245.1v0.5h1v-0.5zM644 235.5v-0.5h1v0.5zM644 245.1v1.5h1v-1.5zM645 235.5v-1h1v1zM647 235.5v-1.5h1v1.5zM648 235.5v-1.5h1v1.5zM648 245.1v1h1v-1zM649 235.5v-0.5h1v0.5zM650 245.1v1h1v-1zM651 235.5v-1h1v1zM651 245.1v1h1v-1zM652 235.5v-1.5h1v1.5zM653 235.5v-0.5h1v0.5zM654 235.5v-1h1v1zM654 245.1v1h1v-1zM655 235.5v-1h1v1zM655 245.1v1h1v-1zM656 235.5v-0.5h1v0.5zM656 245.1v1.5h1v-1.5zM657 245.1v1h1v-1zM658 235.5v-1.5h1v1.5zM659 245.1v1.5h1v-1.5zM660 235.5v-1h1v1zM661 235.5v-1h1v1zM662 235.5v-0.5h1v0.5zM663 245.1v1.5h1v-1.5zM665 235.5v-0.5h1v0.5zM666 235.5v-1h1v1zM666 245.1v1.5h1v-1.5zM667 235.5v-0.5h1v0.5zM667 245.1v1h1v-1zM668 235.5v-0.5h1v0.5zM668 245.1v1h1v-1zM669 235.5v-0.5h1v0.5zM670 235.5v-1.5h1v1.5zM671 235.5v-1h1v1zM673 235.5v-1.5h1v1.5zM673 245.1v0.5h1v-0.5zM674 235.5v-0.5h1v0.5zM674 245.1v1.5h1v-1.5zM675 245.1v1.5h1v-1.5zM676 235.5v-1h1v1zM676 245.1v1.5h1v-1.5zM677 235.5v-0.5h1v0.5zM677 245.1v1h1v-1zM678 235.5v-1h1v1zM678 245.1v1h1v-1zM679 245.1v0.5h1v-0.5zM680 235.5v-0.5h1v0.5zM680 245.1v0.5h1v-0.5zM681 235.5v-1h1v1zM681 245.1v1.5h1v-1.5zM683 235.5v-1.5h1v1.5zM683 245.1v1h1v-1zM684 245.1v0.5h1v-0.5zM685 245.1v0.5h1v-0.5zM686 235.5v-0.5h1v0.5zM687 235.5v-1h1v1zM687 245.1v0.5h1v-0.5zM688 245.1v1h1v-1zM689 235.5v-1h1v1zM689 245.1v1h1v-1zM691 235.5v-0.5h1v0.5zM692 235.5v-1h1v1zM693 235.5v-0.5h1v0.5zM693 245.1v0.5h1v-0.5zM694 235.5v-1h1v1zM694 245.1v0.5h1v-0.5zM696 235.5v-1.5h1v1.5zM696 245.1v0.5h1v-0.5zM697 245.1v1h1v-1zM698 245.1v1h1v-1zM699 235.5v-1h1v1zM699 245.1v1h1v-1zM700 245.1v0.5h1v-0.5zM701 235.5v-0.5h1v0.5zM701 245.1v0.5h1v-0.5zM702 245.1v1.5h1v-1.5zM703 235.5v-1.5h1v1.5zM703 245.1v0.5h1v-0.5zM705 235.5v-0.5h1v0.5zM705 245.1v0.5h1v-0.5zM706 235.5v-1.5h1v1.5zM706 245.1v0.5h1v-0.5zM707 235.5v-1h1v1zM707 245.1v1h1v-1zM708 235.5v-1h1v1zM708 245.1v1.5h1v-1.5zM710 245.1v0.5h1v-0.5zM711 235.5v-0.5h1v0.5zM711 245.1v1.5h1v-1.5zM712 235.5v-1.5h1v1.5zM712 245.1v1.5h1v-1.5zM713 245.1v1h1v-1zM714 235.5v-0.5h1v0.5zM715 235.5v-1h1v1zM715 245.1v1h1v-1zM717 235.5v-0.5h1v0.5zM718 245.1v1h1v-1zM719 235.5v-0.5h1v0.5zM720 245.1v0.5h1v-0.5zM721 235.5v-0.5h1v0.5zM721 245.1v0.5h1v-0.5zM722 235.5v-0.5h1v0.5zM723 235.5v-0.5h1v0.5zM723 245.1v1h1v-1zM724 235.5v-0.5h1v0.5zM725 245.1v1.5h1v-1.5zM726 235.5v-1.5h1v1.5zM726 245.1v0.5h1v-0.5zM727 235.5v-1.5h1v1.5zM728 235.5v-1h1v1zM728 245.1v1h1v-1zM729 235.5v-0.5h1v0.5zM730 235.5v-1h1v1zM730 245.1v1h1v-1zM731 245.1v1.5h1v-1.5zM732 245.1v1h1v-1zM733 235.5v-0.5h1v0.5zM733 245.1v0.5h1v-0.5zM735 245.1v1h1v-1zM736 235.5v-1h1v1zM737 235.5v-0.5h1v0.5zM737 245.1v1h1v-1zM738 235.5v-1h1v1zM739 235.5v-0.5h1v0.5zM739 245.1v1h1v-1zM740 235.5v-1.5h1v1.5zM740 245.1v0.5h1v-0.5zM741 245.1v0.5h1v-0.5zM742 235.5v-1h1v1zM742 245.1v1h1v-1zM743 235.5v-1h1v1zM744 235.5v-0.5h1v0.5zM745 235.5v-1h1v1zM746 235.5v-0.5h1v0.5zM747 235.5v-1.5h1v1.5zM747 245.1v1h1v-1zM748 235.5v-1.5h1v1.5zM748 245.1v1.5h1v-1.5zM749 235.5v-0.5h1v0.5zM749 245.1v0.5h1v-0.5zM750 245.1v0.5h1v-0.5zM753 245.1v0.5h1v-0.5zM754 235.5v-0.5h1v0.5zM754 245.1v1h1v-1zM755 235.5v-1h1v1zM756 235.5v-0.5h1v0.5zM756 245.1v0.5h1v-0.5z" fill="#8e8e18" opacity="0.6"/></svg>
<div class="a" style="left:15px;top:341.6px;width:742.8px;height:1.2px;background:#1f3048"></div>
<div class="a" style="left:756.6px;top:35px;width:1.2px;height:307.8px;background:#1f3048"></div>
<div class="a" style="left:15px;top:340.6px;width:741.6px;height:1px;background:#07101a"></div>
<div class="a" style="left:755.6px;top:36px;width:1px;height:305px;background:#07101a"></div>
<div class="a" style="left:757.8px;top:34px;width:1.2px;height:311px;background:#111"></div>
<div class="a" style="left:15px;top:342.8px;width:744px;height:2.2px;background:#111"></div>
<div class="t" style="left:16px;top:95.5px;font-size:6px;line-height:8px;color:#30c030">C4&gt;</div>
<div class="t" style="left:16px;top:148.7px;font-size:6px;line-height:8px;color:#30c0c0">C3&gt;</div>
<div class="t" style="left:16px;top:192.5px;font-size:6px;line-height:8px;color:#c01870">C2&gt;</div>
<div class="a" style="left:15.5px;top:236px;width:8.5px;height:7px;background:#e8e830;border-radius:1px"></div>
<svg class="a" style="left:24px;top:237px" width="3" height="5"><path d="M0 0L2 2.5L0 5Z" fill="#e8e830"/></svg>
<div class="t" style="left:16px;top:235.5px;width:8px;text-align:center;font-size:6px;line-height:8px;color:#333;font-weight:bold">C1</div>
<svg class="a" style="left:722px;top:37px" width="32" height="8" viewBox="0 0 32 8"><path d="M1.4 2.3H2.6L3.3 1H5.7L6.4 2.3H7.6V6.5H1.4Z" fill="none" stroke="#9a9a9a" stroke-width="0.8"/><circle cx="4.5" cy="4.3" r="1.1" fill="none" stroke="#9a9a9a" stroke-width="0.8"/><path d="M13 1.6L14.2 0.9H15.9V2.9H13Z M16.9 0.9H18.2L19.2 2.1V2.9H16.9Z M13 3.9H15.9V6.6H14.6L13 5Z M16.9 3.9H19.2V4.8L17.8 6.6H16.9Z" fill="#7a7a7a"/><path d="M26.5 3.4Q25.4 3.8 25.5 5.4Q25.8 6.8 27 6.7Q27.9 6.4 27.6 4.6Q27.4 3.4 26.5 3.4Z M27.3 0.6Q30.8 1.6 30.6 4.6Q30.5 6.3 29.6 6.8" fill="none" stroke="#9a9a9a" stroke-width="0.8"/></svg>
<div class="a" style="left:15px;top:343px;width:744px;height:91.4px;background:#141414"></div>
<div class="a" style="left:15px;top:345.00px;width:366px;height:7.7px;background:#212121"></div>
<div class="t mt" style="left:19px;top:345.50px">Measure</div>
<div class="t mt" style="left:91.7px;top:345.50px;color:#e0d040">1.Stdev(C1)</div>
<div class="t mt" style="left:164.9px;top:345.50px;color:#d01878">2.Stdev(C2)</div>
<div class="t mt" style="left:237.8px;top:345.50px;color:#30c8d8">3.Stdev(C3)</div>
<div class="t mt" style="left:310.8px;top:345.50px;color:#30d030">4.Stdev(C4)</div>
<div class="a" style="left:15px;top:352.70px;width:366px;height:7.7px;background:#171717"></div>
<div class="t mt" style="left:19px;top:353.20px">Value</div>
<div class="t mt" style="left:91.7px;top:353.20px;color:#e6e6e6">163.2866μV</div>
<div class="t mt" style="left:164.9px;top:353.20px;color:#e6e6e6">164.9086μV</div>
<div class="t mt" style="left:237.8px;top:353.20px;color:#e6e6e6">171.3165μV</div>
<div class="t mt" style="left:310.8px;top:353.20px;color:#e6e6e6">181.6472μV</div>
<div class="a" style="left:15px;top:360.40px;width:366px;height:7.7px;background:#212121"></div>
<div class="t mt" style="left:19px;top:360.90px">Mean</div>
<div class="t mt" style="left:91.7px;top:360.90px;color:#e6e6e6">165.372253μV</div>
<div class="t mt" style="left:164.9px;top:360.90px;color:#e6e6e6">165.692418μV</div>
<div class="t mt" style="left:237.8px;top:360.90px;color:#e6e6e6">173.189896μV</div>
<div class="t mt" style="left:310.8px;top:360.90px;color:#e6e6e6">181.156940μV</div>
<div class="a" style="left:15px;top:368.10px;width:366px;height:7.7px;background:#171717"></div>
<div class="t mt" style="left:19px;top:368.60px">Min</div>
<div class="t mt" style="left:91.7px;top:368.60px;color:#e6e6e6">161.3421μV</div>
<div class="t mt" style="left:164.9px;top:368.60px;color:#e6e6e6">162.1637μV</div>
<div class="t mt" style="left:237.8px;top:368.60px;color:#e6e6e6">170.1353μV</div>
<div class="t mt" style="left:310.8px;top:368.60px;color:#e6e6e6">177.0678μV</div>
<div class="a" style="left:15px;top:375.80px;width:366px;height:7.7px;background:#212121"></div>
<div class="t mt" style="left:19px;top:376.30px">Max</div>
<div class="t mt" style="left:91.7px;top:376.30px;color:#e6e6e6">169.4811μV</div>
<div class="t mt" style="left:164.9px;top:376.30px;color:#e6e6e6">169.0330μV</div>
<div class="t mt" style="left:237.8px;top:376.30px;color:#e6e6e6">178.9823μV</div>
<div class="t mt" style="left:310.8px;top:376.30px;color:#e6e6e6">187.3472μV</div>
<div class="a" style="left:15px;top:383.50px;width:366px;height:7.7px;background:#171717"></div>
<div class="t mt" style="left:19px;top:384.00px">Pk-Pk</div>
<div class="t mt" style="left:91.7px;top:384.00px;color:#e6e6e6">8.1390μV</div>
<div class="t mt" style="left:164.9px;top:384.00px;color:#e6e6e6">6.8693μV</div>
<div class="t mt" style="left:237.8px;top:384.00px;color:#e6e6e6">8.8270μV</div>
<div class="t mt" style="left:310.8px;top:384.00px;color:#e6e6e6">10.2794μV</div>
<div class="a" style="left:15px;top:391.20px;width:366px;height:7.7px;background:#212121"></div>
<div class="t mt" style="left:19px;top:391.70px">Stdev</div>
<div class="t mt" style="left:91.7px;top:391.70px;color:#e6e6e6">1.679511μV</div>
<div class="t mt" style="left:164.9px;top:391.70px;color:#e6e6e6">1.180562μV</div>
<div class="t mt" style="left:237.8px;top:391.70px;color:#e6e6e6">1.613238μV</div>
<div class="t mt" style="left:310.8px;top:391.70px;color:#e6e6e6">1.849394μV</div>
<div class="a" style="left:15px;top:398.90px;width:366px;height:7.7px;background:#171717"></div>
<div class="t mt" style="left:19px;top:399.40px">Count</div>
<div class="t mt" style="left:91.7px;top:399.40px;color:#e6e6e6">172</div>
<div class="t mt" style="left:164.9px;top:399.40px;color:#e6e6e6">257</div>
<div class="t mt" style="left:237.8px;top:399.40px;color:#e6e6e6">257</div>
<div class="t mt" style="left:310.8px;top:399.40px;color:#e6e6e6">257</div>
<div class="a" style="left:157.5px;top:348.7px;width:4px;height:1px;background:#3c3c3c"></div>
<div class="a" style="left:230.5px;top:348.7px;width:4px;height:1px;background:#3c3c3c"></div>
<div class="a" style="left:303.5px;top:348.7px;width:4px;height:1px;background:#3c3c3c"></div>
<div class="a" style="left:376.5px;top:348.7px;width:4px;height:1px;background:#3c3c3c"></div>
<div class="a" style="left:381px;top:345px;width:365px;height:7.7px;background:#212121"></div>
<div class="t" style="left:384px;top:345.2px;font-size:7px;line-height:8px;color:#ddd;letter-spacing:-0.5px">***</div>
<div class="a" style="left:406.5px;top:375px;width:22px;height:1.2px;background:#4a4a4a"></div>
<div class="a" style="left:416.9px;top:365px;width:1.2px;height:22px;background:#4a4a4a"></div>
<div class="a" style="left:454px;top:345px;width:1px;height:7.7px;background:#161616"></div>
<div class="t" style="left:457px;top:345.2px;font-size:7px;line-height:8px;color:#ddd;letter-spacing:-0.5px">***</div>
<div class="a" style="left:479.5px;top:375px;width:22px;height:1.2px;background:#4a4a4a"></div>
<div class="a" style="left:489.9px;top:365px;width:1.2px;height:22px;background:#4a4a4a"></div>
<div class="a" style="left:527px;top:345px;width:1px;height:7.7px;background:#161616"></div>
<div class="t" style="left:530px;top:345.2px;font-size:7px;line-height:8px;color:#ddd;letter-spacing:-0.5px">***</div>
<div class="a" style="left:552.5px;top:375px;width:22px;height:1.2px;background:#4a4a4a"></div>
<div class="a" style="left:562.9px;top:365px;width:1.2px;height:22px;background:#4a4a4a"></div>
<div class="a" style="left:600px;top:345px;width:1px;height:7.7px;background:#161616"></div>
<div class="t" style="left:603px;top:345.2px;font-size:7px;line-height:8px;color:#ddd;letter-spacing:-0.5px">***</div>
<div class="a" style="left:625.5px;top:375px;width:22px;height:1.2px;background:#4a4a4a"></div>
<div class="a" style="left:635.9px;top:365px;width:1.2px;height:22px;background:#4a4a4a"></div>
<div class="a" style="left:673px;top:345px;width:1px;height:7.7px;background:#161616"></div>
<div class="t" style="left:676px;top:345.2px;font-size:7px;line-height:8px;color:#ddd;letter-spacing:-0.5px">***</div>
<div class="a" style="left:698.5px;top:375px;width:22px;height:1.2px;background:#4a4a4a"></div>
<div class="a" style="left:708.9px;top:365px;width:1.2px;height:22px;background:#4a4a4a"></div>
<svg class="a" style="left:746px;top:345.5px" width="11" height="11"><rect width="11" height="11" fill="#262626"/><path d="M2 2L9 9M9 2L2 9" stroke="#484848" stroke-width="1"/></svg>
<div class="a" style="left:15.5px;top:410.5px;width:59px;height:24px;background:#1a1a1a;border:1px solid #2a4a70;box-sizing:border-box"></div>
<div class="a" style="left:16.5px;top:419px;width:57px;height:15px;background:#2f2f2f"></div>
<div class="a" style="left:17.0px;top:412px;width:19.5px;height:6.2px;background:#f0f020"></div>
<div class="t" style="left:17.0px;top:411px;width:19.5px;text-align:center;font-size:6.6px;line-height:8px;color:#333">C1</div>
<div class="t" style="left:15.5px;top:411px;width:58px;text-align:right;font-size:6.6px;line-height:8px;color:#d8d830">DC50</div>
<div class="t" style="left:16.5px;top:418.5px;font-size:6.6px;line-height:8px;color:#e0e0e0">1X</div>
<div class="t" style="left:15.5px;top:418.5px;width:58px;text-align:right;font-size:6.6px;line-height:8px;color:#e0e0e0">5.00mV/</div>
<div class="t" style="left:16.5px;top:425.5px;font-size:6.6px;line-height:8px;color:#e0e0e0">FULL</div>
<div class="t" style="left:15.5px;top:425.5px;width:58px;text-align:right;font-size:6.6px;line-height:8px;color:#e0e0e0">-6.30mV</div>
<div class="a" style="left:75.8px;top:410.5px;width:59px;height:24px;background:#1a1a1a;box-sizing:border-box"></div>
<div class="a" style="left:76.8px;top:419px;width:57px;height:15px;background:#2f2f2f"></div>
<div class="a" style="left:77.3px;top:412px;width:19.5px;height:6.2px;background:#f0209a"></div>
<div class="t" style="left:77.3px;top:411px;width:19.5px;text-align:center;font-size:6.6px;line-height:8px;color:#333">C2</div>
<div class="t" style="left:75.8px;top:411px;width:58px;text-align:right;font-size:6.6px;line-height:8px;color:#c01070">DC50</div>
<div class="t" style="left:76.8px;top:418.5px;font-size:6.6px;line-height:8px;color:#e0e0e0">1X</div>
<div class="t" style="left:75.8px;top:418.5px;width:58px;text-align:right;font-size:6.6px;line-height:8px;color:#e0e0e0">5.00mV/</div>
<div class="t" style="left:76.8px;top:425.5px;font-size:6.6px;line-height:8px;color:#e0e0e0">FULL</div>
<div class="t" style="left:75.8px;top:425.5px;width:58px;text-align:right;font-size:6.6px;line-height:8px;color:#e0e0e0">-550μV</div>
<div class="a" style="left:136.1px;top:410.5px;width:59px;height:24px;background:#1a1a1a;box-sizing:border-box"></div>
<div class="a" style="left:137.1px;top:419px;width:57px;height:15px;background:#2f2f2f"></div>
<div class="a" style="left:137.6px;top:412px;width:19.5px;height:6.2px;background:#20f0f0"></div>
<div class="t" style="left:137.6px;top:411px;width:19.5px;text-align:center;font-size:6.6px;line-height:8px;color:#333">C3</div>
<div class="t" style="left:136.1px;top:411px;width:58px;text-align:right;font-size:6.6px;line-height:8px;color:#20b0c0">DC50</div>
<div class="t" style="left:137.1px;top:418.5px;font-size:6.6px;line-height:8px;color:#e0e0e0">1X</div>
<div class="t" style="left:136.1px;top:418.5px;width:58px;text-align:right;font-size:6.6px;line-height:8px;color:#e0e0e0">5.00mV/</div>
<div class="t" style="left:137.1px;top:425.5px;font-size:6.6px;line-height:8px;color:#e0e0e0">FULL</div>
<div class="t" style="left:136.1px;top:425.5px;width:58px;text-align:right;font-size:6.6px;line-height:8px;color:#e0e0e0">5.35mV</div>
<div class="a" style="left:196.39999999999998px;top:410.5px;width:59px;height:24px;background:#1a1a1a;box-sizing:border-box"></div>
<div class="a" style="left:197.39999999999998px;top:419px;width:57px;height:15px;background:#2f2f2f"></div>
<div class="a" style="left:197.89999999999998px;top:412px;width:19.5px;height:6.2px;background:#20e020"></div>
<div class="t" style="left:197.89999999999998px;top:411px;width:19.5px;text-align:center;font-size:6.6px;line-height:8px;color:#333">C4</div>
<div class="t" style="left:196.39999999999998px;top:411px;width:58px;text-align:right;font-size:6.6px;line-height:8px;color:#20b020">DC50</div>
<div class="t" style="left:197.39999999999998px;top:418.5px;font-size:6.6px;line-height:8px;color:#e0e0e0">1X</div>
<div class="t" style="left:196.39999999999998px;top:418.5px;width:58px;text-align:right;font-size:6.6px;line-height:8px;color:#e0e0e0">5.00mV/</div>
<div class="t" style="left:197.39999999999998px;top:425.5px;font-size:6.6px;line-height:8px;color:#e0e0e0">FULL</div>
<div class="t" style="left:196.39999999999998px;top:425.5px;width:58px;text-align:right;font-size:6.6px;line-height:8px;color:#e0e0e0">12.6mV</div>
<div class="a" style="left:256.5px;top:411px;width:58px;height:23px;border:1px dotted #232323;box-sizing:border-box"></div>
<div class="a" style="left:275px;top:422px;width:22px;height:1px;background:#444"></div>
<div class="a" style="left:285.5px;top:415px;width:1px;height:15px;background:#444"></div>
<div class="a" style="left:15px;top:408.4px;width:744px;height:1px;background:#1c1c1c"></div>
<div class="a" style="left:612px;top:411px;width:60px;height:23px;background:#1f1f1f"></div>
<div class="a" style="left:612px;top:418.6px;width:60px;height:15.4px;background:#2e2e2e"></div>
<div class="t" style="left:614px;top:410.5px;font-size:6.4px;line-height:8px;color:#e8e8e8">Timebase</div>
<div class="t" style="left:614px;top:418px;font-size:6.4px;line-height:8px;color:#ddd">0.00s</div>
<div class="t" style="left:643px;top:418px;font-size:6.4px;line-height:8px;color:#ddd">5.00ms/div</div>
<div class="t" style="left:614px;top:424.5px;font-size:6.4px;line-height:8px;color:#ddd">2.00M</div>
<div class="t" style="left:643px;top:424.5px;font-size:6.4px;line-height:8px;color:#ddd">40.2Sa/s</div>
<div class="a" style="left:673.5px;top:411px;width:53px;height:23px;background:#1f1f1f"></div>
<div class="a" style="left:673.5px;top:418.6px;width:53px;height:15.4px;background:#2e2e2e"></div>
<div class="t" style="left:675.5px;top:411px;font-size:6.4px;line-height:8px;color:#d8d040">Trigger</div>
<div class="t" style="left:709px;top:411px;font-size:6.4px;line-height:8px;color:#d8d040">C1 DC</div>
<div class="t" style="left:675.5px;top:418px;font-size:6.4px;line-height:8px;color:#ddd">Auto</div>
<div class="t" style="left:709px;top:418px;font-size:6.4px;line-height:8px;color:#ddd">0.00V</div>
<div class="t" style="left:675.5px;top:425px;font-size:6.4px;line-height:8px;color:#ddd">Edge</div>
<div class="t" style="left:709px;top:425px;font-size:6.4px;line-height:8px;color:#ddd">Rising</div>
<div class="a" style="left:727.5px;top:411px;width:31.5px;height:23px;background:#222"></div>
<div class="a" style="left:727.5px;top:411px;width:31.5px;height:24px;overflow:hidden"><div class="t" style="left:4px;top:7px;font-size:6.4px;line-height:8px;color:#ccc">09:53:44</div><div class="t" style="left:2.5px;top:14px;font-size:6.4px;line-height:8px;color:#bbb">2024/03/28</div></div>
<svg class="a" style="left:0;top:0" width="774" height="452"><defs><linearGradient id="ag" x1="0.65" y1="0" x2="0.35" y2="1"><stop offset="0" stop-color="#f28a2a"/><stop offset="0.22" stop-color="#e85a2a"/><stop offset="0.45" stop-color="#dc2630"/><stop offset="1" stop-color="#a01e22"/></linearGradient><linearGradient id="tg2" x1="0" y1="0" x2="0.15" y2="1"><stop offset="0" stop-color="#fff"/><stop offset="0.55" stop-color="#fff"/><stop offset="0.7" stop-color="#d43030"/><stop offset="1" stop-color="#b82020"/></linearGradient><radialGradient id="cg" cx="0.5" cy="0.3" r="0.7"><stop offset="0" stop-color="#bbb"/><stop offset="1" stop-color="#666"/></radialGradient></defs><circle cx="751.6" cy="398.4" r="5" fill="url(#cg)"/><path d="M560 440.5C569 428 577 410 586 403.5Q589 401.5 594 401.2L622.7 399.2L613 411.5L612.5 429.5L589 429.5L583 440.5Z M585.5 425C588 418 591 412.5 596 411.3L604 410.3C601.5 416 599.5 421 598.5 425Z" fill="url(#ag)" fill-rule="evenodd"/><path d="M604 429.5Q620 430 628 428Q636 424.5 643 419.3Q638 426 630 432Q622 435 604 434.8Z" fill="#c42428"/><text x="586" y="439.8" font-family="Liberation Sans" font-weight="bold" font-style="italic" font-size="13.2" fill="url(#tg2)" stroke="#a81616" stroke-width="1.2" paint-order="stroke" textLength="52" lengthAdjust="spacingAndGlyphs">CCEXP</text><text x="649" y="441" font-family="Liberation Sans" font-weight="bold" font-style="italic" font-size="11" fill="#2a2a2a" textLength="111" lengthAdjust="spacing">www.hncsw.net</text><g style="filter:drop-shadow(0 0 0.7px #3a0606)"><path d="M649 402.6H674 M655 399.3V405.7 M668 399.3V405.7" fill="none" stroke="#e2222e" stroke-width="3.0" stroke-linecap="butt"/><path d="M651 407L672 419.5 M671 407L650 419.5" fill="none" stroke="#e2222e" stroke-width="3.2" stroke-linecap="butt"/><path d="M678 402.2H702.8 M690.7 399.5V406" fill="none" stroke="#e2222e" stroke-width="3.2" stroke-linecap="butt"/><rect x="682.3" y="407.9" width="16.6" height="4.1" fill="none" stroke="#e2222e" stroke-width="2.5"/><path d="M686.5 413Q686 418 679.5 420 M692.5 413V418.6H702V415.5" fill="none" stroke="#e2222e" stroke-width="2.8" stroke-linecap="butt"/><g fill="#e2222e"><rect x="718.6" y="398.8" width="2" height="2"/><rect x="707.8" y="400.2" width="24.3" height="2.4"/><rect x="707.8" y="400.2" width="2" height="3.4"/><rect x="730.1" y="400.2" width="2" height="3.4"/><rect x="709" y="403.6" width="22" height="1.9"/><rect x="707.5" y="406" width="24.8" height="2.2"/><rect x="709.5" y="408.8" width="21" height="1.9"/><rect x="713.3" y="402.5" width="2.2" height="9"/><rect x="722.8" y="402.5" width="2.2" height="9"/><rect x="708" y="411.4" width="24" height="2.2"/><path d="M717.5 413L708 419.3H711.5L719.5 414.5Z M721.5 413L732 419.3H728.5L720 414.5Z"/><rect x="712" y="416.2" width="16" height="2.3"/></g><g fill="#e2222e"><rect x="736.7" y="400.2" width="23.2" height="2.2"/><rect x="737.5" y="402.4" width="21.6" height="5.4"/><rect x="736.7" y="407.8" width="23.3" height="2.3"/><rect x="738" y="412" width="21.2" height="7.2"/></g><g fill="#5a1212"><rect x="740.5" y="403.8" width="3.2" height="2.6"/><rect x="748.2" y="403.5" width="2" height="3.4"/><rect x="753.5" y="403.8" width="3.2" height="2.6"/><rect x="742" y="413.8" width="13" height="0.6"/><rect x="742" y="416.6" width="13" height="0.6"/></g></g></svg>
</body></html>
